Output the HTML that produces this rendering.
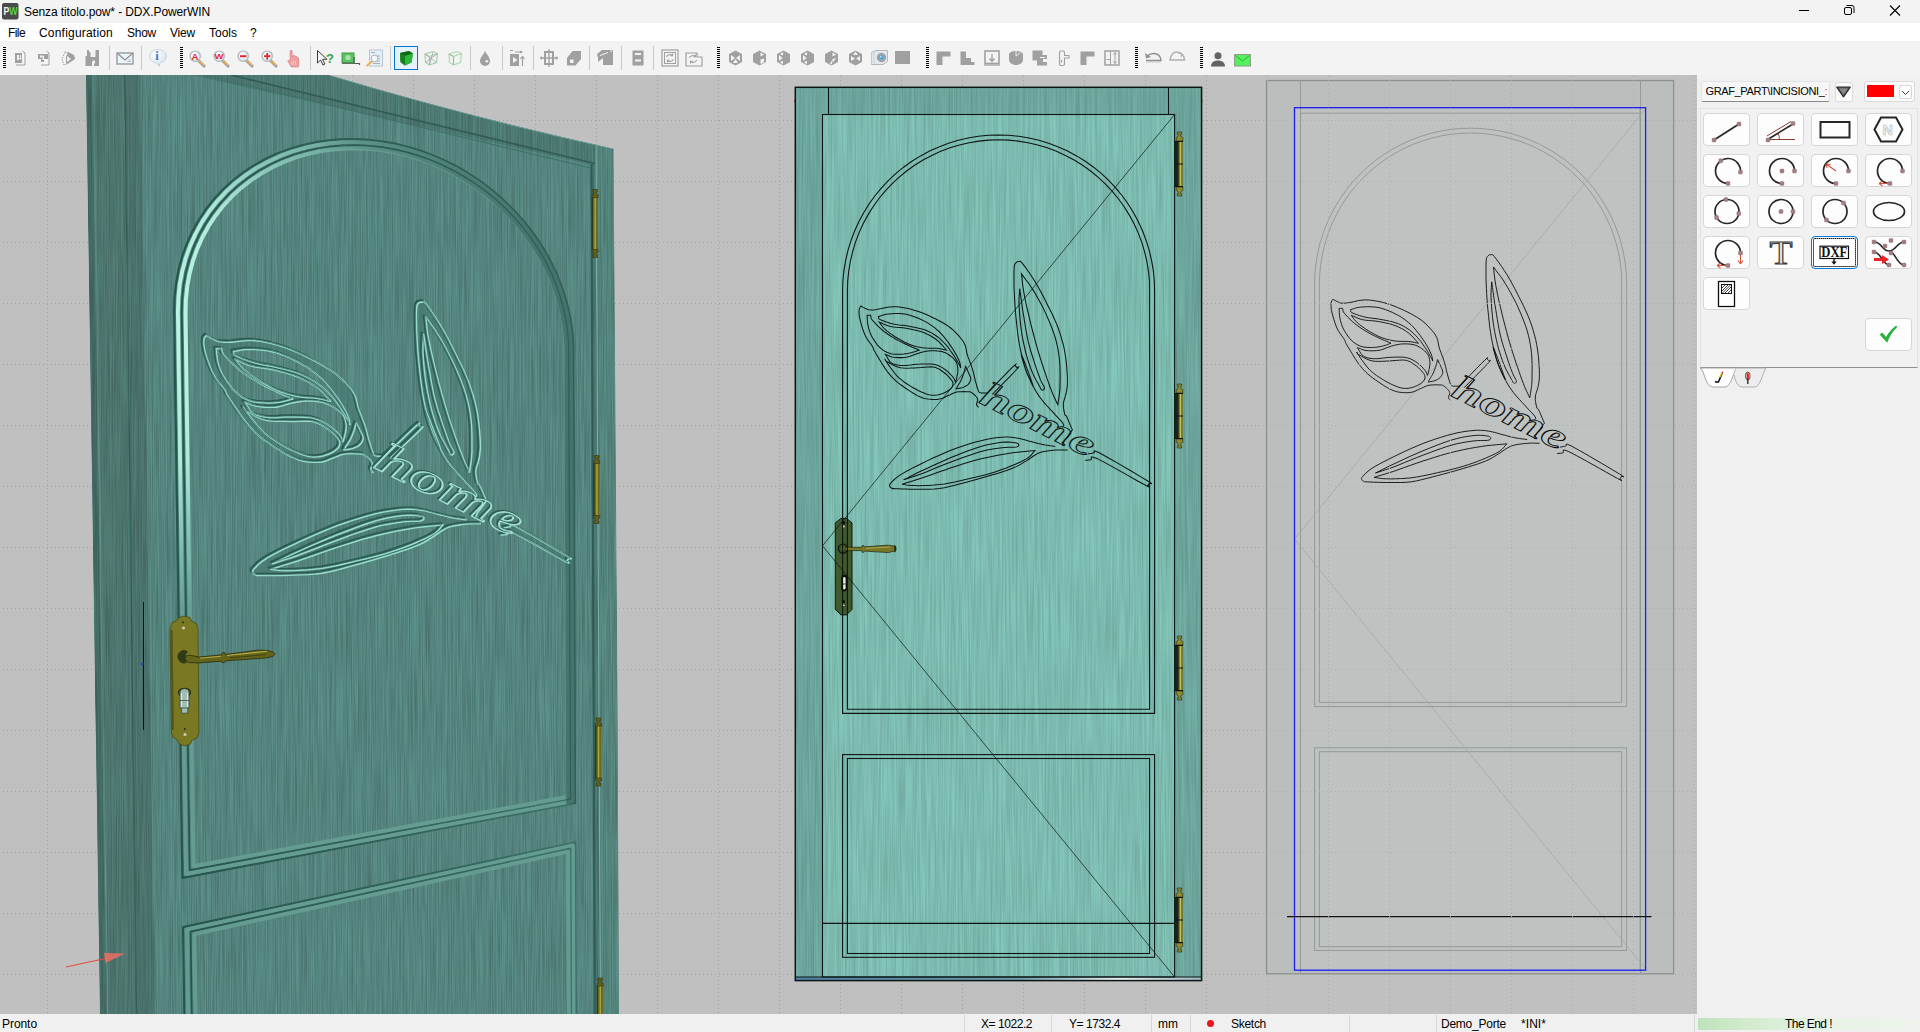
<!DOCTYPE html>
<html lang="it"><head><meta charset="utf-8"><title>Senza titolo.pow* - DDX.PowerWIN</title>
<style>
*{box-sizing:border-box}
html,body{margin:0;padding:0}
body{width:1920px;height:1032px;overflow:hidden;background:#f0f0f0;font:12px "Liberation Sans",sans-serif;color:#000;position:relative}
.abs{position:absolute}
#titlebar{left:0;top:0;width:1920px;height:23px;background:#f3f3f3}
#menubar{left:0;top:23px;width:1920px;height:18px;background:#fff}
#toolbar{left:0;top:41px;width:1920px;height:34px;background:#f3f3f3}
#viewport{left:0;top:75px;width:1697px;height:939px;background:#c0c0c0;overflow:hidden}
#side{left:1697px;top:75px;width:223px;height:939px;background:#f0f0f0}
#status{left:0;top:1014px;width:1920px;height:18px;background:#f0f0f0}
.t{position:absolute;white-space:pre;line-height:14px}
.mi{position:absolute;top:3px;line-height:14px;white-space:pre}
.st{position:absolute;top:3px;line-height:14px;white-space:pre}
.sep{position:absolute;top:1px;width:1px;height:17px;background:#d7d7d7}
</style></head>
<body>
<div id="titlebar" class="abs">
<svg class="abs" style="left:2px;top:3px" width="17" height="17" viewBox="0 0 17 17"><rect x="0" y="0" width="16.5" height="16.5" rx="2" fill="#4a4a4a"/><text x="1.500" y="11.700" font-family="Liberation Sans,sans-serif" font-weight="bold" font-size="10" fill="#f2f2f2" textLength="14" lengthAdjust="spacingAndGlyphs">P<tspan fill="#5fd23c">W</tspan></text></svg>
<span class="t" style="left:24px;letter-spacing:-0.107px;top:5px;font-size:12px">Senza titolo.pow* - DDX.PowerWIN</span>
<svg class="abs" style="left:1790px;top:0" width="130" height="23" viewBox="0 0 130 23" fill="none" stroke="#000" stroke-width="1">
<path d="M9 10.5h10"/>
<rect x="54.5" y="7.5" width="7" height="7" rx="1.5"/><path d="M56.5 5.5h5.5a2 2 0 0 1 2 2v5.500"/>
<path d="M100 5.500l10 10M110 5.500l-10 10" stroke-width="1.100"/>
</svg>
</div>
<div id="menubar" class="abs"><span class="mi" style="left:8px;letter-spacing:-0.585px;">File</span><span class="mi" style="left:39px;letter-spacing:0.201px;">Configuration</span><span class="mi" style="left:127px;letter-spacing:-0.258px;">Show</span><span class="mi" style="left:170px;letter-spacing:-0.200px;">View</span><span class="mi" style="left:209px;letter-spacing:-0.004px;">Tools</span><span class="mi" style="left:250px;letter-spacing:0.010px;">?</span></div>
<div id="toolbar" class="abs"><i class="abs" style="left:3px;top:6px;width:3px;height:22px;background:repeating-linear-gradient(180deg,#000 0,#000 1px,transparent 1px,transparent 2px)"></i><i class="abs" style="left:180px;top:6px;width:3px;height:22px;background:repeating-linear-gradient(180deg,#000 0,#000 1px,transparent 1px,transparent 2px)"></i><i class="abs" style="left:717px;top:6px;width:3px;height:22px;background:repeating-linear-gradient(180deg,#000 0,#000 1px,transparent 1px,transparent 2px)"></i><i class="abs" style="left:926px;top:6px;width:3px;height:22px;background:repeating-linear-gradient(180deg,#000 0,#000 1px,transparent 1px,transparent 2px)"></i><i class="abs" style="left:1135px;top:6px;width:3px;height:22px;background:repeating-linear-gradient(180deg,#000 0,#000 1px,transparent 1px,transparent 2px)"></i><i class="abs" style="left:1200px;top:6px;width:3px;height:22px;background:repeating-linear-gradient(180deg,#000 0,#000 1px,transparent 1px,transparent 2px)"></i><i class="abs" style="left:109px;top:5px;width:1px;height:24px;background:#c9c9c9"></i><i class="abs" style="left:141px;top:5px;width:1px;height:24px;background:#c9c9c9"></i><i class="abs" style="left:310px;top:5px;width:1px;height:24px;background:#c9c9c9"></i><i class="abs" style="left:390px;top:5px;width:1px;height:24px;background:#c9c9c9"></i><i class="abs" style="left:470px;top:5px;width:1px;height:24px;background:#c9c9c9"></i><i class="abs" style="left:502px;top:5px;width:1px;height:24px;background:#c9c9c9"></i><i class="abs" style="left:533px;top:5px;width:1px;height:24px;background:#c9c9c9"></i><i class="abs" style="left:589px;top:5px;width:1px;height:24px;background:#c9c9c9"></i><i class="abs" style="left:621px;top:5px;width:1px;height:24px;background:#c9c9c9"></i><i class="abs" style="left:653px;top:5px;width:1px;height:24px;background:#c9c9c9"></i><svg class="abs" style="left:13px;top:9px" width="16" height="16" viewBox="0 0 16 16" ><path d="M2 3h7v10H2z" fill="#a0a0a0"/><path d="M4 5h2v5H4zM7 5h1v3h1l-1.500 2L6 8h1z" fill="#f3f3f3"/><path d="M9.500 1l2.500 2v12H3" fill="none" stroke="#a0a0a0"/></svg><svg class="abs" style="left:37px;top:9px" width="16" height="16" viewBox="0 0 16 16" ><path d="M1 4h10v5H7v3H4V9H1z" fill="#a0a0a0"/><path d="M3 5.500h2v2H3zM6 5l1.500 2H7v3H5.500V7H5z" fill="#f3f3f3"/><path d="M9.500 1l2.500 2v12H4" fill="none" stroke="#a0a0a0"/></svg><svg class="abs" style="left:60px;top:9px" width="17" height="17" viewBox="0 0 17 17" ><path d="M5 2l5 1 5 5-6 5-5 2-2-6z" fill="none" stroke="#a0a0a0" stroke-dasharray="1.500 1"/><path d="M8 2l6 3 1 4-3 2-6 3V7z" fill="#a0a0a0"/><path d="M7 6l4 3-4 3z" fill="#f3f3f3"/></svg><svg class="abs" style="left:84px;top:8px" width="16" height="18" viewBox="0 0 16 18" ><path d="M3 1v6H1.500v10H8v-4h2v4h5V1h-3.500v7H6.500V3H5V1z" fill="#a0a0a0"/><path d="M8.500 11.500h2.500v3h-2.500z" fill="#f3f3f3"/></svg><svg class="abs" style="left:116px;top:11px" width="18" height="13" viewBox="0 0 18 13" ><rect x="1" y="1" width="16" height="11" fill="#e9f6fb" stroke="#9a9a9a" stroke-width="1.400"/><path d="M1.500 1.500L9 8l7.500 -6.500" fill="none" stroke="#8c8c8c" stroke-width="1.200"/><path d="M11 9.500h4M12 8h3" stroke="#b5b5b5" stroke-width=".8"/></svg><svg class="abs" style="left:148px;top:7px" width="20" height="20" viewBox="0 0 20 20" ><defs><radialGradient id="ig" cx="40%" cy="30%" r="75%"><stop offset="0" stop-color="#fff"/><stop offset=".7" stop-color="#dfeaf4"/><stop offset="1" stop-color="#aebdcc"/></radialGradient></defs><path d="M10 1.500c4.800 0 8.300 3 8.300 6.800 0 3.300-2.600 6-6.300 6.600l-.5 3.300-3-3.200C4.300 14.600 1.600 11.800 1.600 8.300 1.600 4.500 5.200 1.500 10 1.500z" fill="url(#ig)" stroke="#b9c4d0" stroke-width=".6"/><text x="7.300" y="12.300" font-family="Liberation Serif,serif" font-weight="bold" font-size="12.500" fill="#4a72c8">i</text></svg><svg class="abs" style="left:189px;top:9px" width="18" height="18" viewBox="0 0 18 18" ><defs><radialGradient id="lg" cx="40%" cy="35%" r="70%"><stop offset="0" stop-color="#fff"/><stop offset="1" stop-color="#cfe3ee"/></radialGradient></defs><path d="M9.500 10.500L15 16" stroke="#9a9a9a" stroke-width="3" stroke-linecap="round"/><path d="M9.500 10.200L14.600 15.300" stroke="#f4b24a" stroke-width="1.600" stroke-linecap="round"/><circle cx="6.200" cy="6.200" r="5.200" fill="url(#lg)" stroke="#a9b4bb" stroke-width="1.200"/><text x="2.600" y="9.800" font-family="Liberation Sans,sans-serif" font-weight="bold" font-size="9.500" fill="#e8262a">A</text></svg><svg class="abs" style="left:213px;top:9px" width="18" height="18" viewBox="0 0 18 18" ><defs><radialGradient id="lg" cx="40%" cy="35%" r="70%"><stop offset="0" stop-color="#fff"/><stop offset="1" stop-color="#cfe3ee"/></radialGradient></defs><path d="M9.500 10.500L15 16" stroke="#9a9a9a" stroke-width="3" stroke-linecap="round"/><path d="M9.500 10.200L14.600 15.300" stroke="#f4b24a" stroke-width="1.600" stroke-linecap="round"/><circle cx="6.200" cy="6.200" r="5.200" fill="url(#lg)" stroke="#a9b4bb" stroke-width="1.200"/><text x="1.600" y="9.300" font-family="Liberation Sans,sans-serif" font-weight="bold" font-size="8" fill="#e8262a" textLength="9" lengthAdjust="spacingAndGlyphs">W</text></svg><svg class="abs" style="left:237px;top:9px" width="18" height="18" viewBox="0 0 18 18" ><defs><radialGradient id="lg" cx="40%" cy="35%" r="70%"><stop offset="0" stop-color="#fff"/><stop offset="1" stop-color="#cfe3ee"/></radialGradient></defs><path d="M9.500 10.500L15 16" stroke="#9a9a9a" stroke-width="3" stroke-linecap="round"/><path d="M9.500 10.200L14.600 15.300" stroke="#f4b24a" stroke-width="1.600" stroke-linecap="round"/><circle cx="6.200" cy="6.200" r="5.200" fill="url(#lg)" stroke="#a9b4bb" stroke-width="1.200"/><path d="M3 6.200h6.400" stroke="#e8262a" stroke-width="2"/></svg><svg class="abs" style="left:261px;top:9px" width="18" height="18" viewBox="0 0 18 18" ><defs><radialGradient id="lg" cx="40%" cy="35%" r="70%"><stop offset="0" stop-color="#fff"/><stop offset="1" stop-color="#cfe3ee"/></radialGradient></defs><path d="M9.500 10.500L15 16" stroke="#9a9a9a" stroke-width="3" stroke-linecap="round"/><path d="M9.500 10.200L14.600 15.300" stroke="#f4b24a" stroke-width="1.600" stroke-linecap="round"/><circle cx="6.200" cy="6.200" r="5.200" fill="url(#lg)" stroke="#a9b4bb" stroke-width="1.200"/><path d="M3 6.200h6.400M6.200 3v6.400" stroke="#e8262a" stroke-width="1.800"/></svg><svg class="abs" style="left:286px;top:8px" width="16" height="19" viewBox="0 0 16 19" ><path d="M5 1.200c.9 0 1.200.6 1.200 1.400V8l1-1.500c.5-.5 1.300-.4 1.500.2l.3.800c.5-.6 1.400-.5 1.700.2l.3.900c.5-.5 1.300-.3 1.500.4.400 1.800.6 3.500.3 5.200L12.500 18H5.300L2 12.500c-.5-.8.300-1.700 1.200-1.200l.9.800V2.600c0-.8.200-1.400.9-1.400z" fill="#eda1a3" stroke="#d9777b" stroke-width=".6"/><path d="M7.500 12v4M9.500 12v4M5.500 12.500v3" stroke="#f6d2d3" stroke-width=".7"/></svg><svg class="abs" style="left:316px;top:8px" width="20" height="18" viewBox="0 0 20 18" ><path d="M1.500 1.500v12.500l3.200-3 2.200 5 2-.9-2.200-4.800h4.300z" fill="#f3f3f3" stroke="#3c3c3c" stroke-width="1"/><text x="10" y="14" font-family="Liberation Sans,sans-serif" font-weight="bold" font-size="13" fill="#35a545">?</text></svg><svg class="abs" style="left:341px;top:11px" width="20" height="14" viewBox="0 0 20 14" ><rect x="1" y="1" width="12" height="9.500" fill="#5cc463" stroke="#3e9a48" stroke-width="1"/><circle cx="7" cy="5.500" r="2.600" fill="#a9e3ad"/><path d="M13 5v6.500h5.500v1.500" fill="none" stroke="#555" stroke-width="1.200"/><path d="M1 11.500h13" stroke="#6a6a6a" stroke-width="1"/></svg><svg class="abs" style="left:365px;top:8px" width="19" height="19" viewBox="0 0 19 19" ><rect x="4.500" y="1" width="13" height="16" fill="#e6eef8" stroke="#b9c6d6" stroke-width="1"/><path d="M6 3.500h4M12 7h3M12 9.500h3M12 12h3M8 14.500h7" stroke="#9aa7b8" stroke-width=".9"/><circle cx="9.500" cy="9.500" r="3.400" fill="#f4f8fc" stroke="#a9b4bb" stroke-width="1"/><path d="M7 12.500L2 16.500" stroke="#f0ae48" stroke-width="1.800" stroke-linecap="round"/></svg><i class="abs" style="left:394px;top:5px;width:24px;height:24px;background:#e5f1fb;border:1px solid #0078d7"></i><svg class="abs" style="left:398px;top:9px" width="16" height="16" viewBox="0 0 16 16" ><path d="M2 3l9-2 4 2.500-1.500 9L7 15.500 2.500 12z" fill="#1f9a2b"/><path d="M2 3l9-2 4 2.500L7 6z" fill="#0c6a16"/><path d="M7 6l8-2.500-1.500 9L7 15.500z" fill="#2fb53c"/><path d="M2 3l5 3v9.500L2.500 12z" fill="#15801f"/></svg><svg class="abs" style="left:423px;top:9px" width="16" height="16" viewBox="0 0 16 16" ><path d="M2 4l8-2.500 4.500 2-1 9L6.500 15 2.500 12.500zM2 4l4.500 2.500 8-3M6.500 6.500V15" fill="none" stroke="#9fcfa4" stroke-width="1.100"/><path d="M2 4l11.500 8.500M10 2.500l-3.500 12.500M14.500 3.500l-12 9" stroke="#a5a5a5" stroke-width=".8"/></svg><svg class="abs" style="left:447px;top:9px" width="16" height="16" viewBox="0 0 16 16" ><path d="M2 4l8-2.500 4.500 2-1 9L6.500 15 2.500 12.500zM2 4l4.500 2.500 8-3M6.500 6.500V15" fill="none" stroke="#a8d8ac" stroke-width="1.100"/><path d="M2 4l4.500 2.500V15" fill="none" stroke="#a9a9a9" stroke-width=".9"/></svg><svg class="abs" style="left:478px;top:8px" width="14" height="18" viewBox="0 0 14 18" ><path d="M7 1.500c.5 3 5 6 5 10.500a5 5 0 0 1-10 0C2 8 6.500 5 7 1.500z" fill="#a0a0a0"/><circle cx="8.800" cy="12.300" r="1.300" fill="#f3f3f3"/></svg><svg class="abs" style="left:509px;top:8px" width="17" height="18" viewBox="0 0 17 18" ><path d="M1 5h9v12H1z" fill="#a0a0a0"/><path d="M4 8l4.500 3L4 14z" fill="#f3f3f3"/><path d="M1 1.500h3M6 3h6M13.500 17V8M11.500 10l2-2.500 2 2.500" fill="none" stroke="#a0a0a0" stroke-width="1.200"/><circle cx="12" cy="3" r="1.300" fill="#a0a0a0"/></svg><svg class="abs" style="left:540px;top:8px" width="18" height="18" viewBox="0 0 18 18" ><path d="M5 3h8v12H5z" fill="none" stroke="#a0a0a0" stroke-width="2"/><path d="M9 0v18M0 9h18" stroke="#a0a0a0" stroke-width="1.300"/><path d="M2 7l-2 2 2 2zM16 7l2 2-2 2z" fill="#a0a0a0"/></svg><svg class="abs" style="left:566px;top:9px" width="16" height="16" viewBox="0 0 16 16" ><path d="M6.500 1H15v8l-5.500 6.500H1V8z" fill="#a0a0a0"/><path d="M4 9.500h3.500V13H4z" fill="#f3f3f3"/></svg><svg class="abs" style="left:596px;top:8px" width="18" height="17" viewBox="0 0 18 17" ><path d="M1 5L6 1h11v15H7v-7L2 13V9z" fill="#a0a0a0"/><path d="M4 6.500l8-3" stroke="#f3f3f3" stroke-width="1"/><path d="M14.500 1.500l1.500 1.500M16 1.500l-1.500 1.500" stroke="#f3f3f3" stroke-width=".8"/></svg><svg class="abs" style="left:632px;top:9px" width="12" height="16" viewBox="0 0 12 16" ><rect x="0.500" y="0.500" width="11" height="15" fill="#a0a0a0"/><path d="M3 4h6M3 10.500h6" stroke="#f3f3f3" stroke-width="2"/></svg><svg class="abs" style="left:661px;top:8px" width="18" height="18" viewBox="0 0 18 18" ><rect x="1" y="1" width="16" height="16" fill="none" stroke="#a0a0a0" stroke-width="1.200"/><rect x="3.500" y="3.500" width="11" height="11" fill="none" stroke="#a0a0a0" stroke-width="1"/><path d="M5.500 8a3.500 3 0 0 1 6-1.500M12.500 10a3.500 3 0 0 1-6 1.500M11.500 4.500v2.200h-2.200M6.500 13.500v-2.200h2.200" fill="none" stroke="#a0a0a0" stroke-width="1.100"/></svg><svg class="abs" style="left:685px;top:8px" width="18" height="18" viewBox="0 0 18 18" ><path d="M1 4h11v4h5v9H1z" fill="none" stroke="#a0a0a0" stroke-width="1.200"/><path d="M4.500 9a3.500 3 0 0 1 6-1.500M11.500 11a3.500 3 0 0 1-6 1.500M10.500 5.500v2.200H8.300M5.500 14.500v-2.200h2.200" fill="none" stroke="#a0a0a0" stroke-width="1.100"/></svg><svg class="abs" style="left:728px;top:9px" width="15" height="16" viewBox="0 0 15 16" ><path d="M7.500 0.500L14 4v8L7.500 15.500L1 12V4z" fill="#a0a0a0"/><path d="M3 5l4 3-4 3zM12 5l-4 3 4 3zM7.500 9l2.500 4h-5z" fill="#f3f3f3"/></svg><svg class="abs" style="left:752px;top:9px" width="15" height="16" viewBox="0 0 15 16" ><path d="M7.500 0.500L14 4v8L7.500 15.500L1 12V4z" fill="#a0a0a0"/><path d="M8.500 2.500l3.500 2-3.500 2zM8.500 9.500l3.500 -1v4l-3.500 1.500z" fill="#f3f3f3"/></svg><svg class="abs" style="left:776px;top:9px" width="15" height="16" viewBox="0 0 15 16" ><path d="M7.500 0.500L14 4v8L7.500 15.500L1 12V4z" fill="#a0a0a0"/><path d="M3 5l3.500 3-3.500 3zM7 2l-3 2 3 1.500zM7 10.500l-3 2 3 1.500z" fill="#f3f3f3"/></svg><svg class="abs" style="left:800px;top:9px" width="15" height="16" viewBox="0 0 15 16" ><path d="M7.500 0.500L14 4v8L7.500 15.500L1 12V4z" fill="#a0a0a0"/><path d="M3 5l3.500 3-3.500 3zM7 2l-3 2 3 1.500zM7 10.500l-3 2 3 1.500z" fill="#f3f3f3"/></svg><svg class="abs" style="left:824px;top:9px" width="15" height="16" viewBox="0 0 15 16" ><path d="M7.500 0.500L14 4v8L7.500 15.500L1 12V4z" fill="#a0a0a0"/><path d="M8.500 2.500l3.500 2-3.500 2zM12 8l-3.500 1v4zM8 10.500l-2 3 2 1z" fill="#f3f3f3"/></svg><svg class="abs" style="left:848px;top:9px" width="15" height="16" viewBox="0 0 15 16" ><path d="M7.500 0.500L14 4v8L7.500 15.500L1 12V4z" fill="#a0a0a0"/><path d="M7.500 1.500l2.500 3.500h-5zM3 6l4 2.500-4 2.500zM12 6l-4 2.500 4 2.500z" fill="#f3f3f3"/></svg><svg class="abs" style="left:870px;top:8px" width="19" height="17" viewBox="0 0 19 17" ><path d="M1.500 3.500L6 1.500h11.500v11L13 15.500H1.500z" fill="#e4e7e9" stroke="#adb2b6" stroke-width=".9"/><path d="M1.500 3.500v12M4 2.600v12.600" stroke="#c8cccf" stroke-width=".8" fill="none"/><circle cx="11.500" cy="8.500" r="4.200" fill="#9ea6ac" stroke="#7f878d" stroke-width=".6"/><circle cx="11.500" cy="8.500" r="2.300" fill="#47a9dc"/><circle cx="10.800" cy="7.800" r=".8" fill="#d9f0fb"/></svg><i class="abs" style="left:895px;top:10px;width:15px;height:13px;background:#a0a0a0"></i><svg class="abs" style="left:936px;top:10px" width="15" height="14" viewBox="0 0 15 14" ><path d="M0.500 0.500h14v5h-8v8.500h-6z" fill="#a0a0a0"/></svg><svg class="abs" style="left:960px;top:10px" width="15" height="14" viewBox="0 0 15 14" ><path d="M0.500 0.500h5.500v6.500h5v4h3.500v3h-14z" fill="#a0a0a0"/></svg><svg class="abs" style="left:984px;top:9px" width="16" height="16" viewBox="0 0 16 16" ><rect x="1" y="1" width="14" height="12.500" fill="none" stroke="#a0a0a0" stroke-width="1.600"/><path d="M0 15h16" stroke="#a0a0a0" stroke-width="1.200"/><path d="M8 4v7M5.500 8.500L8 11.500l2.500-3" fill="none" stroke="#a0a0a0" stroke-width="1.300"/></svg><svg class="abs" style="left:1008px;top:9px" width="16" height="16" viewBox="0 0 16 16" ><path d="M1 4.500C1 2.500 4 1 8 1s7 1.500 7 3.500v5.500c0 2.500-3 5-7 5s-7-2.500-7-5z" fill="#a0a0a0"/><path d="M8 1v5l4.500-3.500" fill="none" stroke="#f3f3f3" stroke-width=".9"/></svg><svg class="abs" style="left:1032px;top:9px" width="16" height="16" viewBox="0 0 16 16" ><path d="M0.500 0.500h10v4.500h4.500v4h-4v3h4v3.500h-10v-5h-4.500z" fill="#a0a0a0"/><path d="M8 7.500h5" stroke="#f3f3f3" stroke-width="1"/></svg><svg class="abs" style="left:1058px;top:9px" width="12" height="16" viewBox="0 0 12 16" ><path d="M1.500 2.500a1.500 1.500 0 0 1 1.500-1.500h2a1.500 1.500 0 0 1 1.500 1.500v3h4.500v2.500h-4.500v6a1.500 1.500 0 0 1-1.500 1.500h-2a1.500 1.500 0 0 1-1.500-1.500z" fill="none" stroke="#a0a0a0" stroke-width="1.100"/><path d="M3.500 10v2.500" stroke="#a0a0a0" stroke-width="1.200"/></svg><svg class="abs" style="left:1080px;top:10px" width="15" height="14" viewBox="0 0 15 14" ><path d="M0.500 0.500h14v5h-8v8.500h-6z" fill="#a0a0a0"/></svg><svg class="abs" style="left:1104px;top:9px" width="16" height="16" viewBox="0 0 16 16" ><rect x="1" y="1" width="14" height="14" fill="none" stroke="#a0a0a0" stroke-width="1.500"/><path d="M6.500 1v14M11 2.500v11M9.500 4.500l1.500-2 1.500 2M9.500 11.500l1.500 2 1.500-2M2.500 9.500h3.500" fill="none" stroke="#a0a0a0" stroke-width="1"/></svg><svg class="abs" style="left:1144px;top:10px" width="18" height="12" viewBox="0 0 18 12" ><path d="M2 9.500h15c0-4-3-7-7.500-7-2.500 0-4.500 1-6 2.500" fill="none" stroke="#909090" stroke-width="1.500"/><path d="M1 2l1 5.500 5-1.500z" fill="#909090"/><path d="M2 11h15" stroke="#c6c6c6" stroke-width="1"/></svg><svg class="abs" style="left:1168px;top:9px" width="18" height="12" viewBox="0 0 18 12" ><path d="M2 10h14.500c0-4-3-8-7.500-8-3 0-6 2-7 8z" fill="none" stroke="#b0b0b0" stroke-width="1.400"/><path d="M10 3l4 1-1 3" fill="none" stroke="#b0b0b0" stroke-width="1.100"/></svg><svg class="abs" style="left:1210px;top:11px" width="16" height="15" viewBox="0 0 16 15" ><circle cx="8" cy="3.800" r="3.500" fill="#636363"/><path d="M1 14.500c0-4 3-6 7-6s7 2 7 6z" fill="#636363"/></svg><svg class="abs" style="left:1234px;top:13px" width="17" height="13" viewBox="0 0 17 13" ><rect x=".6" y=".6" width="15.800" height="11.400" fill="#53f25a" stroke="#8a9a8a" stroke-width="1"/><path d="M1.500 1.500L8.500 7l7-5.500" fill="none" stroke="#3aa843" stroke-width="1"/></svg></div>
<div id="viewport" class="abs"><svg class="abs" style="left:0;top:0" width="1697" height="939" viewBox="0 75 1697 939"><defs>
<filter id="grainF" x="0" y="0" width="100%" height="100%"><feTurbulence type="fractalNoise" baseFrequency="0.55 0.012" numOctaves="2" seed="7"/><feColorMatrix type="matrix" values="0 0 0 0 0  0 0 0 0 0  0 0 0 0 0  1.6 0 0 0 -0.45"/></filter>
<filter id="grainD" x="0" y="0" width="100%" height="100%"><feTurbulence type="fractalNoise" baseFrequency="0.8 0.012" numOctaves="3" seed="3"/><feColorMatrix type="matrix" values="0 0 0 0 0  0 0 0 0 0  0 0 0 0 0  1.8 0 0 0 -0.5"/></filter>
<radialGradient id="gr3" gradientUnits="userSpaceOnUse" cx="150" cy="330" r="330"><stop offset="0" stop-color="#bdf6e5"/><stop offset=".4" stop-color="#aeeada"/><stop offset=".62" stop-color="#86c5b7"/><stop offset=".85" stop-color="#689f94"/><stop offset="1" stop-color="#659c91"/></radialGradient>
<linearGradient id="shg" gradientUnits="userSpaceOnUse" x1="300" y1="0" x2="540" y2="0"><stop offset="0" stop-color="#234d46" stop-opacity="0"/><stop offset=".5" stop-color="#234d46" stop-opacity=".3"/><stop offset="1" stop-color="#234d46" stop-opacity=".5"/></linearGradient>
<linearGradient id="gd3" gradientUnits="userSpaceOnUse" x1="176" y1="0" x2="575" y2="0"><stop offset="0" stop-color="#27554e"/><stop offset=".5" stop-color="#2f6057"/><stop offset="1" stop-color="#3d7168"/></linearGradient>
<linearGradient id="thr" x1="0" y1="0" x2="1" y2="0"><stop offset="0" stop-color="#4f7fa6"/><stop offset=".55" stop-color="#6f9fb0"/><stop offset=".8" stop-color="#e8f0f0"/><stop offset="1" stop-color="#9ab8c0"/></linearGradient>
<clipPath id="clipLeaf3"><path id="leaf3p" d="M140.3 63.7L591.2 164.4 594.3 1069.8 158.2 1229.8z"/></clipPath>
<clipPath id="clipDoor3"><path d="M86 75H329Q469 117 613.500 148.700L617.500 700L619 1014H100z"/></clipPath>
</defs><path d="M47.5 76V1014M108.5 76V1014M169.5 76V1014M230.5 76V1014M291.5 76V1014M352.5 76V1014M413.5 76V1014M474.5 76V1014M535.5 76V1014M596.5 76V1014M657.5 76V1014M718.5 76V1014M779.5 76V1014M840.5 76V1014M901.5 76V1014M962.5 76V1014M1023.5 76V1014M1084.5 76V1014M1145.5 76V1014M1206.5 76V1014M1267.5 76V1014M1328.5 76V1014M1389.5 76V1014M1450.5 76V1014M1511.5 76V1014M1572.5 76V1014M1633.5 76V1014M1694.5 76V1014M3.0 120.5H1697M3.0 181.5H1697M3.0 242.5H1697M3.0 303.5H1697M3.0 364.5H1697M3.0 425.5H1697M3.0 486.5H1697M3.0 547.5H1697M3.0 608.5H1697M3.0 669.5H1697M3.0 730.5H1697M3.0 791.5H1697M3.0 852.5H1697M3.0 913.5H1697M3.0 974.5H1697" fill="none" stroke="#a2a2a2" stroke-width="1" stroke-dasharray="1 3" opacity="1"/><g clip-path="url(#clipDoor3)"><path d="M86 75H329Q469 117 613.500 148.700L617.500 700L619 1014H100z" fill="#527f78"/><path d="M86 75H124.700L136.500 1014H100z" fill="#547f78"/><path d="M89 75L103 1014" stroke="#48736b" stroke-width="6"/><path d="M93.500 75L107.500 1014" stroke="#659b91" stroke-width="1.600" opacity=".8"/><path d="M124.700 75H141L153.500 1014H136.500z" fill="#527c76"/><path d="M124.700 75L136.500 1014" stroke="#39695f" stroke-width="1.300"/><path d="M141 50L231 75L595 163.500L596 144.500L329 75z" fill="#53837b"/><path d="M140.3 63.7L591.2 164.4 594.3 1069.8 158.2 1229.8z" fill="#5c9089"/><path d="M596 144.500L613.500 148.700L617.500 700L619 1014H600.500z" fill="#5b8f87"/><rect x="86" y="75" width="534" height="939" fill="#1d423c" filter="url(#grainD)" opacity=".2"/><path d="M591.500 164L594.800 1014" stroke="#2f5d56" stroke-width="2.200"/><path d="M596 144.500L600.500 1014" stroke="#7ab5aa" stroke-width="1"/><path d="M204.600 75L590.400 168" stroke="#3f746b" stroke-width="1.100"/><path d="M231 75L595 163.500" stroke="#2f5d56" stroke-width="1.600"/><path d="M329 75Q469 117 613.500 148.700" stroke="#6aa89d" stroke-width="1.200" fill="none"/><g clip-path="url(#clipLeaf3)" fill="none" stroke-linejoin="round"><path d="M182.4 877.9L174.1 311.3 174.5 297.4 176 283.7 178.4 270.2 181.9 257.1 186.5 244.4 192 232.1 198.4 220.5 205.8 209.4 214 199 223 189.4 232.8 180.5 243.2 172.4 254.2 165.2 265.7 158.8 277.7 153.3 290.1 148.7 302.8 145 315.7 142.2 328.8 140.3 342.1 139.2 355.4 139.1 368.6 139.8 381.8 141.3 394.9 143.6 407.7 146.7 420.4 150.6 432.7 155.2 444.7 160.4 456.4 166.3 467.6 172.8 478.4 179.9 488.7 187.5 498.6 195.6 507.8 204.2 516.6 213.2 524.8 222.5 532.3 232.2 539.3 242.2 545.7 252.5 551.4 263.1 556.5 273.8 560.9 284.7 564.7 295.7 567.7 306.8 570.2 317.9 571.9 329.1 573 340.3 573.3 351.4 575.1 803.1zM183.1 927.1L575.2 842.4 576.1 1058.1 187 1196.3z" stroke="url(#gd3)" stroke-width="2.2"/><path d="M186.1 874L177.9 311.7 178.4 298 179.7 284.5 182.2 271.3 185.6 258.4 190.1 245.9 195.5 233.9 201.8 222.4 209 211.5 217.1 201.3 225.9 191.8 235.5 183 245.7 175.1 256.5 167.9 267.9 161.7 279.6 156.2 291.8 151.7 304.3 148 317 145.2 329.9 143.3 342.9 142.3 356 142.1 369.1 142.8 382 144.3 394.9 146.5 407.6 149.6 420 153.4 432.2 157.8 444 163 455.5 168.8 466.6 175.2 477.2 182.1 487.4 189.6 497.1 197.6 506.3 206 514.9 214.9 522.9 224.1 530.4 233.7 537.3 243.5 543.6 253.7 549.2 264 554.3 274.6 558.6 285.3 562.3 296.2 565.4 307.1 567.8 318.1 569.5 329.2 570.5 340.2 570.9 351.2 572.7 801zM186.9 929.4L572.9 845.5 573.7 1056.5 190.6 1191.8z" stroke="url(#gr3)" stroke-width="3.9"/><path d="M189.7 870.2L181.7 312.1 182.2 298.6 183.5 285.4 185.9 272.4 189.3 259.7 193.6 247.4 198.9 235.6 205.2 224.3 212.3 213.6 220.2 203.6 228.8 194.2 238.2 185.6 248.3 177.8 258.9 170.7 270 164.5 281.6 159.2 293.5 154.7 305.8 151 318.3 148.3 331 146.4 343.8 145.4 356.6 145.2 369.5 145.8 382.3 147.2 394.9 149.5 407.4 152.4 419.6 156.1 431.6 160.5 443.3 165.6 454.6 171.3 465.5 177.5 476 184.4 486.1 191.7 495.6 199.6 504.7 207.9 513.2 216.6 521.1 225.7 528.5 235.1 535.3 244.8 541.5 254.8 547.1 265 552 275.4 556.3 286 560 296.7 563 307.5 565.4 318.4 567.1 329.2 568.1 340.1 568.4 350.9 570.3 798.9zM190.6 931.7L570.5 848.5 571.3 1054.8 194.3 1187.4z" stroke="url(#gd3)" stroke-width="1.8"/><path d="M193.4 866.3L185.5 312.4 185.9 299.3 187.3 286.2 189.6 273.5 192.9 261 197.2 248.9 202.4 237.3 208.5 226.2 215.5 215.7 223.2 205.8 231.7 196.6 241 188.1 250.8 180.4 261.2 173.5 272.1 167.4 283.5 162.1 295.2 157.7 307.3 154.1 319.6 151.3 332.1 149.5 344.6 148.4 357.3 148.2 369.9 148.8 382.5 150.2 394.9 152.4 407.2 155.3 419.3 158.9 431.1 163.2 442.6 168.2 453.7 173.7 464.5 179.9 474.8 186.6 484.7 193.9 494.1 201.6 503.1 209.7 511.5 218.3 519.3 227.3 526.6 236.5 533.3 246.1 539.4 255.9 544.9 266 549.8 276.3 554 286.7 557.7 297.2 560.6 307.9 563 318.6 564.7 329.3 565.7 340 566 350.7 567.9 796.8zM194.4 934.1L568.1 851.6 568.9 1053.1 197.9 1183.1z" stroke="url(#gr3)" stroke-width="4"/><path d="M319.5 146.8L326.3 145.8 333.2 145 340 144.4 346.9 144.1 353.8 144 360.7 144.1 367.6 144.5 374.5 145.2 381.3 146 388.1 147.1 394.9 148.4 401.6 149.9 408.3 151.6 414.9 153.5 421.4 155.6 427.8 158 434.2 160.5 440.5 163.2 446.6 166.1 452.7 169.1 458.6 172.4 464.5 175.8 470.2 179.3 475.8 183.1 481.2 186.9 486.6 190.9 491.7 195.1 496.8 199.4 501.7 203.8 506.4 208.3 511 213 515.5 217.7 519.7 222.6 523.8 227.6 527.8 232.6 531.6 237.8 535.2 243 538.6 248.3 541.9 253.7 545 259.1 547.9 264.7 550.6 270.2 553.2 275.8 555.5 281.5 557.7 287.2 559.7 292.9 561.5 298.7 563.2 304.5 564.6 310.3 565.9 316.1 566.9 321.9 567.8 327.8 568.5 333.6 569 339.4 569.3 345.2 569.4 351 569.5 394.2 571.2 803.9" stroke="url(#shg)" stroke-width="10" stroke-linecap="butt"/><path d="M372.5 472.4L371.9 471.7 371.1 471 370.5 470.3 369.9 469.5 369.7 468.7 369.8 467.7 370.2 466.6 370.7 465.5 371.1 464.4 371.3 463.4 371.1 462.5 370.8 461.7 370.3 460.9 369.7 460 369 459.1 368.1 458.1 366.9 457 365.7 455.9 364.4 455 363.3 454.2 362.5 453.7 361.9 453.4 361.3 453.2 360.3 453.1 358.8 453 356.4 452.9 353.4 452.8 350.1 452.7 346.8 452.8 343.9 453.1 341.4 453.6 339 454.4 336.8 455.3 334.6 456.2 332.3 457.1 330 457.9 327.8 458.9 325.5 459.8 323.2 460.5 320.6 461.1 317.7 461.3 314.5 461.4 311.2 461.3 308 461 305 460.7 302.4 460.2 300 459.7 297.7 459 295.4 458.1 292.9 457 290.1 455.8 287.3 454.3 284.3 452.7 281.3 450.9 278 448.8 274.4 446.6 270.4 444 266.4 441.3 262.5 438.6 259 435.9 256 433.3 253.3 430.9 250.9 428.4 248.5 425.7 246.1 422.9 243.6 419.8 241.1 416.4 238.6 412.9 236.3 409.5 234.2 406.4 232.3 403.7 230.5 401 228.8 398.6 227.4 396.4 226.2 394.5 225.4 393.1 225.1 392.2 224.9 391.5 224.5 390.5 223.6 389 221.9 386.7 219.8 384.1 217.3 381.2 214.9 377.9 212.8 374.4 210.9 370.5 209 366 207.2 361.3 205.7 356.9 204.5 353 203.6 349.6 203.1 346.6 202.7 343.9 202.6 341.5 202.7 339.5 203 337.9 203.5 336.8 204.2 336.1 204.9 335.3 205.6 334.5 206.8 335.2 207.9 335.9 209.1 336.6 210.3 337.3 211.6 337.9 213 338.6 214.3 339.3 215.8 339.9 217.3 340.5 219 340.9 220.8 341.1 222.6 341.3 224.6 341.4 226.9 341.3 229.5 341.2 232.7 341 236.4 340.6 240.3 340.1 244.1 339.8 247.7 339.6 250.8 339.6 253.6 339.7 256.5 340 259.5 340.4 263 341 267 341.9 271.4 342.9 276 344.2 280.8 345.6 285.5 347.2 290.4 349.1 295.3 351.2 300.3 353.5 305.3 355.8 310 358.2 314.6 360.6 319.2 363.1 323.6 365.6 327.7 368.2 331.5 370.8 334.9 373.3 337.9 376 340.7 378.6 343.3 381.2 345.6 383.7 347.7 386 349.5 388.2 351.1 390.4 352.5 392.6 353.7 394.9 354.7 397.4 355.4 400.1 356 402.7 356.6 405.4 357.3 408 358.2 410.5 359.2 413 360.2 415.4 361.1 417.8 361.9 419.9 362.6 421.7 363.2 423.3 363.7 424.8 364.2 426.4 364.8 428.3 365.4 430.6 366.1 433.1 366.8 435.9 367.5 438.6 368.3 441.1 369.1 443.7 369.9 446.4 370.7 448.9 371.5 451.2 372.3 452.9 373 454 373.7 454.5 374.4 454.7 375 454.8 375.7 455.1 377.2 455.2 378.8 455.2 380.3 455.3 381.9 455.3 383.4 455.3 390.4 448.7 397.7 441.7 404.7 434.9 410.8 429.1 415.2 425 417.6 423 418.3 422.6 418.1 423.1 417.7 424 417.8 424.5 418.2 424.7 418.7 425.2 419.1 425.7 419.5 426.2 419.8 426.6 420.3 426.6 421.2 426.2 421.8 426 421.4 426.6 419.5 428.7 415.5 432.6 409.8 438.1 403.1 444.4 396.1 451 389.5 457.3zM215.1 347.5L216.2 347.6 217.2 347.6 218.3 347.7 219.3 347.8 220.4 347.9 220.7 349.1 220.9 350.1 221.1 351.2 221.7 352.6 223.1 354.5 225.4 357 228.4 360 231.8 363.2 235.4 366.4 239 369.4 242.7 372.2 246.6 374.8 250.6 377.4 254.6 379.8 258.4 382.1 262.1 384.2 265.7 386.1 269.3 387.8 272.8 389.5 276.1 391.1 279.4 392.6 282.5 394.1 285.6 395.4 288.6 396.8 291.6 398.2 289.1 398.8 286.6 399.5 284.1 400.2 281.5 400.8 278.7 401.3 275.9 401.6 272.9 401.9 269.9 402 266.8 402 263.7 401.9 260.7 401.7 257.6 401.5 254.5 401.1 251.4 400.5 248.4 399.6 245.5 398.3 242.5 396.8 239.6 395.1 236.8 393 234.1 390.7 231.4 388 228.8 384.9 226.3 381.6 224 378.2 222.1 375.1 220.5 372.1 219.2 369.2 218.2 366.4 217.3 363.6 216.6 360.9 216.1 358.1 215.7 355.4 215.5 352.8 215.3 350.1zM232.3 350.6L235.2 350.1 238 349.5 240.9 349 244 348.6 247.8 348.5 252.3 348.6 257.3 348.9 262.6 349.3 268 350.1 273.2 351.2 278.3 352.8 283.4 354.7 288.6 356.9 293.4 359.3 297.9 361.6 302.1 363.9 305.9 366.3 309.5 368.8 312.9 371.4 316.2 374 319.1 376.6 321.9 379.4 324.5 382.2 326.9 385.1 329.3 388 331.7 390.9 333.9 393.9 336.1 396.9 338.1 399.8 340 402.7 341.7 405.5 343.3 408.4 344.8 411.1 346 413.7 347.1 416 347.8 417.8 348.2 419.4 348.4 420.8 348.6 422.1 348.9 423.5 348.3 422.5 347.9 421.6 347.4 420.6 346.8 419.5 345.9 418 344.8 416.2 343.6 414.1 342.1 411.8 340.6 409.4 338.9 406.9 337 404.3 335 401.6 332.8 398.7 330.6 395.9 328.2 393.3 325.8 390.8 323.3 388.3 320.7 385.9 318 383.7 315 381.5 312 379.5 308.8 377.6 305.4 375.9 301.9 374.2 298.1 372.6 294 371.2 289.5 369.9 284.9 368.7 280.3 367.6 275.8 366.5 271.5 365.6 267.1 364.7 262.8 364 258.5 363.1 254.4 362.1 250.1 360.7 245.6 359.2 241.4 357.7 237.7 356.1 234.9 354.8 233.3 353.8 232.6 352.9 232.5 352.2 232.5 351.4zM233.7 358.2L237 359.6 240.2 361.1 243.4 362.6 246.8 364 250.6 365.2 254.7 366.1 259.2 366.8 263.8 367.4 268.6 368.2 273.4 369.1 278.3 370.3 283.5 371.7 288.6 373.2 293.6 374.8 298.1 376.5 302.2 378.4 306.1 380.4 309.7 382.5 313.1 384.7 316.3 387.1 319.2 389.6 321.9 392.2 324.4 395 326.9 397.7 329.5 400.4 326.9 399.8 324.5 399.2 322 398.6 319.3 398 316.4 397.5 313.1 397.1 309.6 396.9 305.8 396.7 302.1 396.3 298.3 395.8 294.7 395.1 291 394.3 287.3 393.3 283.6 392.1 279.9 390.8 276.1 389.2 272.3 387.4 268.5 385.4 264.7 383.3 260.9 381.2 257.1 378.8 253.2 376.2 249.4 373.6 245.9 371 242.9 368.6 240.5 366.3 238.6 364.2 236.9 362.2 235.4 360.2zM243.3 401L245.8 401.9 248.1 402.9 250.5 403.9 253.1 404.7 256.1 405.4 259.5 405.8 263.3 406.2 267.3 406.4 271.2 406.4 275 406.2 278.6 405.6 282.1 404.7 285.5 403.6 288.9 402.6 292.2 401.8 295.5 401.2 298.6 400.7 301.8 400.3 304.9 400 308 400 311.2 400.1 314.4 400.3 317.7 400.7 320.7 401.3 323.5 402 326 402.8 328.2 403.8 330.3 404.9 332.2 406.1 334.1 407.5 336 408.9 337.9 410.4 339.6 412 341.1 413.7 342.4 415.4 343.3 417.3 344 419.3 344.5 421.3 344.8 423.3 345 425.2 345 427.1 344.9 428.8 344.6 430.5 344.3 432.2 343.9 433.8 343.6 435.3 343.2 436.7 342.8 438 342.4 439.3 342 440.7 341.3 439.3 340.7 438 340.1 436.6 339.2 435.2 337.9 433.5 336.1 431.6 333.9 429.5 331.4 427.2 328.7 425.1 326.1 423.3 323.5 421.7 320.9 420.3 318.2 419 315.2 418 311.8 417.1 307.7 416.6 303 416.2 298.1 416.1 293.3 416 288.7 416 284.5 416.1 280.4 416.4 276.4 416.7 272.6 416.8 268.9 416.7 265.2 416.3 261.6 415.7 258.3 414.9 255.1 413.9 252.3 412.5 250.1 410.7 248.2 408.4 246.6 406 245 403.4zM242.1 406.6L242.6 407.3 242.9 407.9 243.3 408.6 244.2 409.4 245.9 410.5 248.7 412 252.2 414 256.3 416.1 260.7 418 265.1 419.3 269.8 420 274.8 420.4 280 420.4 285.1 420.4 290 420.5 294.7 420.5 299.4 420.3 303.9 420.2 308.1 420.2 311.8 420.6 315 421.5 317.8 422.6 320.3 423.9 322.6 425.4 324.9 427 327.4 428.8 329.8 430.8 332 432.9 334 434.9 335.6 436.7 336.8 438.1 337.7 439.4 338.3 440.5 338.6 441.6 338.7 442.7 338.6 443.9 338.2 445.1 337.7 446.3 336.8 447.4 335.7 448.5 334.3 449.6 332.6 450.8 330.6 451.8 328.5 452.8 326.4 453.6 324.2 454.4 321.9 455 319.4 455.5 317 455.9 314.6 456 312.3 456 310.1 455.8 307.8 455.5 305.4 454.9 302.5 454 299.3 452.8 295.7 451.4 291.9 449.7 288 447.8 284.1 445.7 280.1 443.4 275.9 440.9 271.6 438.2 267.6 435.5 264 432.7 260.9 429.9 258.2 427.1 255.7 424.2 253.4 421.3 251.1 418.6 249.1 416.1 247.3 413.7 245.5 411.3 243.9 409zM355.1 422L355.9 423.6 356.8 425.3 357.6 426.9 358.4 428.6 359.1 430.1 359.9 431.7 360.7 433.3 361.4 434.8 361.9 436.3 362 437.7 361.8 439.1 361.3 440.4 360.6 441.7 359.7 442.9 358.7 444 357.6 444.9 356.3 445.7 354.9 446.3 353.4 446.9 351.9 447.5 350.2 447.9 348.5 448.2 346.6 448.5 344.8 448.8 342.9 449.1 343.4 448.2 343.9 447.4 344.4 446.5 344.9 445.6 345.5 444.6 346.3 443.5 347.1 442.3 347.9 441 348.7 439.7 349.5 438.3 350.2 436.7 350.9 435.1 351.6 433.3 352.3 431.6 352.9 429.9 353.4 428.3 353.8 426.7 354.2 425.1 354.6 423.5zM474 496.8L474.3 496.2 474.8 495.7 475.3 495.1 475.3 494.2 474.6 492.8 473.1 490.9 470.9 488.4 468.3 485.6 465.4 482.6 462.5 479.4 459.5 476.1 456.2 472.5 452.8 468.7 449.3 464.6 446.1 460.3 443.1 455.4 440.1 450.2 437.1 444.7 434.5 439.2 432.1 434 429.9 428.1 427.7 421.4 425.9 415.3 424.9 411.1 425 410.5 426.9 415.2 430.5 424.5 434.6 435.1 438 444.4 439.7 449.3 439.4 449 437.6 445.6 435.1 440.3 432.4 434.1 430.2 428.5 428.5 423.3 426.9 417.7 425.4 411.7 423.9 405.6 422.6 399.4 421.5 393 420.5 386.3 419.6 379.5 418.8 372.7 418.1 366.1 417.5 359.7 416.9 353.3 416.4 347 416.1 340.8 415.8 334.9 415.5 328.9 415.4 322.8 415.3 317 415.4 311.9 415.5 307.9 415.8 305.4 416.1 304 416.5 303.3 417.1 302.9 417.6 302.4 418.3 301.8 419 301.4 419.8 301.2 420.6 301.1 421.4 301.2 422 301.2 422.5 301 423 301.2 423.9 302 425.5 303.9 427.9 307.2 430.9 311.6 434.3 316.6 437.7 322 440.9 327.2 443.9 332.5 446.9 338.1 449.9 343.8 452.7 349.5 455.5 355.1 458.1 360.5 460.8 365.9 463.3 371.3 465.6 376.7 467.8 382.2 469.7 387.8 471.6 393.5 473.2 399.2 474.7 404.9 475.9 410.7 476.9 416.9 477.7 423.3 478.4 429.7 478.8 435.6 479.1 440.7 479.2 444.8 479.2 448.1 478.9 451 478.6 453.7 478.2 456.5 477.6 459.5 476.8 462.3 475.9 465 475.1 467.7 474.7 470.3 474.7 473 475 475.7 475.5 478.3 476 480.5 476.4 482.3 476.7 483.2 477 483.4 477.3 483.4 477.8 483.8 478.5 485 479.6 487.2 480.9 490.1 482.3 493.5 483.8 496.9 485.2 500.2 484.1 501.6 483 503.1 482 504.6 480.9 506.1 480 507.4 479.1 508.6 478.2 509.6 477.4 510.6 476.7 511.6 476.1 512.7 475.5 513.8 475.1 515 474.7 516.2 474.4 517.2 474.1 518zM424.5 316.2L427.4 320.3 430.3 324.3 433.1 328.3 436 332.6 438.9 337.2 441.9 342.3 444.9 347.8 447.9 353.5 450.8 359.3 453.5 365 456.1 370.8 458.6 376.7 460.9 382.6 463 388.4 464.8 394 466.3 399.5 467.6 404.8 468.6 410 469.4 415.2 470 420.4 470.5 425.8 470.7 431.5 470.8 437 470.8 442.1 470.8 446.3 470.8 449.6 470.8 452.1 470.6 454.1 470.5 456.1 470.3 458.3 470 460.8 469.6 463.4 469.2 466 468.8 468.6 468.4 471.2 467.2 468.7 466 466.4 464.9 464 463.6 461.3 462.3 458 460.8 454.3 459.2 450.1 457.5 445.5 455.8 440.7 454 435.7 452.2 430.4 450.3 424.9 448.4 419.2 446.5 413.1 444.6 406.9 442.7 400.2 440.7 393.1 438.7 385.9 436.8 378.6 435 371.6 433.3 364.6 431.6 357.5 430 350.6 428.6 344.1 427.4 338.1 426.5 333 425.9 328.5 425.5 324.4 425 320.4zM422.5 333.5L422.3 337 422.1 340.4 421.9 343.8 421.8 347.6 421.8 352 422.1 357.2 422.6 362.9 423.1 369.1 423.8 375.2 424.6 381 425.5 386.6 426.5 392.2 427.6 397.6 428.8 402.9 430.1 408 431.4 413 432.9 417.8 434.4 422.4 436 426.8 437.5 430.9 439.2 434.8 441.1 438.5 442.9 441.9 444.5 444.9 445.9 447.4 447 449.4 447.8 451 448.5 452.1 449.1 453 449.7 453.6 450.3 454 450.8 454.1 451.3 453.9 451.8 453.6 452.1 453.3 452.4 453 452.6 452.7 452.8 452.3 452.8 451.7 452.5 450.7 451.9 449.5 451.2 448 450.2 446.3 449.1 444.1 447.9 441.5 446.6 438.1 445.2 434.2 443.7 430 442.1 425.4 440.6 420.9 439.1 416.2 437.5 411.4 436 406.4 434.5 401.3 433.1 396 431.9 390.3 430.7 384.2 429.6 378.1 428.6 372.3 427.6 366.9 426.8 362.1 426.1 357.6 425.4 353.4 424.9 349.6 424.3 346 423.9 343 423.5 340.4 423.2 338.1 422.9 335.9zM465.7 518.9L462.9 518.5 460 518.1 457.1 517.7 454.2 517.3 451.4 516.8 448.6 516.2 446 515.6 443.3 514.9 440.6 514.2 437.6 513.5 434.3 512.7 430.9 511.7 427.3 510.8 423.7 509.9 420.1 509.3 416.7 508.8 413.4 508.4 410 508.2 406.4 508.2 402.2 508.4 397.5 508.9 392.4 509.5 386.9 510.3 381 511.4 374.7 512.8 367.8 514.6 360.4 516.8 352.6 519.2 344.6 521.8 336.7 524.6 328.8 527.7 320.6 531.1 312.5 534.6 304.6 538.1 297.2 541.5 290.2 544.8 283.4 548 277 551.2 271.3 554.2 266.4 557 262.4 559.6 259.3 561.9 256.9 564.1 255 566 253.4 567.7 252.3 568.9 251.7 569.7 251.5 570.4 251.6 570.9 251.7 571.5 252 572.1 252.6 572.7 253.3 573.3 254.1 573.8 255 574.2 255.5 574.4 255.9 574.5 256.4 574.5 257.8 574.5 260.3 574.5 264.2 574.6 269.2 574.6 275 574.6 281.1 574.5 287.3 574.3 293.7 574.1 300.5 573.9 307.5 573.6 314.6 573 321.6 572.2 328.5 570.8 335.5 569.2 342.5 567.3 349.5 565.4 356.4 563.5 363.3 561.6 370.2 559.6 377 557.6 383.6 555.6 389.9 553.7 395.8 551.8 401.6 549.9 407.2 548.1 412.2 546.2 416.8 544.4 420.7 542.6 424.1 540.8 427.2 539 429.9 537.2 432.6 535.6 435 534 437.2 532.5 439.1 531.1 441 529.8 442.9 528.7 444.6 527.7 446.1 527 447.6 526.3 449.3 525.8 451.4 525.2 454.1 524.7 457.1 524.2 460.4 523.7 463.6 523.3 466.6 523.1 469.6 522.9 472.7 522.9 475.6 522.9 478.1 522.9 479.9 522.9zM271.7 562.8L276.6 560.4 281.3 558.2 286 555.9 291.2 553.4 297.3 550.7 304.4 547.5 312.2 544 320.5 540.4 328.8 536.9 336.8 533.6 344.7 530.5 352.7 527.5 360.5 524.6 367.9 522 374.8 519.9 381.1 518.2 387 516.8 392.6 515.8 397.6 515 402.2 514.5 406.4 514.2 410 514.2 413.3 514.3 416 514.6 418.3 514.9 420.1 515.3 421.3 515.7 422.1 516.2 422.6 516.8 422.8 517.3 422.8 517.9 422.6 518.5 422 519.1 420.9 519.6 419.3 520.1 416.9 520.3 413.9 520.3 410.5 520.3 406.6 520.5 402.3 520.9 397.6 521.5 392.6 522.3 387.1 523.2 381.1 524.4 374.8 526 368 528.1 360.5 530.5 352.7 533.2 344.8 536.1 336.9 539 328.9 542 320.6 545.3 312.3 548.5 304.4 551.6 297.3 554.3 291.3 556.5 286 558.2 281.3 559.7 276.6 561.2zM269.7 568.4L275.1 566.8 280.2 565.2 285.4 563.6 291.1 561.9 297.4 559.8 304.6 557.4 312.5 554.6 320.7 551.7 329 548.8 337 546.2 344.7 543.7 352.3 541.3 359.9 538.9 367.4 536.8 374.9 534.8 382.4 533 389.9 531.3 397.3 529.8 404.4 528.5 411.3 527.4 417.8 526.4 424 525.7 430.1 525.1 436 524.6 442 524 440.6 525.6 439.4 527.2 438.1 528.8 436.4 530.5 434.3 532.2 431.6 533.9 428.4 535.6 424.9 537.4 421 539.1 416.8 541 412.1 543 407 545 401.5 547.1 395.8 549.1 389.8 551.1 383.6 553 377 554.8 370.2 556.6 363.2 558.3 356.3 559.9 349.4 561.6 342.5 563.2 335.5 564.8 328.5 566.1 321.5 567.3 314.4 568.1 307 568.8 299.8 569.2 293.1 569.5 287.3 569.7 282.7 569.7 279 569.5 275.9 569.1 272.9 568.7zM502.6 527.1L503.5 526.9 504.7 526.7 506.2 526.4 507.6 526.1 509 525.9 509.5 525.3 509.3 524.3 509.5 523.6 511.1 523.9 515.3 525.8 523.6 530.4 535.1 537 547.4 544.3 558.4 550.8 565.8 555.3 569.2 557.4 570 558.1 569.2 557.9 568 557.5 567.3 557.6 567.2 558.1 567 558.6 566.6 559.2 566.2 559.6 565.9 560 566.2 560.6 567.3 561.5 568 562.1 567.1 561.8 563.6 560.1 556 555.9 544.8 549.6 532.3 542.6 520.6 536.2 512.2 531.9 507.9 530.2 506.3 530.4 506.1 531.5 506.4 532.8 505.9 533.6 504.5 533.8 503 533.9 501.6 534 500.3 534.1 499.5 534.2z" fill="#3f746b" fill-rule="evenodd" stroke="none" opacity=".38"/><path d="M372.5 472.4L371.9 471.7 371.1 471 370.5 470.3 369.9 469.5 369.7 468.7 369.8 467.7 370.2 466.6 370.7 465.5 371.1 464.4 371.3 463.4 371.1 462.5 370.8 461.7 370.3 460.9 369.7 460 369 459.1 368.1 458.1 366.9 457 365.7 455.9 364.4 455 363.3 454.2 362.5 453.7 361.9 453.4 361.3 453.2 360.3 453.1 358.8 453 356.4 452.9 353.4 452.8 350.1 452.7 346.8 452.8 343.9 453.1 341.4 453.6 339 454.4 336.8 455.3 334.6 456.2 332.3 457.1 330 457.9 327.8 458.9 325.5 459.8 323.2 460.5 320.6 461.1 317.7 461.3 314.5 461.4 311.2 461.3 308 461 305 460.7 302.4 460.2 300 459.7 297.7 459 295.4 458.1 292.9 457 290.1 455.8 287.3 454.3 284.3 452.7 281.3 450.9 278 448.8 274.4 446.6 270.4 444 266.4 441.3 262.5 438.6 259 435.9 256 433.3 253.3 430.9 250.9 428.4 248.5 425.7 246.1 422.9 243.6 419.8 241.1 416.4 238.6 412.9 236.3 409.5 234.2 406.4 232.3 403.7 230.5 401 228.8 398.6 227.4 396.4 226.2 394.5 225.4 393.1 225.1 392.2 224.9 391.5 224.5 390.5 223.6 389 221.9 386.7 219.8 384.1 217.3 381.2 214.9 377.9 212.8 374.4 210.9 370.5 209 366 207.2 361.3 205.7 356.9 204.5 353 203.6 349.6 203.1 346.6 202.7 343.9 202.6 341.5 202.7 339.5 203 337.9 203.5 336.8 204.2 336.1 204.9 335.3 205.6 334.5 206.8 335.2 207.9 335.9 209.1 336.6 210.3 337.3 211.6 337.9 213 338.6 214.3 339.3 215.8 339.9 217.3 340.5 219 340.9 220.8 341.1 222.6 341.3 224.6 341.4 226.9 341.3 229.5 341.2 232.7 341 236.4 340.6 240.3 340.1 244.1 339.8 247.7 339.6 250.8 339.6 253.6 339.7 256.5 340 259.5 340.4 263 341 267 341.9 271.4 342.9 276 344.2 280.8 345.6 285.5 347.2 290.4 349.1 295.3 351.2 300.3 353.5 305.3 355.8 310 358.2 314.6 360.6 319.2 363.1 323.6 365.6 327.7 368.2 331.5 370.8 334.9 373.3 337.9 376 340.7 378.6 343.3 381.2 345.6 383.7 347.7 386 349.5 388.2 351.1 390.4 352.5 392.6 353.7 394.9 354.7 397.4 355.4 400.1 356 402.7 356.6 405.4 357.3 408 358.2 410.5 359.2 413 360.2 415.4 361.1 417.8 361.9 419.9 362.6 421.7 363.2 423.3 363.7 424.8 364.2 426.4 364.8 428.3 365.4 430.6 366.1 433.1 366.8 435.9 367.5 438.6 368.3 441.1 369.1 443.7 369.9 446.4 370.7 448.9 371.5 451.2 372.3 452.9 373 454 373.7 454.5 374.4 454.7 375 454.8 375.7 455.1 377.2 455.2 378.8 455.2 380.3 455.3 381.9 455.3 383.4 455.3 390.4 448.7 397.7 441.7 404.7 434.9 410.8 429.1 415.2 425 417.6 423 418.3 422.6 418.1 423.1 417.7 424 417.8 424.5 418.2 424.7 418.7 425.2 419.1 425.7 419.5 426.2 419.8 426.6 420.3 426.6 421.2 426.2 421.8 426 421.4 426.6 419.5 428.7 415.5 432.6 409.8 438.1 403.1 444.4 396.1 451 389.5 457.3M215.1 347.5L216.2 347.6 217.2 347.6 218.3 347.7 219.3 347.8 220.4 347.9 220.7 349.1 220.9 350.1 221.1 351.2 221.7 352.6 223.1 354.5 225.4 357 228.4 360 231.8 363.2 235.4 366.4 239 369.4 242.7 372.2 246.6 374.8 250.6 377.4 254.6 379.8 258.4 382.1 262.1 384.2 265.7 386.1 269.3 387.8 272.8 389.5 276.1 391.1 279.4 392.6 282.5 394.1 285.6 395.4 288.6 396.8 291.6 398.2 289.1 398.8 286.6 399.5 284.1 400.2 281.5 400.8 278.7 401.3 275.9 401.6 272.9 401.9 269.9 402 266.8 402 263.7 401.9 260.7 401.7 257.6 401.5 254.5 401.1 251.4 400.5 248.4 399.6 245.5 398.3 242.5 396.8 239.6 395.1 236.8 393 234.1 390.7 231.4 388 228.8 384.9 226.3 381.6 224 378.2 222.1 375.1 220.5 372.1 219.2 369.2 218.2 366.4 217.3 363.6 216.6 360.9 216.1 358.1 215.7 355.4 215.5 352.8 215.3 350.1zM232.3 350.6L235.2 350.1 238 349.5 240.9 349 244 348.6 247.8 348.5 252.3 348.6 257.3 348.9 262.6 349.3 268 350.1 273.2 351.2 278.3 352.8 283.4 354.7 288.6 356.9 293.4 359.3 297.9 361.6 302.1 363.9 305.9 366.3 309.5 368.8 312.9 371.4 316.2 374 319.1 376.6 321.9 379.4 324.5 382.2 326.9 385.1 329.3 388 331.7 390.9 333.9 393.9 336.1 396.9 338.1 399.8 340 402.7 341.7 405.5 343.3 408.4 344.8 411.1 346 413.7 347.1 416 347.8 417.8 348.2 419.4 348.4 420.8 348.6 422.1 348.9 423.5 348.3 422.5 347.9 421.6 347.4 420.6 346.8 419.5 345.9 418 344.8 416.2 343.6 414.1 342.1 411.8 340.6 409.4 338.9 406.9 337 404.3 335 401.6 332.8 398.7 330.6 395.9 328.2 393.3 325.8 390.8 323.3 388.3 320.7 385.9 318 383.7 315 381.5 312 379.5 308.8 377.6 305.4 375.9 301.9 374.2 298.1 372.6 294 371.2 289.5 369.9 284.9 368.7 280.3 367.6 275.8 366.5 271.5 365.6 267.1 364.7 262.8 364 258.5 363.1 254.4 362.1 250.1 360.7 245.6 359.2 241.4 357.7 237.7 356.1 234.9 354.8 233.3 353.8 232.6 352.9 232.5 352.2 232.5 351.4zM233.7 358.2L237 359.6 240.2 361.1 243.4 362.6 246.8 364 250.6 365.2 254.7 366.1 259.2 366.8 263.8 367.4 268.6 368.2 273.4 369.1 278.3 370.3 283.5 371.7 288.6 373.2 293.6 374.8 298.1 376.5 302.2 378.4 306.1 380.4 309.7 382.5 313.1 384.7 316.3 387.1 319.2 389.6 321.9 392.2 324.4 395 326.9 397.7 329.5 400.4 326.9 399.8 324.5 399.2 322 398.6 319.3 398 316.4 397.5 313.1 397.1 309.6 396.9 305.8 396.7 302.1 396.3 298.3 395.8 294.7 395.1 291 394.3 287.3 393.3 283.6 392.1 279.9 390.8 276.1 389.2 272.3 387.4 268.5 385.4 264.7 383.3 260.9 381.2 257.1 378.8 253.2 376.2 249.4 373.6 245.9 371 242.9 368.6 240.5 366.3 238.6 364.2 236.9 362.2 235.4 360.2zM243.3 401L245.8 401.9 248.1 402.9 250.5 403.9 253.1 404.7 256.1 405.4 259.5 405.8 263.3 406.2 267.3 406.4 271.2 406.4 275 406.2 278.6 405.6 282.1 404.7 285.5 403.6 288.9 402.6 292.2 401.8 295.5 401.2 298.6 400.7 301.8 400.3 304.9 400 308 400 311.2 400.1 314.4 400.3 317.7 400.7 320.7 401.3 323.5 402 326 402.8 328.2 403.8 330.3 404.9 332.2 406.1 334.1 407.5 336 408.9 337.9 410.4 339.6 412 341.1 413.7 342.4 415.4 343.3 417.3 344 419.3 344.5 421.3 344.8 423.3 345 425.2 345 427.1 344.9 428.8 344.6 430.5 344.3 432.2 343.9 433.8 343.6 435.3 343.2 436.7 342.8 438 342.4 439.3 342 440.7 341.3 439.3 340.7 438 340.1 436.6 339.2 435.2 337.9 433.5 336.1 431.6 333.9 429.5 331.4 427.2 328.7 425.1 326.1 423.3 323.5 421.7 320.9 420.3 318.2 419 315.2 418 311.8 417.1 307.7 416.6 303 416.2 298.1 416.1 293.3 416 288.7 416 284.5 416.1 280.4 416.4 276.4 416.7 272.6 416.8 268.9 416.7 265.2 416.3 261.6 415.7 258.3 414.9 255.1 413.9 252.3 412.5 250.1 410.7 248.2 408.4 246.6 406 245 403.4zM242.1 406.6L242.6 407.3 242.9 407.9 243.3 408.6 244.2 409.4 245.9 410.5 248.7 412 252.2 414 256.3 416.1 260.7 418 265.1 419.3 269.8 420 274.8 420.4 280 420.4 285.1 420.4 290 420.5 294.7 420.5 299.4 420.3 303.9 420.2 308.1 420.2 311.8 420.6 315 421.5 317.8 422.6 320.3 423.9 322.6 425.4 324.9 427 327.4 428.8 329.8 430.8 332 432.9 334 434.9 335.6 436.7 336.8 438.1 337.7 439.4 338.3 440.5 338.6 441.6 338.7 442.7 338.6 443.9 338.2 445.1 337.7 446.3 336.8 447.4 335.7 448.5 334.3 449.6 332.6 450.8 330.6 451.8 328.5 452.8 326.4 453.6 324.2 454.4 321.9 455 319.4 455.5 317 455.9 314.6 456 312.3 456 310.1 455.8 307.8 455.5 305.4 454.9 302.5 454 299.3 452.8 295.7 451.4 291.9 449.7 288 447.8 284.1 445.7 280.1 443.4 275.9 440.9 271.6 438.2 267.6 435.5 264 432.7 260.9 429.9 258.2 427.1 255.7 424.2 253.4 421.3 251.1 418.6 249.1 416.1 247.3 413.7 245.5 411.3 243.9 409zM355.1 422L355.9 423.6 356.8 425.3 357.6 426.9 358.4 428.6 359.1 430.1 359.9 431.7 360.7 433.3 361.4 434.8 361.9 436.3 362 437.7 361.8 439.1 361.3 440.4 360.6 441.7 359.7 442.9 358.7 444 357.6 444.9 356.3 445.7 354.9 446.3 353.4 446.9 351.9 447.5 350.2 447.9 348.5 448.2 346.6 448.5 344.8 448.8 342.9 449.1 343.4 448.2 343.9 447.4 344.4 446.5 344.9 445.6 345.5 444.6 346.3 443.5 347.1 442.3 347.9 441 348.7 439.7 349.5 438.3 350.2 436.7 350.9 435.1 351.6 433.3 352.3 431.6 352.9 429.9 353.4 428.3 353.8 426.7 354.2 425.1 354.6 423.5zM474 496.8L474.3 496.2 474.8 495.7 475.3 495.1 475.3 494.2 474.6 492.8 473.1 490.9 470.9 488.4 468.3 485.6 465.4 482.6 462.5 479.4 459.5 476.1 456.2 472.5 452.8 468.7 449.3 464.6 446.1 460.3 443.1 455.4 440.1 450.2 437.1 444.7 434.5 439.2 432.1 434 429.9 428.1 427.7 421.4 425.9 415.3 424.9 411.1 425 410.5 426.9 415.2 430.5 424.5 434.6 435.1 438 444.4 439.7 449.3 439.4 449 437.6 445.6 435.1 440.3 432.4 434.1 430.2 428.5 428.5 423.3 426.9 417.7 425.4 411.7 423.9 405.6 422.6 399.4 421.5 393 420.5 386.3 419.6 379.5 418.8 372.7 418.1 366.1 417.5 359.7 416.9 353.3 416.4 347 416.1 340.8 415.8 334.9 415.5 328.9 415.4 322.8 415.3 317 415.4 311.9 415.5 307.9 415.8 305.4 416.1 304 416.5 303.3 417.1 302.9 417.6 302.4 418.3 301.8 419 301.4 419.8 301.2 420.6 301.1 421.4 301.2 422 301.2 422.5 301 423 301.2 423.9 302 425.5 303.9 427.9 307.2 430.9 311.6 434.3 316.6 437.7 322 440.9 327.2 443.9 332.5 446.9 338.1 449.9 343.8 452.7 349.5 455.5 355.1 458.1 360.5 460.8 365.9 463.3 371.3 465.6 376.7 467.8 382.2 469.7 387.8 471.6 393.5 473.2 399.2 474.7 404.9 475.9 410.7 476.9 416.9 477.7 423.3 478.4 429.7 478.8 435.6 479.1 440.7 479.2 444.8 479.2 448.1 478.9 451 478.6 453.7 478.2 456.5 477.6 459.5 476.8 462.3 475.9 465 475.1 467.7 474.7 470.3 474.7 473 475 475.7 475.5 478.3 476 480.5 476.4 482.3 476.7 483.2 477 483.4 477.3 483.4 477.8 483.8 478.5 485 479.6 487.2 480.9 490.1 482.3 493.5 483.8 496.9 485.2 500.2 484.1 501.6 483 503.1 482 504.6 480.9 506.1 480 507.4 479.1 508.6 478.2 509.6 477.4 510.6 476.7 511.6 476.1 512.7 475.5 513.8 475.1 515 474.7 516.2 474.4 517.2 474.1 518M424.5 316.2L427.4 320.3 430.3 324.3 433.1 328.3 436 332.6 438.9 337.2 441.9 342.3 444.9 347.8 447.9 353.5 450.8 359.3 453.5 365 456.1 370.8 458.6 376.7 460.9 382.6 463 388.4 464.8 394 466.3 399.5 467.6 404.8 468.6 410 469.4 415.2 470 420.4 470.5 425.8 470.7 431.5 470.8 437 470.8 442.1 470.8 446.3 470.8 449.6 470.8 452.1 470.6 454.1 470.5 456.1 470.3 458.3 470 460.8 469.6 463.4 469.2 466 468.8 468.6 468.4 471.2 467.2 468.7 466 466.4 464.9 464 463.6 461.3 462.3 458 460.8 454.3 459.2 450.1 457.5 445.5 455.8 440.7 454 435.7 452.2 430.4 450.3 424.9 448.4 419.2 446.5 413.1 444.6 406.9 442.7 400.2 440.7 393.1 438.7 385.9 436.8 378.6 435 371.6 433.3 364.6 431.6 357.5 430 350.6 428.6 344.1 427.4 338.1 426.5 333 425.9 328.5 425.5 324.4 425 320.4zM422.5 333.5L422.3 337 422.1 340.4 421.9 343.8 421.8 347.6 421.8 352 422.1 357.2 422.6 362.9 423.1 369.1 423.8 375.2 424.6 381 425.5 386.6 426.5 392.2 427.6 397.6 428.8 402.9 430.1 408 431.4 413 432.9 417.8 434.4 422.4 436 426.8 437.5 430.9 439.2 434.8 441.1 438.5 442.9 441.9 444.5 444.9 445.9 447.4 447 449.4 447.8 451 448.5 452.1 449.1 453 449.7 453.6 450.3 454 450.8 454.1 451.3 453.9 451.8 453.6 452.1 453.3 452.4 453 452.6 452.7 452.8 452.3 452.8 451.7 452.5 450.7 451.9 449.5 451.2 448 450.2 446.3 449.1 444.1 447.9 441.5 446.6 438.1 445.2 434.2 443.7 430 442.1 425.4 440.6 420.9 439.1 416.2 437.5 411.4 436 406.4 434.5 401.3 433.1 396 431.9 390.3 430.7 384.2 429.6 378.1 428.6 372.3 427.6 366.9 426.8 362.1 426.1 357.6 425.4 353.4 424.9 349.6 424.3 346 423.9 343 423.5 340.4 423.2 338.1 422.9 335.9zM465.7 518.9L462.9 518.5 460 518.1 457.1 517.7 454.2 517.3 451.4 516.8 448.6 516.2 446 515.6 443.3 514.9 440.6 514.2 437.6 513.5 434.3 512.7 430.9 511.7 427.3 510.8 423.7 509.9 420.1 509.3 416.7 508.8 413.4 508.4 410 508.2 406.4 508.2 402.2 508.4 397.5 508.9 392.4 509.5 386.9 510.3 381 511.4 374.7 512.8 367.8 514.6 360.4 516.8 352.6 519.2 344.6 521.8 336.7 524.6 328.8 527.7 320.6 531.1 312.5 534.6 304.6 538.1 297.2 541.5 290.2 544.8 283.4 548 277 551.2 271.3 554.2 266.4 557 262.4 559.6 259.3 561.9 256.9 564.1 255 566 253.4 567.7 252.3 568.9 251.7 569.7 251.5 570.4 251.6 570.9 251.7 571.5 252 572.1 252.6 572.7 253.3 573.3 254.1 573.8 255 574.2 255.5 574.4 255.9 574.5 256.4 574.5 257.8 574.5 260.3 574.5 264.2 574.6 269.2 574.6 275 574.6 281.1 574.5 287.3 574.3 293.7 574.1 300.5 573.9 307.5 573.6 314.6 573 321.6 572.2 328.5 570.8 335.5 569.2 342.5 567.3 349.5 565.4 356.4 563.5 363.3 561.6 370.2 559.6 377 557.6 383.6 555.6 389.9 553.7 395.8 551.8 401.6 549.9 407.2 548.1 412.2 546.2 416.8 544.4 420.7 542.6 424.1 540.8 427.2 539 429.9 537.2 432.6 535.6 435 534 437.2 532.5 439.1 531.1 441 529.8 442.9 528.7 444.6 527.7 446.1 527 447.6 526.3 449.3 525.8 451.4 525.2 454.1 524.7 457.1 524.2 460.4 523.7 463.6 523.3 466.6 523.1 469.6 522.9 472.7 522.9 475.6 522.9 478.1 522.9 479.9 522.9M271.7 562.8L276.6 560.4 281.3 558.2 286 555.9 291.2 553.4 297.3 550.7 304.4 547.5 312.2 544 320.5 540.4 328.8 536.9 336.8 533.6 344.7 530.5 352.7 527.5 360.5 524.6 367.9 522 374.8 519.9 381.1 518.2 387 516.8 392.6 515.8 397.6 515 402.2 514.5 406.4 514.2 410 514.2 413.3 514.3 416 514.6 418.3 514.9 420.1 515.3 421.3 515.7 422.1 516.2 422.6 516.8 422.8 517.3 422.8 517.9 422.6 518.5 422 519.1 420.9 519.6 419.3 520.1 416.9 520.3 413.9 520.3 410.5 520.3 406.6 520.5 402.3 520.9 397.6 521.5 392.6 522.3 387.1 523.2 381.1 524.4 374.8 526 368 528.1 360.5 530.5 352.7 533.2 344.8 536.1 336.9 539 328.9 542 320.6 545.3 312.3 548.5 304.4 551.6 297.3 554.3 291.3 556.5 286 558.2 281.3 559.7 276.6 561.2zM269.7 568.4L275.1 566.8 280.2 565.2 285.4 563.6 291.1 561.9 297.4 559.8 304.6 557.4 312.5 554.6 320.7 551.7 329 548.8 337 546.2 344.7 543.7 352.3 541.3 359.9 538.9 367.4 536.8 374.9 534.8 382.4 533 389.9 531.3 397.3 529.8 404.4 528.5 411.3 527.4 417.8 526.4 424 525.7 430.1 525.1 436 524.6 442 524 440.6 525.6 439.4 527.2 438.1 528.8 436.4 530.5 434.3 532.2 431.6 533.9 428.4 535.6 424.9 537.4 421 539.1 416.8 541 412.1 543 407 545 401.5 547.1 395.8 549.1 389.8 551.1 383.6 553 377 554.8 370.2 556.6 363.2 558.3 356.3 559.9 349.4 561.6 342.5 563.2 335.5 564.8 328.5 566.1 321.5 567.3 314.4 568.1 307 568.8 299.8 569.2 293.1 569.5 287.3 569.7 282.7 569.7 279 569.5 275.9 569.1 272.9 568.7zM502.6 527.1L503.5 526.9 504.7 526.7 506.2 526.4 507.6 526.1 509 525.9 509.5 525.3 509.3 524.3 509.5 523.6 511.1 523.9 515.3 525.8 523.6 530.4 535.1 537 547.4 544.3 558.4 550.8 565.8 555.3 569.2 557.4 570 558.1 569.2 557.9 568 557.5 567.3 557.6 567.2 558.1 567 558.6 566.6 559.2 566.2 559.6 565.9 560 566.2 560.6 567.3 561.5 568 562.1 567.1 561.8 563.6 560.1 556 555.9 544.8 549.6 532.3 542.6 520.6 536.2 512.2 531.9 507.9 530.2 506.3 530.4 506.1 531.5 506.4 532.8 505.9 533.6 504.5 533.8 503 533.9 501.6 534 500.3 534.1 499.5 534.2" stroke="#2b5a52" stroke-width="2" transform="translate(-.9 -.8)"/><path d="M372.5 472.4L371.9 471.7 371.1 471 370.5 470.3 369.9 469.5 369.7 468.7 369.8 467.7 370.2 466.6 370.7 465.5 371.1 464.4 371.3 463.4 371.1 462.5 370.8 461.7 370.3 460.9 369.7 460 369 459.1 368.1 458.1 366.9 457 365.7 455.9 364.4 455 363.3 454.2 362.5 453.7 361.9 453.4 361.3 453.2 360.3 453.1 358.8 453 356.4 452.9 353.4 452.8 350.1 452.7 346.8 452.8 343.9 453.1 341.4 453.6 339 454.4 336.8 455.3 334.6 456.2 332.3 457.1 330 457.9 327.8 458.9 325.5 459.8 323.2 460.5 320.6 461.1 317.7 461.3 314.5 461.4 311.2 461.3 308 461 305 460.7 302.4 460.2 300 459.7 297.7 459 295.4 458.1 292.9 457 290.1 455.8 287.3 454.3 284.3 452.7 281.3 450.9 278 448.8 274.4 446.6 270.4 444 266.4 441.3 262.5 438.6 259 435.9 256 433.3 253.3 430.9 250.9 428.4 248.5 425.7 246.1 422.9 243.6 419.8 241.1 416.4 238.6 412.9 236.3 409.5 234.2 406.4 232.3 403.7 230.5 401 228.8 398.6 227.4 396.4 226.2 394.5 225.4 393.1 225.1 392.2 224.9 391.5 224.5 390.5 223.6 389 221.9 386.7 219.8 384.1 217.3 381.2 214.9 377.9 212.8 374.4 210.9 370.5 209 366 207.2 361.3 205.7 356.9 204.5 353 203.6 349.6 203.1 346.6 202.7 343.9 202.6 341.5 202.7 339.5 203 337.9 203.5 336.8 204.2 336.1 204.9 335.3 205.6 334.5 206.8 335.2 207.9 335.9 209.1 336.6 210.3 337.3 211.6 337.9 213 338.6 214.3 339.3 215.8 339.9 217.3 340.5 219 340.9 220.8 341.1 222.6 341.3 224.6 341.4 226.9 341.3 229.5 341.2 232.7 341 236.4 340.6 240.3 340.1 244.1 339.8 247.7 339.6 250.8 339.6 253.6 339.7 256.5 340 259.5 340.4 263 341 267 341.9 271.4 342.9 276 344.2 280.8 345.6 285.5 347.2 290.4 349.1 295.3 351.2 300.3 353.5 305.3 355.8 310 358.2 314.6 360.6 319.2 363.1 323.6 365.6 327.7 368.2 331.5 370.8 334.9 373.3 337.9 376 340.7 378.6 343.3 381.2 345.6 383.7 347.7 386 349.5 388.2 351.1 390.4 352.5 392.6 353.7 394.9 354.7 397.4 355.4 400.1 356 402.7 356.6 405.4 357.3 408 358.2 410.5 359.2 413 360.2 415.4 361.1 417.8 361.9 419.9 362.6 421.7 363.2 423.3 363.7 424.8 364.2 426.4 364.8 428.3 365.4 430.6 366.1 433.1 366.8 435.9 367.5 438.6 368.3 441.1 369.1 443.7 369.9 446.4 370.7 448.9 371.5 451.2 372.3 452.9 373 454 373.7 454.5 374.4 454.7 375 454.8 375.7 455.1 377.2 455.2 378.8 455.2 380.3 455.3 381.9 455.3 383.4 455.3 390.4 448.7 397.7 441.7 404.7 434.9 410.8 429.1 415.2 425 417.6 423 418.3 422.6 418.1 423.1 417.7 424 417.8 424.5 418.2 424.7 418.7 425.2 419.1 425.7 419.5 426.2 419.8 426.6 420.3 426.6 421.2 426.2 421.8 426 421.4 426.6 419.5 428.7 415.5 432.6 409.8 438.1 403.1 444.4 396.1 451 389.5 457.3M215.1 347.5L216.2 347.6 217.2 347.6 218.3 347.7 219.3 347.8 220.4 347.9 220.7 349.1 220.9 350.1 221.1 351.2 221.7 352.6 223.1 354.5 225.4 357 228.4 360 231.8 363.2 235.4 366.4 239 369.4 242.7 372.2 246.6 374.8 250.6 377.4 254.6 379.8 258.4 382.1 262.1 384.2 265.7 386.1 269.3 387.8 272.8 389.5 276.1 391.1 279.4 392.6 282.5 394.1 285.6 395.4 288.6 396.8 291.6 398.2 289.1 398.8 286.6 399.5 284.1 400.2 281.5 400.8 278.7 401.3 275.9 401.6 272.9 401.9 269.9 402 266.8 402 263.7 401.9 260.7 401.7 257.6 401.5 254.5 401.1 251.4 400.5 248.4 399.6 245.5 398.3 242.5 396.8 239.6 395.1 236.8 393 234.1 390.7 231.4 388 228.8 384.9 226.3 381.6 224 378.2 222.1 375.1 220.5 372.1 219.2 369.2 218.2 366.4 217.3 363.6 216.6 360.9 216.1 358.1 215.7 355.4 215.5 352.8 215.3 350.1zM232.3 350.6L235.2 350.1 238 349.5 240.9 349 244 348.6 247.8 348.5 252.3 348.6 257.3 348.9 262.6 349.3 268 350.1 273.2 351.2 278.3 352.8 283.4 354.7 288.6 356.9 293.4 359.3 297.9 361.6 302.1 363.9 305.9 366.3 309.5 368.8 312.9 371.4 316.2 374 319.1 376.6 321.9 379.4 324.5 382.2 326.9 385.1 329.3 388 331.7 390.9 333.9 393.9 336.1 396.9 338.1 399.8 340 402.7 341.7 405.5 343.3 408.4 344.8 411.1 346 413.7 347.1 416 347.8 417.8 348.2 419.4 348.4 420.8 348.6 422.1 348.9 423.5 348.3 422.5 347.9 421.6 347.4 420.6 346.8 419.5 345.9 418 344.8 416.2 343.6 414.1 342.1 411.8 340.6 409.4 338.9 406.9 337 404.3 335 401.6 332.8 398.7 330.6 395.9 328.2 393.3 325.8 390.8 323.3 388.3 320.7 385.9 318 383.7 315 381.5 312 379.5 308.8 377.6 305.4 375.9 301.9 374.2 298.1 372.6 294 371.2 289.5 369.9 284.9 368.7 280.3 367.6 275.8 366.5 271.5 365.6 267.1 364.7 262.8 364 258.5 363.1 254.4 362.1 250.1 360.7 245.6 359.2 241.4 357.7 237.7 356.1 234.9 354.8 233.3 353.8 232.6 352.9 232.5 352.2 232.5 351.4zM233.7 358.2L237 359.6 240.2 361.1 243.4 362.6 246.8 364 250.6 365.2 254.7 366.1 259.2 366.8 263.8 367.4 268.6 368.2 273.4 369.1 278.3 370.3 283.5 371.7 288.6 373.2 293.6 374.8 298.1 376.5 302.2 378.4 306.1 380.4 309.7 382.5 313.1 384.7 316.3 387.1 319.2 389.6 321.9 392.2 324.4 395 326.9 397.7 329.5 400.4 326.9 399.8 324.5 399.2 322 398.6 319.3 398 316.4 397.5 313.1 397.1 309.6 396.9 305.8 396.7 302.1 396.3 298.3 395.8 294.7 395.1 291 394.3 287.3 393.3 283.6 392.1 279.9 390.8 276.1 389.2 272.3 387.4 268.5 385.4 264.7 383.3 260.9 381.2 257.1 378.8 253.2 376.2 249.4 373.6 245.9 371 242.9 368.6 240.5 366.3 238.6 364.2 236.9 362.2 235.4 360.2zM243.3 401L245.8 401.9 248.1 402.9 250.5 403.9 253.1 404.7 256.1 405.4 259.5 405.8 263.3 406.2 267.3 406.4 271.2 406.4 275 406.2 278.6 405.6 282.1 404.7 285.5 403.6 288.9 402.6 292.2 401.8 295.5 401.2 298.6 400.7 301.8 400.3 304.9 400 308 400 311.2 400.1 314.4 400.3 317.7 400.7 320.7 401.3 323.5 402 326 402.8 328.2 403.8 330.3 404.9 332.2 406.1 334.1 407.5 336 408.9 337.9 410.4 339.6 412 341.1 413.7 342.4 415.4 343.3 417.3 344 419.3 344.5 421.3 344.8 423.3 345 425.2 345 427.1 344.9 428.8 344.6 430.5 344.3 432.2 343.9 433.8 343.6 435.3 343.2 436.7 342.8 438 342.4 439.3 342 440.7 341.3 439.3 340.7 438 340.1 436.6 339.2 435.2 337.9 433.5 336.1 431.6 333.9 429.5 331.4 427.2 328.7 425.1 326.1 423.3 323.5 421.7 320.9 420.3 318.2 419 315.2 418 311.8 417.1 307.7 416.6 303 416.2 298.1 416.1 293.3 416 288.7 416 284.5 416.1 280.4 416.4 276.4 416.7 272.6 416.8 268.9 416.7 265.2 416.3 261.6 415.7 258.3 414.9 255.1 413.9 252.3 412.5 250.1 410.7 248.2 408.4 246.6 406 245 403.4zM242.1 406.6L242.6 407.3 242.9 407.9 243.3 408.6 244.2 409.4 245.9 410.5 248.7 412 252.2 414 256.3 416.1 260.7 418 265.1 419.3 269.8 420 274.8 420.4 280 420.4 285.1 420.4 290 420.5 294.7 420.5 299.4 420.3 303.9 420.2 308.1 420.2 311.8 420.6 315 421.5 317.8 422.6 320.3 423.9 322.6 425.4 324.9 427 327.4 428.8 329.8 430.8 332 432.9 334 434.9 335.6 436.7 336.8 438.1 337.7 439.4 338.3 440.5 338.6 441.6 338.7 442.7 338.6 443.9 338.2 445.1 337.7 446.3 336.8 447.4 335.7 448.5 334.3 449.6 332.6 450.8 330.6 451.8 328.5 452.8 326.4 453.6 324.2 454.4 321.9 455 319.4 455.5 317 455.9 314.6 456 312.3 456 310.1 455.8 307.8 455.5 305.4 454.9 302.5 454 299.3 452.8 295.7 451.4 291.9 449.7 288 447.8 284.1 445.7 280.1 443.4 275.9 440.9 271.6 438.2 267.6 435.5 264 432.7 260.9 429.9 258.2 427.1 255.7 424.2 253.4 421.3 251.1 418.6 249.1 416.1 247.3 413.7 245.5 411.3 243.9 409zM355.1 422L355.9 423.6 356.8 425.3 357.6 426.9 358.4 428.6 359.1 430.1 359.9 431.7 360.7 433.3 361.4 434.8 361.9 436.3 362 437.7 361.8 439.1 361.3 440.4 360.6 441.7 359.7 442.9 358.7 444 357.6 444.9 356.3 445.7 354.9 446.3 353.4 446.9 351.9 447.5 350.2 447.9 348.5 448.2 346.6 448.5 344.8 448.8 342.9 449.1 343.4 448.2 343.9 447.4 344.4 446.5 344.9 445.6 345.5 444.6 346.3 443.5 347.1 442.3 347.9 441 348.7 439.7 349.5 438.3 350.2 436.7 350.9 435.1 351.6 433.3 352.3 431.6 352.9 429.9 353.4 428.3 353.8 426.7 354.2 425.1 354.6 423.5zM474 496.8L474.3 496.2 474.8 495.7 475.3 495.1 475.3 494.2 474.6 492.8 473.1 490.9 470.9 488.4 468.3 485.6 465.4 482.6 462.5 479.4 459.5 476.1 456.2 472.5 452.8 468.7 449.3 464.6 446.1 460.3 443.1 455.4 440.1 450.2 437.1 444.7 434.5 439.2 432.1 434 429.9 428.1 427.7 421.4 425.9 415.3 424.9 411.1 425 410.5 426.9 415.2 430.5 424.5 434.6 435.1 438 444.4 439.7 449.3 439.4 449 437.6 445.6 435.1 440.3 432.4 434.1 430.2 428.5 428.5 423.3 426.9 417.7 425.4 411.7 423.9 405.6 422.6 399.4 421.5 393 420.5 386.3 419.6 379.5 418.8 372.7 418.1 366.1 417.5 359.7 416.9 353.3 416.4 347 416.1 340.8 415.8 334.9 415.5 328.9 415.4 322.8 415.3 317 415.4 311.9 415.5 307.9 415.8 305.4 416.1 304 416.5 303.3 417.1 302.9 417.6 302.4 418.3 301.8 419 301.4 419.8 301.2 420.6 301.1 421.4 301.2 422 301.2 422.5 301 423 301.2 423.9 302 425.5 303.9 427.9 307.2 430.9 311.6 434.3 316.6 437.7 322 440.9 327.2 443.9 332.5 446.9 338.1 449.9 343.8 452.7 349.5 455.5 355.1 458.1 360.5 460.8 365.9 463.3 371.3 465.6 376.7 467.8 382.2 469.7 387.8 471.6 393.5 473.2 399.2 474.7 404.9 475.9 410.7 476.9 416.9 477.7 423.3 478.4 429.7 478.8 435.6 479.1 440.7 479.2 444.8 479.2 448.1 478.9 451 478.6 453.7 478.2 456.5 477.6 459.5 476.8 462.3 475.9 465 475.1 467.7 474.7 470.3 474.7 473 475 475.7 475.5 478.3 476 480.5 476.4 482.3 476.7 483.2 477 483.4 477.3 483.4 477.8 483.8 478.5 485 479.6 487.2 480.9 490.1 482.3 493.5 483.8 496.9 485.2 500.2 484.1 501.6 483 503.1 482 504.6 480.9 506.1 480 507.4 479.1 508.6 478.2 509.6 477.4 510.6 476.7 511.6 476.1 512.7 475.5 513.8 475.1 515 474.7 516.2 474.4 517.2 474.1 518M424.5 316.2L427.4 320.3 430.3 324.3 433.1 328.3 436 332.6 438.9 337.2 441.9 342.3 444.9 347.8 447.9 353.5 450.8 359.3 453.5 365 456.1 370.8 458.6 376.7 460.9 382.6 463 388.4 464.8 394 466.3 399.5 467.6 404.8 468.6 410 469.4 415.2 470 420.4 470.5 425.8 470.7 431.5 470.8 437 470.8 442.1 470.8 446.3 470.8 449.6 470.8 452.1 470.6 454.1 470.5 456.1 470.3 458.3 470 460.8 469.6 463.4 469.2 466 468.8 468.6 468.4 471.2 467.2 468.7 466 466.4 464.9 464 463.6 461.3 462.3 458 460.8 454.3 459.2 450.1 457.5 445.5 455.8 440.7 454 435.7 452.2 430.4 450.3 424.9 448.4 419.2 446.5 413.1 444.6 406.9 442.7 400.2 440.7 393.1 438.7 385.9 436.8 378.6 435 371.6 433.3 364.6 431.6 357.5 430 350.6 428.6 344.1 427.4 338.1 426.5 333 425.9 328.5 425.5 324.4 425 320.4zM422.5 333.5L422.3 337 422.1 340.4 421.9 343.8 421.8 347.6 421.8 352 422.1 357.2 422.6 362.9 423.1 369.1 423.8 375.2 424.6 381 425.5 386.6 426.5 392.2 427.6 397.6 428.8 402.9 430.1 408 431.4 413 432.9 417.8 434.4 422.4 436 426.8 437.5 430.9 439.2 434.8 441.1 438.5 442.9 441.9 444.5 444.9 445.9 447.4 447 449.4 447.8 451 448.5 452.1 449.1 453 449.7 453.6 450.3 454 450.8 454.1 451.3 453.9 451.8 453.6 452.1 453.3 452.4 453 452.6 452.7 452.8 452.3 452.8 451.7 452.5 450.7 451.9 449.5 451.2 448 450.2 446.3 449.1 444.1 447.9 441.5 446.6 438.1 445.2 434.2 443.7 430 442.1 425.4 440.6 420.9 439.1 416.2 437.5 411.4 436 406.4 434.5 401.3 433.1 396 431.9 390.3 430.7 384.2 429.6 378.1 428.6 372.3 427.6 366.9 426.8 362.1 426.1 357.6 425.4 353.4 424.9 349.6 424.3 346 423.9 343 423.5 340.4 423.2 338.1 422.9 335.9zM465.7 518.9L462.9 518.5 460 518.1 457.1 517.7 454.2 517.3 451.4 516.8 448.6 516.2 446 515.6 443.3 514.9 440.6 514.2 437.6 513.5 434.3 512.7 430.9 511.7 427.3 510.8 423.7 509.9 420.1 509.3 416.7 508.8 413.4 508.4 410 508.2 406.4 508.2 402.2 508.4 397.5 508.9 392.4 509.5 386.9 510.3 381 511.4 374.7 512.8 367.8 514.6 360.4 516.8 352.6 519.2 344.6 521.8 336.7 524.6 328.8 527.7 320.6 531.1 312.5 534.6 304.6 538.1 297.2 541.5 290.2 544.8 283.4 548 277 551.2 271.3 554.2 266.4 557 262.4 559.6 259.3 561.9 256.9 564.1 255 566 253.4 567.7 252.3 568.9 251.7 569.7 251.5 570.4 251.6 570.9 251.7 571.5 252 572.1 252.6 572.7 253.3 573.3 254.1 573.8 255 574.2 255.5 574.4 255.9 574.5 256.4 574.5 257.8 574.5 260.3 574.5 264.2 574.6 269.2 574.6 275 574.6 281.1 574.5 287.3 574.3 293.7 574.1 300.5 573.9 307.5 573.6 314.6 573 321.6 572.2 328.5 570.8 335.5 569.2 342.5 567.3 349.5 565.4 356.4 563.5 363.3 561.6 370.2 559.6 377 557.6 383.6 555.6 389.9 553.7 395.8 551.8 401.6 549.9 407.2 548.1 412.2 546.2 416.8 544.4 420.7 542.6 424.1 540.8 427.2 539 429.9 537.2 432.6 535.6 435 534 437.2 532.5 439.1 531.1 441 529.8 442.9 528.7 444.6 527.7 446.1 527 447.6 526.3 449.3 525.8 451.4 525.2 454.1 524.7 457.1 524.2 460.4 523.7 463.6 523.3 466.6 523.1 469.6 522.9 472.7 522.9 475.6 522.9 478.1 522.9 479.9 522.9M271.7 562.8L276.6 560.4 281.3 558.2 286 555.9 291.2 553.4 297.3 550.7 304.4 547.5 312.2 544 320.5 540.4 328.8 536.9 336.8 533.6 344.7 530.5 352.7 527.5 360.5 524.6 367.9 522 374.8 519.9 381.1 518.2 387 516.8 392.6 515.8 397.6 515 402.2 514.5 406.4 514.2 410 514.2 413.3 514.3 416 514.6 418.3 514.9 420.1 515.3 421.3 515.7 422.1 516.2 422.6 516.8 422.8 517.3 422.8 517.9 422.6 518.5 422 519.1 420.9 519.6 419.3 520.1 416.9 520.3 413.9 520.3 410.5 520.3 406.6 520.5 402.3 520.9 397.6 521.5 392.6 522.3 387.1 523.2 381.1 524.4 374.8 526 368 528.1 360.5 530.5 352.7 533.2 344.8 536.1 336.9 539 328.9 542 320.6 545.3 312.3 548.5 304.4 551.6 297.3 554.3 291.3 556.5 286 558.2 281.3 559.7 276.6 561.2zM269.7 568.4L275.1 566.8 280.2 565.2 285.4 563.6 291.1 561.9 297.4 559.8 304.6 557.4 312.5 554.6 320.7 551.7 329 548.8 337 546.2 344.7 543.7 352.3 541.3 359.9 538.9 367.4 536.8 374.9 534.8 382.4 533 389.9 531.3 397.3 529.8 404.4 528.5 411.3 527.4 417.8 526.4 424 525.7 430.1 525.1 436 524.6 442 524 440.6 525.6 439.4 527.2 438.1 528.8 436.4 530.5 434.3 532.2 431.6 533.9 428.4 535.6 424.9 537.4 421 539.1 416.8 541 412.1 543 407 545 401.5 547.1 395.8 549.1 389.8 551.1 383.6 553 377 554.8 370.2 556.6 363.2 558.3 356.3 559.9 349.4 561.6 342.5 563.2 335.5 564.8 328.5 566.1 321.5 567.3 314.4 568.1 307 568.8 299.8 569.2 293.1 569.5 287.3 569.7 282.7 569.7 279 569.5 275.9 569.1 272.9 568.7zM502.6 527.1L503.5 526.9 504.7 526.7 506.2 526.4 507.6 526.1 509 525.9 509.5 525.3 509.3 524.3 509.5 523.6 511.1 523.9 515.3 525.8 523.6 530.4 535.1 537 547.4 544.3 558.4 550.8 565.8 555.3 569.2 557.4 570 558.1 569.2 557.9 568 557.5 567.3 557.6 567.2 558.1 567 558.6 566.6 559.2 566.2 559.6 565.9 560 566.2 560.6 567.3 561.5 568 562.1 567.1 561.8 563.6 560.1 556 555.9 544.8 549.6 532.3 542.6 520.6 536.2 512.2 531.9 507.9 530.2 506.3 530.4 506.1 531.5 506.4 532.8 505.9 533.6 504.5 533.8 503 533.9 501.6 534 500.3 534.1 499.5 534.2" stroke="#9adccb" stroke-width="1.800" transform="translate(1 .8)"/><path d="M372.5 472.4L371.9 471.7 371.1 471 370.5 470.3 369.9 469.5 369.7 468.7 369.8 467.7 370.2 466.6 370.7 465.5 371.1 464.4 371.3 463.4 371.1 462.5 370.8 461.7 370.3 460.9 369.7 460 369 459.1 368.1 458.1 366.9 457 365.7 455.9 364.4 455 363.3 454.2 362.5 453.7 361.9 453.4 361.3 453.2 360.3 453.1 358.8 453 356.4 452.9 353.4 452.8 350.1 452.7 346.8 452.8 343.9 453.1 341.4 453.6 339 454.4 336.8 455.3 334.6 456.2 332.3 457.1 330 457.9 327.8 458.9 325.5 459.8 323.2 460.5 320.6 461.1 317.7 461.3 314.5 461.4 311.2 461.3 308 461 305 460.7 302.4 460.2 300 459.7 297.7 459 295.4 458.1 292.9 457 290.1 455.8 287.3 454.3 284.3 452.7 281.3 450.9 278 448.8 274.4 446.6 270.4 444 266.4 441.3 262.5 438.6 259 435.9 256 433.3 253.3 430.9 250.9 428.4 248.5 425.7 246.1 422.9 243.6 419.8 241.1 416.4 238.6 412.9 236.3 409.5 234.2 406.4 232.3 403.7 230.5 401 228.8 398.6 227.4 396.4 226.2 394.5 225.4 393.1 225.1 392.2 224.9 391.5 224.5 390.5 223.6 389 221.9 386.7 219.8 384.1 217.3 381.2 214.9 377.9 212.8 374.4 210.9 370.5 209 366 207.2 361.3 205.7 356.9 204.5 353 203.6 349.6 203.1 346.6 202.7 343.9 202.6 341.5 202.7 339.5 203 337.9 203.5 336.8 204.2 336.1 204.9 335.3 205.6 334.5 206.8 335.2 207.9 335.9 209.1 336.6 210.3 337.3 211.6 337.9 213 338.6 214.3 339.3 215.8 339.9 217.3 340.5 219 340.9 220.8 341.1 222.6 341.3 224.6 341.4 226.9 341.3 229.5 341.2 232.7 341 236.4 340.6 240.3 340.1 244.1 339.8 247.7 339.6 250.8 339.6 253.6 339.7 256.5 340 259.5 340.4 263 341 267 341.9 271.4 342.9 276 344.2 280.8 345.6 285.5 347.2 290.4 349.1 295.3 351.2 300.3 353.5 305.3 355.8 310 358.2 314.6 360.6 319.2 363.1 323.6 365.6 327.7 368.2 331.5 370.8 334.9 373.3 337.9 376 340.7 378.6 343.3 381.2 345.6 383.7 347.7 386 349.5 388.2 351.1 390.4 352.5 392.6 353.7 394.9 354.7 397.4 355.4 400.1 356 402.7 356.6 405.4 357.3 408 358.2 410.5 359.2 413 360.2 415.4 361.1 417.8 361.9 419.9 362.6 421.7 363.2 423.3 363.7 424.8 364.2 426.4 364.8 428.3 365.4 430.6 366.1 433.1 366.8 435.9 367.5 438.6 368.3 441.1 369.1 443.7 369.9 446.4 370.7 448.9 371.5 451.2 372.3 452.9 373 454 373.7 454.5 374.4 454.7 375 454.8 375.7 455.1 377.2 455.2 378.8 455.2 380.3 455.3 381.9 455.3 383.4 455.3 390.4 448.7 397.7 441.7 404.7 434.9 410.8 429.1 415.2 425 417.6 423 418.3 422.6 418.1 423.1 417.7 424 417.8 424.5 418.2 424.7 418.7 425.2 419.1 425.7 419.5 426.2 419.8 426.6 420.3 426.6 421.2 426.2 421.8 426 421.4 426.6 419.5 428.7 415.5 432.6 409.8 438.1 403.1 444.4 396.1 451 389.5 457.3M215.1 347.5L216.2 347.6 217.2 347.6 218.3 347.7 219.3 347.8 220.4 347.9 220.7 349.1 220.9 350.1 221.1 351.2 221.7 352.6 223.1 354.5 225.4 357 228.4 360 231.8 363.2 235.4 366.4 239 369.4 242.7 372.2 246.6 374.8 250.6 377.4 254.6 379.8 258.4 382.1 262.1 384.2 265.7 386.1 269.3 387.8 272.8 389.5 276.1 391.1 279.4 392.6 282.5 394.1 285.6 395.4 288.6 396.8 291.6 398.2 289.1 398.8 286.6 399.5 284.1 400.2 281.5 400.8 278.7 401.3 275.9 401.6 272.9 401.9 269.9 402 266.8 402 263.7 401.9 260.7 401.7 257.6 401.5 254.5 401.1 251.4 400.5 248.4 399.6 245.5 398.3 242.5 396.8 239.6 395.1 236.8 393 234.1 390.7 231.4 388 228.8 384.9 226.3 381.6 224 378.2 222.1 375.1 220.5 372.1 219.2 369.2 218.2 366.4 217.3 363.6 216.6 360.9 216.1 358.1 215.7 355.4 215.5 352.8 215.3 350.1zM232.3 350.6L235.2 350.1 238 349.5 240.9 349 244 348.6 247.8 348.5 252.3 348.6 257.3 348.9 262.6 349.3 268 350.1 273.2 351.2 278.3 352.8 283.4 354.7 288.6 356.9 293.4 359.3 297.9 361.6 302.1 363.9 305.9 366.3 309.5 368.8 312.9 371.4 316.2 374 319.1 376.6 321.9 379.4 324.5 382.2 326.9 385.1 329.3 388 331.7 390.9 333.9 393.9 336.1 396.9 338.1 399.8 340 402.7 341.7 405.5 343.3 408.4 344.8 411.1 346 413.7 347.1 416 347.8 417.8 348.2 419.4 348.4 420.8 348.6 422.1 348.9 423.5 348.3 422.5 347.9 421.6 347.4 420.6 346.8 419.5 345.9 418 344.8 416.2 343.6 414.1 342.1 411.8 340.6 409.4 338.9 406.9 337 404.3 335 401.6 332.8 398.7 330.6 395.9 328.2 393.3 325.8 390.8 323.3 388.3 320.7 385.9 318 383.7 315 381.5 312 379.5 308.8 377.6 305.4 375.9 301.9 374.2 298.1 372.6 294 371.2 289.5 369.9 284.9 368.7 280.3 367.6 275.8 366.5 271.5 365.6 267.1 364.7 262.8 364 258.5 363.1 254.4 362.1 250.1 360.7 245.6 359.2 241.4 357.7 237.7 356.1 234.9 354.8 233.3 353.8 232.6 352.9 232.5 352.2 232.5 351.4zM233.7 358.2L237 359.6 240.2 361.1 243.4 362.6 246.8 364 250.6 365.2 254.7 366.1 259.2 366.8 263.8 367.4 268.6 368.2 273.4 369.1 278.3 370.3 283.5 371.7 288.6 373.2 293.6 374.8 298.1 376.5 302.2 378.4 306.1 380.4 309.7 382.5 313.1 384.7 316.3 387.1 319.2 389.6 321.9 392.2 324.4 395 326.9 397.7 329.5 400.4 326.9 399.8 324.5 399.2 322 398.6 319.3 398 316.4 397.5 313.1 397.1 309.6 396.9 305.8 396.7 302.1 396.3 298.3 395.8 294.7 395.1 291 394.3 287.3 393.3 283.6 392.1 279.9 390.8 276.1 389.2 272.3 387.4 268.5 385.4 264.7 383.3 260.9 381.2 257.1 378.8 253.2 376.2 249.4 373.6 245.9 371 242.9 368.6 240.5 366.3 238.6 364.2 236.9 362.2 235.4 360.2zM243.3 401L245.8 401.9 248.1 402.9 250.5 403.9 253.1 404.7 256.1 405.4 259.5 405.8 263.3 406.2 267.3 406.4 271.2 406.4 275 406.2 278.6 405.6 282.1 404.7 285.5 403.6 288.9 402.6 292.2 401.8 295.5 401.2 298.6 400.7 301.8 400.3 304.9 400 308 400 311.2 400.1 314.4 400.3 317.7 400.7 320.7 401.3 323.5 402 326 402.8 328.2 403.8 330.3 404.9 332.2 406.1 334.1 407.5 336 408.9 337.9 410.4 339.6 412 341.1 413.7 342.4 415.4 343.3 417.3 344 419.3 344.5 421.3 344.8 423.3 345 425.2 345 427.1 344.9 428.8 344.6 430.5 344.3 432.2 343.9 433.8 343.6 435.3 343.2 436.7 342.8 438 342.4 439.3 342 440.7 341.3 439.3 340.7 438 340.1 436.6 339.2 435.2 337.9 433.5 336.1 431.6 333.9 429.5 331.4 427.2 328.7 425.1 326.1 423.3 323.5 421.7 320.9 420.3 318.2 419 315.2 418 311.8 417.1 307.7 416.6 303 416.2 298.1 416.1 293.3 416 288.7 416 284.5 416.1 280.4 416.4 276.4 416.7 272.6 416.8 268.9 416.7 265.2 416.3 261.6 415.7 258.3 414.9 255.1 413.9 252.3 412.5 250.1 410.7 248.2 408.4 246.6 406 245 403.4zM242.1 406.6L242.6 407.3 242.9 407.9 243.3 408.6 244.2 409.4 245.9 410.5 248.7 412 252.2 414 256.3 416.1 260.7 418 265.1 419.3 269.8 420 274.8 420.4 280 420.4 285.1 420.4 290 420.5 294.7 420.5 299.4 420.3 303.9 420.2 308.1 420.2 311.8 420.6 315 421.5 317.8 422.6 320.3 423.9 322.6 425.4 324.9 427 327.4 428.8 329.8 430.8 332 432.9 334 434.9 335.6 436.7 336.8 438.1 337.7 439.4 338.3 440.5 338.6 441.6 338.7 442.7 338.6 443.9 338.2 445.1 337.7 446.3 336.8 447.4 335.7 448.5 334.3 449.6 332.6 450.8 330.6 451.8 328.5 452.8 326.4 453.6 324.2 454.4 321.9 455 319.4 455.5 317 455.9 314.6 456 312.3 456 310.1 455.8 307.8 455.5 305.4 454.9 302.5 454 299.3 452.8 295.7 451.4 291.9 449.7 288 447.8 284.1 445.7 280.1 443.4 275.9 440.9 271.6 438.2 267.6 435.5 264 432.7 260.9 429.9 258.2 427.1 255.7 424.2 253.4 421.3 251.1 418.6 249.1 416.1 247.3 413.7 245.5 411.3 243.9 409zM355.1 422L355.9 423.6 356.8 425.3 357.6 426.9 358.4 428.6 359.1 430.1 359.9 431.7 360.7 433.3 361.4 434.8 361.9 436.3 362 437.7 361.8 439.1 361.3 440.4 360.6 441.7 359.7 442.9 358.7 444 357.6 444.9 356.3 445.7 354.9 446.3 353.4 446.9 351.9 447.5 350.2 447.9 348.5 448.2 346.6 448.5 344.8 448.8 342.9 449.1 343.4 448.2 343.9 447.4 344.4 446.5 344.9 445.6 345.5 444.6 346.3 443.5 347.1 442.3 347.9 441 348.7 439.7 349.5 438.3 350.2 436.7 350.9 435.1 351.6 433.3 352.3 431.6 352.9 429.9 353.4 428.3 353.8 426.7 354.2 425.1 354.6 423.5zM474 496.8L474.3 496.2 474.8 495.7 475.3 495.1 475.3 494.2 474.6 492.8 473.1 490.9 470.9 488.4 468.3 485.6 465.4 482.6 462.5 479.4 459.5 476.1 456.2 472.5 452.8 468.7 449.3 464.6 446.1 460.3 443.1 455.4 440.1 450.2 437.1 444.7 434.5 439.2 432.1 434 429.9 428.1 427.7 421.4 425.9 415.3 424.9 411.1 425 410.5 426.9 415.2 430.5 424.5 434.6 435.1 438 444.4 439.7 449.3 439.4 449 437.6 445.6 435.1 440.3 432.4 434.1 430.2 428.5 428.5 423.3 426.9 417.7 425.4 411.7 423.9 405.6 422.6 399.4 421.5 393 420.5 386.3 419.6 379.5 418.8 372.7 418.1 366.1 417.5 359.7 416.9 353.3 416.4 347 416.1 340.8 415.8 334.9 415.5 328.9 415.4 322.8 415.3 317 415.4 311.9 415.5 307.9 415.8 305.4 416.1 304 416.5 303.3 417.1 302.9 417.6 302.4 418.3 301.8 419 301.4 419.8 301.2 420.6 301.1 421.4 301.2 422 301.2 422.5 301 423 301.2 423.9 302 425.5 303.9 427.9 307.2 430.9 311.6 434.3 316.6 437.7 322 440.9 327.2 443.9 332.5 446.9 338.1 449.9 343.8 452.7 349.5 455.5 355.1 458.1 360.5 460.8 365.9 463.3 371.3 465.6 376.7 467.8 382.2 469.7 387.8 471.6 393.5 473.2 399.2 474.7 404.9 475.9 410.7 476.9 416.9 477.7 423.3 478.4 429.7 478.8 435.6 479.1 440.7 479.2 444.8 479.2 448.1 478.9 451 478.6 453.7 478.2 456.5 477.6 459.5 476.8 462.3 475.9 465 475.1 467.7 474.7 470.3 474.7 473 475 475.7 475.5 478.3 476 480.5 476.4 482.3 476.7 483.2 477 483.4 477.3 483.4 477.8 483.8 478.5 485 479.6 487.2 480.9 490.1 482.3 493.5 483.8 496.9 485.2 500.2 484.1 501.6 483 503.1 482 504.6 480.9 506.1 480 507.4 479.1 508.6 478.2 509.6 477.4 510.6 476.7 511.6 476.1 512.7 475.5 513.8 475.1 515 474.7 516.2 474.4 517.2 474.1 518M424.5 316.2L427.4 320.3 430.3 324.3 433.1 328.3 436 332.6 438.9 337.2 441.9 342.3 444.9 347.8 447.9 353.5 450.8 359.3 453.5 365 456.1 370.8 458.6 376.7 460.9 382.6 463 388.4 464.8 394 466.3 399.5 467.6 404.8 468.6 410 469.4 415.2 470 420.4 470.5 425.8 470.7 431.5 470.8 437 470.8 442.1 470.8 446.3 470.8 449.6 470.8 452.1 470.6 454.1 470.5 456.1 470.3 458.3 470 460.8 469.6 463.4 469.2 466 468.8 468.6 468.4 471.2 467.2 468.7 466 466.4 464.9 464 463.6 461.3 462.3 458 460.8 454.3 459.2 450.1 457.5 445.5 455.8 440.7 454 435.7 452.2 430.4 450.3 424.9 448.4 419.2 446.5 413.1 444.6 406.9 442.7 400.2 440.7 393.1 438.7 385.9 436.8 378.6 435 371.6 433.3 364.6 431.6 357.5 430 350.6 428.6 344.1 427.4 338.1 426.5 333 425.9 328.5 425.5 324.4 425 320.4zM422.5 333.5L422.3 337 422.1 340.4 421.9 343.8 421.8 347.6 421.8 352 422.1 357.2 422.6 362.9 423.1 369.1 423.8 375.2 424.6 381 425.5 386.6 426.5 392.2 427.6 397.6 428.8 402.9 430.1 408 431.4 413 432.9 417.8 434.4 422.4 436 426.8 437.5 430.9 439.2 434.8 441.1 438.5 442.9 441.9 444.5 444.9 445.9 447.4 447 449.4 447.8 451 448.5 452.1 449.1 453 449.7 453.6 450.3 454 450.8 454.1 451.3 453.9 451.8 453.6 452.1 453.3 452.4 453 452.6 452.7 452.8 452.3 452.8 451.7 452.5 450.7 451.9 449.5 451.2 448 450.2 446.3 449.1 444.1 447.9 441.5 446.6 438.1 445.2 434.2 443.7 430 442.1 425.4 440.6 420.9 439.1 416.2 437.5 411.4 436 406.4 434.5 401.3 433.1 396 431.9 390.3 430.7 384.2 429.6 378.1 428.6 372.3 427.6 366.9 426.8 362.1 426.1 357.6 425.4 353.4 424.9 349.6 424.3 346 423.9 343 423.5 340.4 423.2 338.1 422.9 335.9zM465.7 518.9L462.9 518.5 460 518.1 457.1 517.7 454.2 517.3 451.4 516.8 448.6 516.2 446 515.6 443.3 514.9 440.6 514.2 437.6 513.5 434.3 512.7 430.9 511.7 427.3 510.8 423.7 509.9 420.1 509.3 416.7 508.8 413.4 508.4 410 508.2 406.4 508.2 402.2 508.4 397.5 508.9 392.4 509.5 386.9 510.3 381 511.4 374.7 512.8 367.8 514.6 360.4 516.8 352.6 519.2 344.6 521.8 336.7 524.6 328.8 527.7 320.6 531.1 312.5 534.6 304.6 538.1 297.2 541.5 290.2 544.8 283.4 548 277 551.2 271.3 554.2 266.4 557 262.4 559.6 259.3 561.9 256.9 564.1 255 566 253.4 567.7 252.3 568.9 251.7 569.7 251.5 570.4 251.6 570.9 251.7 571.5 252 572.1 252.6 572.7 253.3 573.3 254.1 573.8 255 574.2 255.5 574.4 255.9 574.5 256.4 574.5 257.8 574.5 260.3 574.5 264.2 574.6 269.2 574.6 275 574.6 281.1 574.5 287.3 574.3 293.7 574.1 300.5 573.9 307.5 573.6 314.6 573 321.6 572.2 328.5 570.8 335.5 569.2 342.5 567.3 349.5 565.4 356.4 563.5 363.3 561.6 370.2 559.6 377 557.6 383.6 555.6 389.9 553.7 395.8 551.8 401.6 549.9 407.2 548.1 412.2 546.2 416.8 544.4 420.7 542.6 424.1 540.8 427.2 539 429.9 537.2 432.6 535.6 435 534 437.2 532.5 439.1 531.1 441 529.8 442.9 528.7 444.6 527.7 446.1 527 447.6 526.3 449.3 525.8 451.4 525.2 454.1 524.7 457.1 524.2 460.4 523.7 463.6 523.3 466.6 523.1 469.6 522.9 472.7 522.9 475.6 522.9 478.1 522.9 479.9 522.9M271.7 562.8L276.6 560.4 281.3 558.2 286 555.9 291.2 553.4 297.3 550.7 304.4 547.5 312.2 544 320.5 540.4 328.8 536.9 336.8 533.6 344.7 530.5 352.7 527.5 360.5 524.6 367.9 522 374.8 519.9 381.1 518.2 387 516.8 392.6 515.8 397.6 515 402.2 514.5 406.4 514.2 410 514.2 413.3 514.3 416 514.6 418.3 514.9 420.1 515.3 421.3 515.7 422.1 516.2 422.6 516.8 422.8 517.3 422.8 517.9 422.6 518.5 422 519.1 420.9 519.6 419.3 520.1 416.9 520.3 413.9 520.3 410.5 520.3 406.6 520.5 402.3 520.9 397.6 521.5 392.6 522.3 387.1 523.2 381.1 524.4 374.8 526 368 528.1 360.5 530.5 352.7 533.2 344.8 536.1 336.9 539 328.9 542 320.6 545.3 312.3 548.5 304.4 551.6 297.3 554.3 291.3 556.5 286 558.2 281.3 559.7 276.6 561.2zM269.7 568.4L275.1 566.8 280.2 565.2 285.4 563.6 291.1 561.9 297.4 559.8 304.6 557.4 312.5 554.6 320.7 551.7 329 548.8 337 546.2 344.7 543.7 352.3 541.3 359.9 538.9 367.4 536.8 374.9 534.8 382.4 533 389.9 531.3 397.3 529.8 404.4 528.5 411.3 527.4 417.8 526.4 424 525.7 430.1 525.1 436 524.6 442 524 440.6 525.6 439.4 527.2 438.1 528.8 436.4 530.5 434.3 532.2 431.6 533.9 428.4 535.6 424.9 537.4 421 539.1 416.8 541 412.1 543 407 545 401.5 547.1 395.8 549.1 389.8 551.1 383.6 553 377 554.8 370.2 556.6 363.2 558.3 356.3 559.9 349.4 561.6 342.5 563.2 335.5 564.8 328.5 566.1 321.5 567.3 314.4 568.1 307 568.8 299.8 569.2 293.1 569.5 287.3 569.7 282.7 569.7 279 569.5 275.9 569.1 272.9 568.7zM502.6 527.1L503.5 526.9 504.7 526.7 506.2 526.4 507.6 526.1 509 525.9 509.5 525.3 509.3 524.3 509.5 523.6 511.1 523.9 515.3 525.8 523.6 530.4 535.1 537 547.4 544.3 558.4 550.8 565.8 555.3 569.2 557.4 570 558.1 569.2 557.9 568 557.5 567.3 557.6 567.2 558.1 567 558.6 566.6 559.2 566.2 559.6 565.9 560 566.2 560.6 567.3 561.5 568 562.1 567.1 561.8 563.6 560.1 556 555.9 544.8 549.6 532.3 542.6 520.6 536.2 512.2 531.9 507.9 530.2 506.3 530.4 506.1 531.5 506.4 532.8 505.9 533.6 504.5 533.8 503 533.9 501.6 534 500.3 534.1 499.5 534.2" stroke="#3a6f66" stroke-width=".7"/><text transform="matrix(1.7254 0.8590 -0.5684 1.0666 371.13 465.63)" font-family="Liberation Serif,serif" font-style="italic" font-weight="bold" font-size="36" letter-spacing="0" fill="none" stroke="#2d5d55" stroke-width="1.07143">home</text><text transform="matrix(1.7254 0.8590 -0.5684 1.0666 372.63 466.93)" font-family="Liberation Serif,serif" font-style="italic" font-weight="bold" font-size="36" letter-spacing="0" fill="none" stroke="#a2e2d0" stroke-width="1">home</text></g><g transform="translate(591.303 189.5)"><rect x="1" y="8" width="5.500" height="52" fill="#6b6a1d"/><rect x="3.200" y="8" width="1.400" height="52" fill="#aaa642"/><rect x="0.300" y="8" width="1.400" height="52" fill="#2b3a1c"/><path d="M1.500 0h4.500v2.500h-1l.8 3h1v2.500h-6v-2.500h1l.6-3h-.9z" fill="#626119" stroke="#26260d" stroke-width=".5"/><path d="M1.500 68h4.500v-2.500h-1l.8-3h1v-2.500h-6v2.500h1l.6 3h-.9z" fill="#626119" stroke="#26260d" stroke-width=".5"/></g><g transform="translate(593.006 455.5)"><rect x="1" y="8" width="5.500" height="52" fill="#6b6a1d"/><rect x="3.200" y="8" width="1.400" height="52" fill="#aaa642"/><rect x="0.300" y="8" width="1.400" height="52" fill="#2b3a1c"/><path d="M1.500 0h4.500v2.500h-1l.8 3h1v2.500h-6v-2.500h1l.6-3h-.9z" fill="#626119" stroke="#26260d" stroke-width=".5"/><path d="M1.500 68h4.500v-2.500h-1l.8-3h1v-2.500h-6v2.500h1l.6 3h-.9z" fill="#626119" stroke="#26260d" stroke-width=".5"/></g><g transform="translate(594.686 718)"><rect x="1" y="8" width="5.500" height="52" fill="#6b6a1d"/><rect x="3.200" y="8" width="1.400" height="52" fill="#aaa642"/><rect x="0.300" y="8" width="1.400" height="52" fill="#2b3a1c"/><path d="M1.500 0h4.500v2.500h-1l.8 3h1v2.500h-6v-2.500h1l.6-3h-.9z" fill="#626119" stroke="#26260d" stroke-width=".5"/><path d="M1.500 68h4.500v-2.500h-1l.8-3h1v-2.500h-6v2.500h1l.6 3h-.9z" fill="#626119" stroke="#26260d" stroke-width=".5"/></g><g transform="translate(596.35 978)"><rect x="1" y="8" width="5.500" height="52" fill="#6b6a1d"/><rect x="3.200" y="8" width="1.400" height="52" fill="#aaa642"/><rect x="0.300" y="8" width="1.400" height="52" fill="#2b3a1c"/><path d="M1.500 0h4.500v2.500h-1l.8 3h1v2.500h-6v-2.500h1l.6-3h-.9z" fill="#626119" stroke="#26260d" stroke-width=".5"/><path d="M1.500 68h4.500v-2.500h-1l.8-3h1v-2.500h-6v2.500h1l.6 3h-.9z" fill="#626119" stroke="#26260d" stroke-width=".5"/></g><g><path d="M179 617.500l5-1.500 6 1.500 1.500 3.500 5 2.500 1.500 5 .9 104-1.500 5-5.500 3-1.500 3.500-6 2-5.500-2.500-1.500-3.500-4.500-3-1.500-5-1.200-104 1.500-5 5-2.500z" fill="#7a7923" stroke="#4a4a14" stroke-width=".8"/><path d="M171.500 630l1.300 100" stroke="#55551a" stroke-width="2.200"/><circle cx="183" cy="622.500" r=".9" fill="#2a2a0c"/><circle cx="183.500" cy="628" r="1.500" fill="#c9cfb6"/><circle cx="184.800" cy="729" r=".9" fill="#2a2a0c"/><circle cx="185" cy="734.500" r="1.500" fill="#c9cfb6"/><path d="M188 651.500a6.500 6.500 0 1 0 -1 11a8.500 8.500 0 0 1 1-11z" fill="#2f3a1a"/><path d="M185.500 656.200l4-1 10 1.800 22-2.200.8-2 2.200-.2 1 1.800 33-4.300 9 .3 6 1.800 1.500 1.800-1.800 2.200-6.500 1.700-8 .6-33.500 2.300-.8 1.700-2.200.2-1-1.500-23 1.700-9.500-.3-3.700-3.800z" fill="#65641c" stroke="#2b2b0d" stroke-width=".8"/><path d="M200 658.300l21-2M227 655.500l40-4.300" stroke="#b1ad49" stroke-width="1.100" fill="none"/><path d="M230 657.800l36-3.200" stroke="#3a3a11" stroke-width=".8" fill="none"/><ellipse cx="184.500" cy="692.500" rx="6" ry="4.200" fill="#6a6921" stroke="#2c2c10" stroke-width="1.200"/><path d="M180 692.500c0-2.500 2-3.800 4.500-3.800s4.500 1.300 4.500 3.800v14.500c0 .8-.5 1.200-1.200 1.200v5h-6.300v-5c-.8 0-1.500-.4-1.500-1.200z" fill="#9fbdb3" stroke="#3b4a3c" stroke-width=".8"/><path d="M181.500 693v14M187.500 693v14" stroke="#dbe9e2" stroke-width="1.200"/><path d="M180 700.500h9M180.500 708h8" stroke="#3b4a3c" stroke-width=".8"/></g></g><path d="M143.500 602V730" stroke="#111" stroke-width="1"/><path d="M141 664h3" stroke="#22f" stroke-width="1.500"/><path d="M66 967L110 957.500" stroke="#e34a3a" stroke-width="1"/><path d="M104 953l21 .5-19.500 9.500z" fill="#ee6f62" opacity=".85"/><rect x="795.3" y="87.3" width="406.3" height="893.3" fill="#73afa5"/><rect x="822.5" y="114.5" width="352.1" height="862.5" fill="#84c6ba"/><rect x="795.3" y="87.3" width="406.3" height="893.3" fill="#2a5a52" filter="url(#grainF)" opacity=".16"/><rect x="795.3" y="977" width="406.3" height="3.200" fill="url(#thr)"/><path d="M795 99.500v2.800M1201.800 99.500v2.800" stroke="#c02020" stroke-width="1.200"/><g transform="translate(1175 132)"><path d="M2.300 0h4.400v2.200h-1.200l.9 2.600 1.400.8v3.400h-6.600v-3.400l1.400-.8.9-2.600h-1.200z" fill="#8a8a30" stroke="#23230e" stroke-width=".6"/><path d="M2.300 64h4.400v-2.200h-1.200l.9-2.600 1.400-.8v-3.400h-6.600v3.400l1.400.8.9 2.600h-1.200z" fill="#8a8a30" stroke="#23230e" stroke-width=".6"/><rect x="0" y="9" width="4" height="46" fill="#17251c"/><rect x="3.600" y="9" width="4.200" height="46" fill="#6f7026"/><rect x="4.800" y="9" width="1.400" height="46" fill="#c4be5a"/><path d="M0 9.500h8M0 32h8M0 54.5h8" stroke="#0e140c" stroke-width="1.200"/></g><g transform="translate(1175 384)"><path d="M2.300 0h4.400v2.200h-1.200l.9 2.600 1.400.8v3.400h-6.600v-3.400l1.400-.8.9-2.600h-1.200z" fill="#8a8a30" stroke="#23230e" stroke-width=".6"/><path d="M2.300 64h4.400v-2.200h-1.200l.9-2.600 1.400-.8v-3.400h-6.600v3.400l1.400.8.9 2.600h-1.200z" fill="#8a8a30" stroke="#23230e" stroke-width=".6"/><rect x="0" y="9" width="4" height="46" fill="#17251c"/><rect x="3.600" y="9" width="4.200" height="46" fill="#6f7026"/><rect x="4.800" y="9" width="1.400" height="46" fill="#c4be5a"/><path d="M0 9.500h8M0 32h8M0 54.5h8" stroke="#0e140c" stroke-width="1.200"/></g><g transform="translate(1175 636)"><path d="M2.300 0h4.400v2.200h-1.200l.9 2.600 1.400.8v3.400h-6.600v-3.400l1.400-.8.9-2.600h-1.200z" fill="#8a8a30" stroke="#23230e" stroke-width=".6"/><path d="M2.300 64h4.400v-2.200h-1.200l.9-2.600 1.400-.8v-3.400h-6.600v3.400l1.400.8.9 2.600h-1.200z" fill="#8a8a30" stroke="#23230e" stroke-width=".6"/><rect x="0" y="9" width="4" height="46" fill="#17251c"/><rect x="3.600" y="9" width="4.200" height="46" fill="#6f7026"/><rect x="4.800" y="9" width="1.400" height="46" fill="#c4be5a"/><path d="M0 9.500h8M0 32h8M0 54.5h8" stroke="#0e140c" stroke-width="1.200"/></g><g transform="translate(1175 888)"><path d="M2.300 0h4.400v2.200h-1.200l.9 2.600 1.400.8v3.400h-6.600v-3.400l1.400-.8.9-2.600h-1.200z" fill="#8a8a30" stroke="#23230e" stroke-width=".6"/><path d="M2.300 64h4.400v-2.200h-1.200l.9-2.600 1.400-.8v-3.400h-6.600v3.400l1.400.8.9 2.600h-1.200z" fill="#8a8a30" stroke="#23230e" stroke-width=".6"/><rect x="0" y="9" width="4" height="46" fill="#17251c"/><rect x="3.600" y="9" width="4.200" height="46" fill="#6f7026"/><rect x="4.800" y="9" width="1.400" height="46" fill="#c4be5a"/><path d="M0 9.500h8M0 32h8M0 54.5h8" stroke="#0e140c" stroke-width="1.200"/></g><g><path d="M841 518.400h5.500l5.500 4.500v86.500l-5.500 5.500h-5.500l-5.700-5.500v-86.500z" fill="#40592d" stroke="#111a0c" stroke-width="1"/><circle cx="843.500" cy="522.800" r="1.800" fill="#0c1008"/><circle cx="843.700" cy="526.500" r="1.100" fill="#dfe6d8"/><circle cx="843.500" cy="601.500" r="1.500" fill="#0c1008"/><path d="M842.500 606l1.200-2 1.200 2z" fill="#dfe6d8"/><circle cx="843" cy="548.600" r="4.600" fill="#3a4f27" stroke="#0f150a" stroke-width="1.200"/><circle cx="843" cy="548.600" r="2" fill="#5e6a33"/><path d="M845 547.300h16.500l.8-1.800 1.400 0 .8 1.300 24-1.600 4.500 .8 1.600-.4 1.400 1.400v3.500l-1.400 1.300-1.600-.5-4.500 1.300-24-1.500-.8 1.200h-1.400l-.8-1.700H845z" fill="#77772a" stroke="#23230e" stroke-width=".7"/><path d="M866 548.200l24-1.200" stroke="#a9a64a" stroke-width="1.100"/><path d="M895 545.800v5.800" stroke="#15150a" stroke-width="1.300"/><path d="M841.200 577.500a2.900 3 0 0 1 5.800 0v11a2.900 3 0 0 1-5.800 0z" fill="#0e120b"/><path d="M842.800 578.500a1.400 1.600 0 0 1 2.800 0v9.500a1.400 1.400 0 0 1-2.800 0z" fill="#e9eee6"/><path d="M842.800 584h2.800" stroke="#0e120b" stroke-width=".8"/></g><g fill="none" stroke="#0c1513" stroke-width="1.100"><rect x="795.3" y="87.3" width="406.3" height="893.3" stroke-width="1.500"/><path d="M828.500 87.3V114.5M1168.500 87.3V114.5"/><rect x="822.5" y="114.5" width="352.1" height="862.5"/><path d="M842.6 713.4L842.6 291 842.9 280.8 843.9 270.6 845.6 260.6 847.9 250.6 850.9 240.9 854.5 231.3 858.7 222 863.5 213 868.9 204.3 874.8 196 881.3 188.1 888.3 180.7 895.7 173.7 903.6 167.2 911.9 161.3 920.6 155.9 929.6 151.1 938.9 146.9 948.5 143.3 958.2 140.3 968.2 138 978.2 136.3 988.4 135.3 998.6 135 1008.8 135.3 1019 136.3 1029 138 1039 140.3 1048.7 143.3 1058.3 146.9 1067.6 151.1 1076.6 155.9 1085.3 161.3 1093.6 167.2 1101.5 173.7 1108.9 180.7 1115.9 188.1 1122.4 196 1128.3 204.3 1133.7 213 1138.5 222 1142.7 231.3 1146.3 240.9 1149.3 250.6 1151.6 260.6 1153.3 270.6 1154.3 280.8 1154.6 291 1154.6 713.4z"/><path d="M847.4 709.2L847.4 291 847.7 281.1 848.7 271.3 850.3 261.5 852.6 251.9 855.4 242.4 858.9 233.1 863 224.1 867.7 215.4 872.9 207 878.6 199 884.9 191.3 891.7 184.1 898.9 177.3 906.6 171 914.6 165.3 923 160.1 931.7 155.4 940.7 151.3 950 147.8 959.5 145 969.1 142.7 978.9 141.1 988.7 140.1 998.6 139.8 1008.5 140.1 1018.3 141.1 1028.1 142.7 1037.7 145 1047.2 147.8 1056.5 151.3 1065.5 155.4 1074.2 160.1 1082.6 165.3 1090.6 171 1098.3 177.3 1105.5 184.1 1112.3 191.3 1118.6 199 1124.3 207 1129.5 215.4 1134.2 224.1 1138.3 233.1 1141.8 242.4 1144.6 251.9 1146.9 261.5 1148.5 271.3 1149.5 281.1 1149.6 291 1149.6 709.2z"/><rect x="842.6" y="754.6" width="312" height="202.7"/><rect x="847.4" y="758.5" width="302.2" height="195"/><path d="M822.5 923.400H1174.6" /><path d="M795.3 977H1201.6" /><path d="M1174.6 114.5L822.5 545.800L1174.6 977" stroke-width=".7"/><path d="M978.6 407.4L978.2 406.8 977.6 406.3 977.1 405.7 976.7 405.1 976.5 404.4 976.6 403.6 976.9 402.7 977.3 401.7 977.7 400.8 977.8 400 977.7 399.2 977.4 398.6 977.1 397.9 976.6 397.2 976 396.5 975.3 395.7 974.4 394.8 973.5 394 972.5 393.2 971.7 392.6 971 392.2 970.6 392 970.1 391.8 969.4 391.8 968.2 391.7 966.4 391.7 964.1 391.6 961.6 391.7 959.1 391.8 956.8 392.1 954.9 392.6 953.2 393.3 951.5 394.1 949.8 394.9 948.1 395.6 946.4 396.4 944.8 397.2 943.1 398 941.3 398.6 939.4 399.1 937.3 399.4 934.9 399.5 932.5 399.5 930.2 399.3 928.1 399.1 926.2 398.8 924.5 398.4 922.8 397.9 921.2 397.3 919.3 396.5 917.4 395.6 915.4 394.5 913.3 393.3 911.2 391.9 908.9 390.4 906.4 388.7 903.6 386.8 900.8 384.8 898.2 382.8 895.8 380.8 893.8 378.9 892 377.1 890.3 375.2 888.7 373.3 887.1 371.2 885.4 368.9 883.8 366.4 882.1 363.8 880.6 361.3 879.2 359 878 357 876.8 355 875.7 353.3 874.8 351.6 874 350.2 873.5 349.2 873.3 348.6 873.2 348 872.9 347.3 872.3 346.1 871.2 344.5 869.8 342.7 868.3 340.6 866.7 338.2 865.3 335.7 864.1 332.8 862.9 329.5 861.8 326.1 860.9 322.8 860.1 320 859.6 317.5 859.2 315.3 859.1 313.3 859 311.5 859.1 310 859.3 308.8 859.6 307.9 860.1 307.3 860.5 306.7 861 306 861.7 306.5 862.5 306.9 863.3 307.4 864.1 307.8 864.9 308.2 865.8 308.6 866.7 309 867.6 309.4 868.6 309.8 869.7 310 870.9 310 872.1 310 873.4 309.9 874.9 309.8 876.7 309.5 878.8 309.1 881.3 308.6 883.9 308 886.5 307.4 888.9 307.1 891 306.9 892.9 306.7 894.9 306.7 896.9 306.8 899.3 307.1 902.1 307.5 905.2 308 908.4 308.6 911.7 309.4 915 310.4 918.4 311.5 922 312.8 925.6 314.3 929.1 315.8 932.5 317.4 935.8 319 939.1 320.7 942.4 322.5 945.4 324.3 948.2 326.1 950.7 328 953 329.9 955 331.9 956.9 333.8 958.6 335.7 960.2 337.5 961.6 339.2 962.8 340.8 963.8 342.6 964.8 344.4 965.5 346.4 966 348.5 966.4 350.7 966.8 352.8 967.4 354.9 968 356.9 968.8 358.9 969.5 360.9 970.2 362.7 970.9 364.5 971.4 365.9 971.8 367.2 972.2 368.4 972.5 369.7 973 371.2 973.5 373.1 974 375.2 974.5 377.4 975 379.6 975.6 381.7 976.2 383.8 976.8 386 977.4 388 978.1 389.9 978.6 391.3 979.2 392.1 979.7 392.5 980.2 392.7 980.7 392.8 981.3 393 982.5 393 983.7 393 984.9 393 986.1 393 987.4 393 992.9 387.3 998.8 381.2 1004.5 375.3 1009.5 370.2 1013.1 366.6 1015.1 364.8 1015.7 364.4 1015.5 364.8 1015.2 365.5 1015.2 366 1015.6 366.2 1016 366.5 1016.3 366.9 1016.6 367.3 1016.8 367.7 1017.3 367.7 1018 367.3 1018.5 367.1 1018.2 367.6 1016.6 369.5 1013.3 373 1008.6 377.8 1003.1 383.4 997.5 389.1 992.2 394.5M867.1 315.2L867.8 315.2 868.5 315.2 869.2 315.2 869.9 315.2 870.6 315.2 870.8 316.1 870.8 316.8 871 317.7 871.4 318.7 872.3 320 873.8 321.7 875.7 323.8 878 326.1 880.4 328.4 882.8 330.5 885.2 332.3 887.9 334.2 890.6 336 893.3 337.6 895.9 339.2 898.4 340.6 900.9 341.9 903.3 343.1 905.7 344.2 908.1 345.3 910.3 346.3 912.5 347.3 914.7 348.2 916.8 349.1 919 350.1 917.2 350.7 915.4 351.4 913.6 352 911.7 352.6 909.8 353.1 907.8 353.5 905.7 353.8 903.6 354.1 901.5 354.2 899.3 354.3 897.2 354.3 895.1 354.2 893 354 890.9 353.7 888.9 353.1 886.9 352.3 884.9 351.3 883 350.1 881.1 348.7 879.3 347 877.5 345.1 875.8 342.8 874.2 340.4 872.7 338 871.4 335.7 870.4 333.5 869.6 331.4 869 329.3 868.4 327.3 868 325.2 867.6 323.2 867.4 321.2 867.3 319.2 867.2 317.2zM878.4 316.5L880.4 315.9 882.3 315.3 884.2 314.7 886.3 314.2 888.9 313.9 891.9 313.7 895.4 313.5 899 313.6 902.7 313.8 906.3 314.3 909.9 315.2 913.5 316.4 917.1 317.8 920.6 319.3 923.8 320.9 926.7 322.4 929.5 324.1 932.1 325.9 934.5 327.7 936.8 329.6 939 331.5 941 333.6 942.9 335.7 944.7 337.9 946.4 340 948.2 342.3 949.8 344.6 951.4 346.9 952.9 349.2 954.3 351.4 955.6 353.6 956.8 355.8 957.8 358 958.8 360 959.5 361.8 960 363.3 960.3 364.6 960.5 365.7 960.6 366.8 960.8 367.9 960.4 367.1 960.1 366.4 959.7 365.6 959.3 364.7 958.6 363.6 957.8 362.2 956.9 360.5 955.8 358.7 954.7 356.8 953.4 354.9 952 352.9 950.5 350.7 949 348.5 947.3 346.4 945.6 344.4 943.8 342.5 942 340.7 940.1 338.9 938.1 337.2 936 335.7 933.8 334.3 931.4 332.9 929 331.7 926.5 330.6 923.8 329.6 920.8 328.7 917.7 327.9 914.5 327.3 911.2 326.7 908.1 326.1 905 325.6 902 325.2 899 324.9 896.1 324.5 893.2 323.9 890.3 323.2 887.3 322.3 884.5 321.3 882 320.4 880.2 319.5 879.1 318.9 878.6 318.2 878.6 317.7 878.6 317.1zM879.3 322.2L881.5 323.1 883.6 324 885.8 325 888.1 325.8 890.6 326.5 893.5 327 896.5 327.3 899.7 327.5 903 327.8 906.3 328.3 909.8 328.9 913.4 329.7 917 330.5 920.5 331.5 923.8 332.6 926.7 333.9 929.5 335.3 932.1 336.7 934.5 338.3 936.8 340 939 341.9 940.9 343.9 942.8 345.9 944.6 348 946.4 350.1 944.6 349.7 942.8 349.3 940.9 348.9 939 348.6 936.8 348.3 934.5 348.2 931.9 348.2 929.2 348.2 926.4 348.1 923.8 347.9 921.1 347.5 918.5 347 915.9 346.4 913.3 345.7 910.7 344.8 908.1 343.8 905.4 342.6 902.8 341.2 900.2 339.8 897.6 338.3 895 336.7 892.4 334.9 889.8 333.1 887.4 331.3 885.4 329.6 883.8 328 882.5 326.5 881.4 325.1 880.4 323.6zM885.4 354.5L887.1 355.1 888.7 355.7 890.3 356.4 892 356.9 894.1 357.3 896.4 357.5 899 357.6 901.8 357.6 904.5 357.4 907.1 357.1 909.7 356.5 912.1 355.6 914.6 354.6 917 353.7 919.3 352.9 921.7 352.3 923.9 351.7 926.2 351.3 928.4 350.9 930.7 350.7 933 350.7 935.4 350.7 937.7 350.9 940 351.2 942 351.6 943.8 352.2 945.5 352.8 947 353.6 948.5 354.5 949.9 355.5 951.3 356.6 952.6 357.7 953.9 359 955 360.3 956 361.6 956.7 363.1 957.2 364.7 957.5 366.3 957.8 367.9 957.9 369.5 957.9 370.9 957.8 372.4 957.5 373.8 957.3 375.2 957 376.5 956.8 377.7 956.5 378.8 956.2 379.9 955.8 381 955.5 382.1 955 381 954.6 380 954.1 378.9 953.5 377.7 952.5 376.5 951.1 375 949.5 373.3 947.7 371.6 945.7 370 943.8 368.6 941.9 367.4 940 366.4 938 365.5 935.8 364.8 933.3 364.2 930.3 363.9 927 363.9 923.5 363.9 920 364.1 916.7 364.2 913.7 364.5 910.8 364.9 908 365.2 905.4 365.5 902.8 365.5 900.3 365.4 897.8 365.1 895.5 364.6 893.3 363.9 891.4 362.9 889.9 361.6 888.7 360 887.6 358.1 886.5 356.3zM884.6 358.8L884.9 359.3 885.1 359.8 885.3 360.3 885.9 360.9 887.1 361.6 889 362.7 891.3 364.1 894.1 365.6 897.1 366.8 900.2 367.7 903.4 368.1 906.9 368.2 910.5 368.1 914.2 367.9 917.6 367.7 921 367.5 924.3 367.2 927.5 367 930.6 366.8 933.3 367 935.6 367.6 937.7 368.4 939.5 369.3 941.2 370.5 942.9 371.7 944.7 373 946.4 374.5 948.1 376.2 949.6 377.7 950.7 379.1 951.6 380.2 952.3 381.2 952.7 382.1 952.9 382.9 953 383.9 952.9 384.8 952.7 385.8 952.2 386.8 951.6 387.7 950.7 388.7 949.7 389.6 948.4 390.5 946.9 391.5 945.3 392.3 943.8 393 942.1 393.7 940.4 394.2 938.6 394.7 936.8 395 935 395.2 933.4 395.2 931.8 395.2 930.1 394.9 928.3 394.5 926.3 393.9 924 393 921.4 392 918.7 390.7 916 389.3 913.2 387.8 910.4 386.1 907.5 384.2 904.5 382.3 901.8 380.2 899.3 378.2 897.2 376.1 895.3 374 893.6 371.8 892.1 369.7 890.6 367.7 889.2 365.9 888 364.1 886.8 362.3 885.7 360.6zM965.6 366.4L966.2 367.7 966.8 369.1 967.5 370.4 968.1 371.7 968.6 373 969.2 374.2 969.8 375.5 970.3 376.7 970.7 377.9 970.8 379.1 970.6 380.2 970.2 381.3 969.6 382.4 969 383.4 968.2 384.3 967.3 385.1 966.4 385.7 965.3 386.3 964.1 386.9 963 387.4 961.7 387.8 960.3 388.1 958.9 388.4 957.5 388.6 956.1 388.9 956.5 388.2 956.9 387.5 957.3 386.8 957.7 386 958.2 385.2 958.7 384.2 959.3 383.3 960 382.2 960.6 381.1 961.2 379.9 961.8 378.6 962.3 377.3 962.9 375.8 963.4 374.4 963.8 373 964.2 371.6 964.6 370.3 964.9 369 965.2 367.7zM1062.5 427L1062.8 426.5 1063.3 426 1063.7 425.5 1063.7 424.8 1063.1 423.5 1061.8 421.8 1059.9 419.7 1057.6 417.3 1055.1 414.7 1052.7 411.9 1050 409.1 1047.2 406 1044.3 402.8 1041.4 399.3 1038.7 395.6 1036.1 391.6 1033.6 387.1 1031.2 382.5 1029 377.9 1027.1 373.5 1025.2 368.6 1023.5 363 1022 357.8 1021.2 354.3 1021.3 353.8 1022.8 357.7 1025.8 365.4 1029.1 374.4 1031.9 382.2 1033.3 386.3 1033 386.2 1031.6 383.3 1029.5 378.8 1027.3 373.6 1025.5 368.9 1024.1 364.5 1022.8 359.8 1021.6 354.8 1020.4 349.7 1019.4 344.5 1018.5 339.1 1017.7 333.5 1017.1 327.8 1016.5 322.1 1015.9 316.6 1015.4 311.2 1015 305.8 1014.7 300.5 1014.4 295.4 1014.2 290.4 1014 285.4 1014 280.2 1014 275.4 1014 271.1 1014.2 267.7 1014.4 265.6 1014.7 264.3 1015 263.7 1015.4 263.3 1015.9 262.8 1016.4 262.3 1017.1 261.9 1017.7 261.6 1018.4 261.5 1019 261.5 1019.5 261.4 1019.9 261.2 1020.3 261.3 1021.1 261.9 1022.4 263.4 1024.3 265.9 1026.8 269.3 1029.6 273.3 1032.4 277.5 1035.1 281.7 1037.6 285.9 1040.1 290.4 1042.6 295.1 1045 299.8 1047.3 304.4 1049.6 308.9 1051.8 313.3 1053.9 317.8 1055.9 322.4 1057.8 327 1059.5 331.8 1061 336.6 1062.4 341.5 1063.7 346.4 1064.7 351.5 1065.6 356.8 1066.3 362.4 1066.8 367.9 1067.1 373.1 1067.4 377.6 1067.4 381.2 1067.4 384.2 1067.2 386.7 1066.9 389.1 1066.5 391.6 1065.9 394.1 1065.2 396.7 1064.4 399.1 1063.7 401.5 1063.3 403.8 1063.3 406.1 1063.6 408.5 1063.9 410.7 1064.4 412.7 1064.7 414.2 1065 415.1 1065.3 415.2 1065.6 415.2 1066 415.5 1066.6 416.6 1067.5 418.5 1068.6 421.1 1069.9 424.1 1071.2 427.1 1072.4 429.9 1071.5 431.2 1070.5 432.6 1069.5 433.9 1068.6 435.2 1067.8 436.3 1067 437.4 1066.2 438.3 1065.5 439.2 1064.8 440.1 1064.3 441 1063.8 442 1063.4 443.1 1063 444.1 1062.7 445 1062.5 445.6M1021.5 273.8L1023.9 277.1 1026.2 280.2 1028.6 283.3 1031 286.7 1033.3 290.4 1035.8 294.5 1038.3 299 1040.8 303.6 1043.3 308.3 1045.6 313.1 1047.7 317.9 1049.8 322.8 1051.8 327.8 1053.6 332.7 1055.2 337.5 1056.4 342.1 1057.5 346.7 1058.3 351.2 1059 355.7 1059.5 360.2 1059.9 364.9 1060 369.8 1060.1 374.7 1060.1 379.1 1060 382.8 1060 385.7 1060 387.9 1059.9 389.6 1059.7 391.4 1059.5 393.3 1059.2 395.5 1058.9 397.8 1058.5 400.1 1058.1 402.4 1057.8 404.6 1056.7 402.5 1055.8 400.5 1054.8 398.4 1053.7 396.1 1052.5 393.3 1051.3 390.1 1049.9 386.5 1048.5 382.6 1047 378.4 1045.6 374.1 1044 369.7 1042.5 365 1040.9 360.1 1039.3 355 1037.7 349.7 1036.1 344.1 1034.5 338.1 1032.9 332 1031.3 326 1029.9 320.1 1028.5 314.2 1027.1 308.3 1025.8 302.5 1024.7 297.1 1023.8 292.1 1023.1 287.9 1022.6 284.1 1022.2 280.7 1021.9 277.3zM1019.7 288.7L1019.6 291.7 1019.3 294.5 1019.1 297.5 1019 300.7 1019 304.4 1019.3 308.7 1019.6 313.6 1020 318.7 1020.5 323.9 1021.1 328.8 1021.8 333.5 1022.6 338.1 1023.5 342.7 1024.5 347.2 1025.5 351.5 1026.6 355.6 1027.8 359.6 1029 363.5 1030.3 367.2 1031.6 370.6 1033 373.9 1034.5 377 1036 379.9 1037.4 382.4 1038.6 384.6 1039.5 386.3 1040.2 387.6 1040.7 388.6 1041.2 389.3 1041.7 389.8 1042.2 390.1 1042.7 390.2 1043.2 390 1043.5 389.8 1043.8 389.5 1044.1 389.2 1044.3 389 1044.4 388.6 1044.4 388 1044.2 387.2 1043.7 386.1 1043 384.9 1042.2 383.5 1041.3 381.6 1040.3 379.4 1039.3 376.5 1038 373.2 1036.8 369.6 1035.5 365.8 1034.2 361.9 1033 358 1031.7 354 1030.4 349.8 1029.2 345.5 1028.1 341 1027.1 336.2 1026.2 331.1 1025.3 326 1024.5 321.1 1023.8 316.6 1023.1 312.5 1022.5 308.8 1022 305.3 1021.6 302.1 1021.1 299.1 1020.8 296.6 1020.5 294.4 1020.2 292.5 1020 290.6zM1055.2 446.4L1052.7 446 1050.2 445.7 1047.7 445.3 1045.2 445 1042.8 444.5 1040.5 444 1038.2 443.5 1036 442.9 1033.6 442.2 1031.1 441.6 1028.4 440.9 1025.5 440 1022.5 439.2 1019.5 438.5 1016.5 437.9 1013.7 437.5 1011.1 437.2 1008.3 437.1 1005.3 437 1002 437.2 998.2 437.6 994.1 438.1 989.7 438.8 985 439.7 980.1 440.9 974.7 442.3 968.9 444.1 962.9 446 956.9 448.1 950.9 450.3 945 452.8 938.9 455.4 932.9 458.1 927.1 460.9 921.8 463.5 916.7 466 911.9 468.4 907.4 470.8 903.3 473.1 899.9 475.1 897.1 477.1 895 478.9 893.3 480.5 891.9 481.9 890.8 483.2 890 484.1 889.6 484.7 889.5 485.2 889.6 485.6 889.7 486.1 889.9 486.6 890.2 487.1 890.7 487.5 891.3 487.9 891.9 488.3 892.2 488.5 892.5 488.6 892.9 488.6 893.8 488.6 895.5 488.7 898.2 488.8 901.7 489 905.7 489.1 910 489.2 914.5 489.3 919 489.3 923.9 489.3 928.9 489.3 934.1 489.1 939.3 488.6 944.4 487.7 949.6 486.5 954.9 485.2 960.2 483.8 965.5 482.4 970.8 481 976.2 479.6 981.6 478.1 986.8 476.6 991.8 475.1 996.5 473.7 1001.2 472.2 1005.7 470.8 1009.9 469.3 1013.6 467.8 1016.9 466.4 1019.7 464.9 1022.2 463.4 1024.5 461.9 1026.8 460.6 1028.8 459.2 1030.6 458 1032.3 456.8 1033.9 455.7 1035.5 454.7 1037 453.9 1038.2 453.3 1039.5 452.7 1041 452.3 1042.8 451.8 1045.1 451.3 1047.7 450.9 1050.5 450.6 1053.3 450.3 1055.9 450.1 1058.5 449.9 1061.3 449.9 1063.8 450 1066 450 1067.6 450.1M903.5 479.8L907 478.1 910.3 476.4 913.7 474.7 917.4 472.8 921.8 470.8 926.9 468.4 932.6 465.7 938.7 462.9 944.9 460.2 950.9 457.6 956.9 455.2 962.9 452.8 968.9 450.5 974.7 448.4 980.1 446.7 985.1 445.3 989.8 444.2 994.2 443.4 998.3 442.8 1002 442.3 1005.3 442.1 1008.3 442.1 1010.9 442.2 1013.2 442.5 1015.1 442.8 1016.5 443.1 1017.5 443.4 1018.2 443.9 1018.6 444.3 1018.7 444.8 1018.7 445.3 1018.6 445.8 1018.1 446.3 1017.2 446.8 1015.8 447.1 1013.9 447.3 1011.4 447.3 1008.6 447.3 1005.4 447.4 1002 447.7 998.2 448.2 994.1 448.8 989.7 449.6 985.1 450.5 980.1 451.8 974.7 453.4 968.9 455.4 962.9 457.5 956.9 459.8 950.9 462 944.9 464.3 938.7 466.8 932.6 469.3 926.9 471.7 921.8 473.7 917.4 475.3 913.7 476.5 910.3 477.6 907 478.7zM902.1 484.2L905.8 483 909.5 481.9 913.2 480.8 917.2 479.5 921.8 478.1 927 476.2 932.7 474.2 938.8 472 944.9 469.9 950.9 467.8 956.8 466 962.6 464.1 968.4 462.3 974.3 460.6 980.1 459.1 986 457.7 991.9 456.4 997.8 455.2 1003.7 454.2 1009.3 453.3 1014.6 452.5 1019.7 452 1024.7 451.5 1029.7 451.1 1034.8 450.6 1033.6 452 1032.5 453.4 1031.4 454.8 1030 456.2 1028.2 457.6 1025.9 459.1 1023.3 460.5 1020.4 461.9 1017.1 463.4 1013.6 464.9 1009.8 466.5 1005.6 468.2 1001.2 469.8 996.5 471.4 991.8 472.9 986.8 474.4 981.6 475.7 976.2 477.1 970.8 478.3 965.5 479.5 960.2 480.7 954.9 481.9 949.6 482.9 944.4 483.9 939.3 484.6 934 485.1 928.6 485.4 923.4 485.6 918.6 485.7 914.5 485.6 911.2 485.5 908.6 485.2 906.4 484.9 904.3 484.5zM1088 454L1088.8 453.8 1089.9 453.6 1091.2 453.4 1092.6 453.1 1093.8 453 1094.3 452.5 1094.1 451.5 1094.3 450.9 1095.8 451.2 1099.7 453 1107.3 457.2 1118.1 463.4 1129.9 470.3 1140.5 476.6 1147.8 481 1151.1 483.1 1151.9 483.7 1151.1 483.5 1149.9 483.1 1149.3 483.2 1149.2 483.6 1148.9 484.1 1148.6 484.6 1148.2 485 1147.8 485.3 1148.2 485.9 1149.2 486.8 1149.9 487.4 1149 487.1 1145.6 485.3 1138.1 481.2 1127.4 475.1 1115.4 468.4 1104.5 462.4 1096.8 458.4 1092.8 456.9 1091.3 456.9 1091.2 457.9 1091.4 459.1 1090.9 459.8 1089.7 460 1088.3 460.1 1087 460.2 1085.9 460.2 1085.1 460.3" stroke-width="1.050"/><text transform="translate(978.1 402.3) rotate(26.8) scale(1.5 1)" font-family="Liberation Serif,serif" font-style="italic" font-weight="bold" font-size="36" letter-spacing="0" stroke-width=".9">home</text></g><g transform="translate(472 -6.8)"><rect x="794.5" y="87.3" width="407.1" height="893.3" fill="#babebd"/><rect x="822.5" y="114.5" width="352.1" height="862.5" fill="#bec3c2"/><g fill="none" stroke="#959998" stroke-width="1"><rect x="794.5" y="87.3" width="407.1" height="893.3" stroke="#8c908f" stroke-width="1.300"/><path d="M828.500 87.3V980.6M1168.500 87.3V980.6"/><path d="M828.500 120H1168.500"/><path d="M1168.1 114.5V977"/><path d="M842.6 713.4L842.6 291 842.9 280.8 843.9 270.6 845.6 260.6 847.9 250.6 850.9 240.9 854.5 231.3 858.7 222 863.5 213 868.9 204.3 874.8 196 881.3 188.1 888.3 180.7 895.7 173.7 903.6 167.2 911.9 161.3 920.6 155.9 929.6 151.1 938.9 146.9 948.5 143.3 958.2 140.3 968.2 138 978.2 136.3 988.4 135.3 998.6 135 1008.8 135.3 1019 136.3 1029 138 1039 140.3 1048.7 143.3 1058.3 146.9 1067.6 151.1 1076.6 155.9 1085.3 161.3 1093.6 167.2 1101.5 173.7 1108.9 180.7 1115.9 188.1 1122.4 196 1128.3 204.3 1133.7 213 1138.5 222 1142.7 231.3 1146.3 240.9 1149.3 250.6 1151.6 260.6 1153.3 270.6 1154.3 280.8 1154.6 291 1154.6 713.4z"/><path d="M847.4 709.2L847.4 291 847.7 281.1 848.7 271.3 850.3 261.5 852.6 251.9 855.4 242.4 858.9 233.1 863 224.1 867.7 215.4 872.9 207 878.6 199 884.9 191.3 891.7 184.1 898.9 177.3 906.6 171 914.6 165.3 923 160.1 931.7 155.4 940.7 151.3 950 147.8 959.5 145 969.1 142.7 978.9 141.1 988.7 140.1 998.6 139.8 1008.5 140.1 1018.3 141.1 1028.1 142.7 1037.7 145 1047.2 147.8 1056.5 151.3 1065.5 155.4 1074.2 160.1 1082.6 165.3 1090.6 171 1098.3 177.3 1105.5 184.1 1112.3 191.3 1118.6 199 1124.3 207 1129.5 215.4 1134.2 224.1 1138.3 233.1 1141.8 242.4 1144.6 251.9 1146.9 261.5 1148.5 271.3 1149.5 281.1 1149.6 291 1149.6 709.2z"/><rect x="842.6" y="754.6" width="312" height="202.7"/><rect x="847.4" y="758.5" width="302.2" height="195"/><path d="M1174.6 114.5L822.5 545.800L1174.6 977" stroke="#a4a8a7" stroke-width=".8"/></g><rect x="822.5" y="114.5" width="351.1" height="862.5" fill="none" stroke="#1c1cf0" stroke-width="1.300"/><path d="M815 923.400H1179.500" stroke="#111" stroke-width="1.100"/><g fill="none" stroke="#0a0a0a" stroke-width=".9"><path d="M978.6 407.4L978.2 406.8 977.6 406.3 977.1 405.7 976.7 405.1 976.5 404.4 976.6 403.6 976.9 402.7 977.3 401.7 977.7 400.8 977.8 400 977.7 399.2 977.4 398.6 977.1 397.9 976.6 397.2 976 396.5 975.3 395.7 974.4 394.8 973.5 394 972.5 393.2 971.7 392.6 971 392.2 970.6 392 970.1 391.8 969.4 391.8 968.2 391.7 966.4 391.7 964.1 391.6 961.6 391.7 959.1 391.8 956.8 392.1 954.9 392.6 953.2 393.3 951.5 394.1 949.8 394.9 948.1 395.6 946.4 396.4 944.8 397.2 943.1 398 941.3 398.6 939.4 399.1 937.3 399.4 934.9 399.5 932.5 399.5 930.2 399.3 928.1 399.1 926.2 398.8 924.5 398.4 922.8 397.9 921.2 397.3 919.3 396.5 917.4 395.6 915.4 394.5 913.3 393.3 911.2 391.9 908.9 390.4 906.4 388.7 903.6 386.8 900.8 384.8 898.2 382.8 895.8 380.8 893.8 378.9 892 377.1 890.3 375.2 888.7 373.3 887.1 371.2 885.4 368.9 883.8 366.4 882.1 363.8 880.6 361.3 879.2 359 878 357 876.8 355 875.7 353.3 874.8 351.6 874 350.2 873.5 349.2 873.3 348.6 873.2 348 872.9 347.3 872.3 346.1 871.2 344.5 869.8 342.7 868.3 340.6 866.7 338.2 865.3 335.7 864.1 332.8 862.9 329.5 861.8 326.1 860.9 322.8 860.1 320 859.6 317.5 859.2 315.3 859.1 313.3 859 311.5 859.1 310 859.3 308.8 859.6 307.9 860.1 307.3 860.5 306.7 861 306 861.7 306.5 862.5 306.9 863.3 307.4 864.1 307.8 864.9 308.2 865.8 308.6 866.7 309 867.6 309.4 868.6 309.8 869.7 310 870.9 310 872.1 310 873.4 309.9 874.9 309.8 876.7 309.5 878.8 309.1 881.3 308.6 883.9 308 886.5 307.4 888.9 307.1 891 306.9 892.9 306.7 894.9 306.7 896.9 306.8 899.3 307.1 902.1 307.5 905.2 308 908.4 308.6 911.7 309.4 915 310.4 918.4 311.5 922 312.8 925.6 314.3 929.1 315.8 932.5 317.4 935.8 319 939.1 320.7 942.4 322.5 945.4 324.3 948.2 326.1 950.7 328 953 329.9 955 331.9 956.9 333.8 958.6 335.7 960.2 337.5 961.6 339.2 962.8 340.8 963.8 342.6 964.8 344.4 965.5 346.4 966 348.5 966.4 350.7 966.8 352.8 967.4 354.9 968 356.9 968.8 358.9 969.5 360.9 970.2 362.7 970.9 364.5 971.4 365.9 971.8 367.2 972.2 368.4 972.5 369.7 973 371.2 973.5 373.1 974 375.2 974.5 377.4 975 379.6 975.6 381.7 976.2 383.8 976.8 386 977.4 388 978.1 389.9 978.6 391.3 979.2 392.1 979.7 392.5 980.2 392.7 980.7 392.8 981.3 393 982.5 393 983.7 393 984.9 393 986.1 393 987.4 393 992.9 387.3 998.8 381.2 1004.5 375.3 1009.5 370.2 1013.1 366.6 1015.1 364.8 1015.7 364.4 1015.5 364.8 1015.2 365.5 1015.2 366 1015.6 366.2 1016 366.5 1016.3 366.9 1016.6 367.3 1016.8 367.7 1017.3 367.7 1018 367.3 1018.5 367.1 1018.2 367.6 1016.6 369.5 1013.3 373 1008.6 377.8 1003.1 383.4 997.5 389.1 992.2 394.5M867.1 315.2L867.8 315.2 868.5 315.2 869.2 315.2 869.9 315.2 870.6 315.2 870.8 316.1 870.8 316.8 871 317.7 871.4 318.7 872.3 320 873.8 321.7 875.7 323.8 878 326.1 880.4 328.4 882.8 330.5 885.2 332.3 887.9 334.2 890.6 336 893.3 337.6 895.9 339.2 898.4 340.6 900.9 341.9 903.3 343.1 905.7 344.2 908.1 345.3 910.3 346.3 912.5 347.3 914.7 348.2 916.8 349.1 919 350.1 917.2 350.7 915.4 351.4 913.6 352 911.7 352.6 909.8 353.1 907.8 353.5 905.7 353.8 903.6 354.1 901.5 354.2 899.3 354.3 897.2 354.3 895.1 354.2 893 354 890.9 353.7 888.9 353.1 886.9 352.3 884.9 351.3 883 350.1 881.1 348.7 879.3 347 877.5 345.1 875.8 342.8 874.2 340.4 872.7 338 871.4 335.7 870.4 333.5 869.6 331.4 869 329.3 868.4 327.3 868 325.2 867.6 323.2 867.4 321.2 867.3 319.2 867.2 317.2zM878.4 316.5L880.4 315.9 882.3 315.3 884.2 314.7 886.3 314.2 888.9 313.9 891.9 313.7 895.4 313.5 899 313.6 902.7 313.8 906.3 314.3 909.9 315.2 913.5 316.4 917.1 317.8 920.6 319.3 923.8 320.9 926.7 322.4 929.5 324.1 932.1 325.9 934.5 327.7 936.8 329.6 939 331.5 941 333.6 942.9 335.7 944.7 337.9 946.4 340 948.2 342.3 949.8 344.6 951.4 346.9 952.9 349.2 954.3 351.4 955.6 353.6 956.8 355.8 957.8 358 958.8 360 959.5 361.8 960 363.3 960.3 364.6 960.5 365.7 960.6 366.8 960.8 367.9 960.4 367.1 960.1 366.4 959.7 365.6 959.3 364.7 958.6 363.6 957.8 362.2 956.9 360.5 955.8 358.7 954.7 356.8 953.4 354.9 952 352.9 950.5 350.7 949 348.5 947.3 346.4 945.6 344.4 943.8 342.5 942 340.7 940.1 338.9 938.1 337.2 936 335.7 933.8 334.3 931.4 332.9 929 331.7 926.5 330.6 923.8 329.6 920.8 328.7 917.7 327.9 914.5 327.3 911.2 326.7 908.1 326.1 905 325.6 902 325.2 899 324.9 896.1 324.5 893.2 323.9 890.3 323.2 887.3 322.3 884.5 321.3 882 320.4 880.2 319.5 879.1 318.9 878.6 318.2 878.6 317.7 878.6 317.1zM879.3 322.2L881.5 323.1 883.6 324 885.8 325 888.1 325.8 890.6 326.5 893.5 327 896.5 327.3 899.7 327.5 903 327.8 906.3 328.3 909.8 328.9 913.4 329.7 917 330.5 920.5 331.5 923.8 332.6 926.7 333.9 929.5 335.3 932.1 336.7 934.5 338.3 936.8 340 939 341.9 940.9 343.9 942.8 345.9 944.6 348 946.4 350.1 944.6 349.7 942.8 349.3 940.9 348.9 939 348.6 936.8 348.3 934.5 348.2 931.9 348.2 929.2 348.2 926.4 348.1 923.8 347.9 921.1 347.5 918.5 347 915.9 346.4 913.3 345.7 910.7 344.8 908.1 343.8 905.4 342.6 902.8 341.2 900.2 339.8 897.6 338.3 895 336.7 892.4 334.9 889.8 333.1 887.4 331.3 885.4 329.6 883.8 328 882.5 326.5 881.4 325.1 880.4 323.6zM885.4 354.5L887.1 355.1 888.7 355.7 890.3 356.4 892 356.9 894.1 357.3 896.4 357.5 899 357.6 901.8 357.6 904.5 357.4 907.1 357.1 909.7 356.5 912.1 355.6 914.6 354.6 917 353.7 919.3 352.9 921.7 352.3 923.9 351.7 926.2 351.3 928.4 350.9 930.7 350.7 933 350.7 935.4 350.7 937.7 350.9 940 351.2 942 351.6 943.8 352.2 945.5 352.8 947 353.6 948.5 354.5 949.9 355.5 951.3 356.6 952.6 357.7 953.9 359 955 360.3 956 361.6 956.7 363.1 957.2 364.7 957.5 366.3 957.8 367.9 957.9 369.5 957.9 370.9 957.8 372.4 957.5 373.8 957.3 375.2 957 376.5 956.8 377.7 956.5 378.8 956.2 379.9 955.8 381 955.5 382.1 955 381 954.6 380 954.1 378.9 953.5 377.7 952.5 376.5 951.1 375 949.5 373.3 947.7 371.6 945.7 370 943.8 368.6 941.9 367.4 940 366.4 938 365.5 935.8 364.8 933.3 364.2 930.3 363.9 927 363.9 923.5 363.9 920 364.1 916.7 364.2 913.7 364.5 910.8 364.9 908 365.2 905.4 365.5 902.8 365.5 900.3 365.4 897.8 365.1 895.5 364.6 893.3 363.9 891.4 362.9 889.9 361.6 888.7 360 887.6 358.1 886.5 356.3zM884.6 358.8L884.9 359.3 885.1 359.8 885.3 360.3 885.9 360.9 887.1 361.6 889 362.7 891.3 364.1 894.1 365.6 897.1 366.8 900.2 367.7 903.4 368.1 906.9 368.2 910.5 368.1 914.2 367.9 917.6 367.7 921 367.5 924.3 367.2 927.5 367 930.6 366.8 933.3 367 935.6 367.6 937.7 368.4 939.5 369.3 941.2 370.5 942.9 371.7 944.7 373 946.4 374.5 948.1 376.2 949.6 377.7 950.7 379.1 951.6 380.2 952.3 381.2 952.7 382.1 952.9 382.9 953 383.9 952.9 384.8 952.7 385.8 952.2 386.8 951.6 387.7 950.7 388.7 949.7 389.6 948.4 390.5 946.9 391.5 945.3 392.3 943.8 393 942.1 393.7 940.4 394.2 938.6 394.7 936.8 395 935 395.2 933.4 395.2 931.8 395.2 930.1 394.9 928.3 394.5 926.3 393.9 924 393 921.4 392 918.7 390.7 916 389.3 913.2 387.8 910.4 386.1 907.5 384.2 904.5 382.3 901.8 380.2 899.3 378.2 897.2 376.1 895.3 374 893.6 371.8 892.1 369.7 890.6 367.7 889.2 365.9 888 364.1 886.8 362.3 885.7 360.6zM965.6 366.4L966.2 367.7 966.8 369.1 967.5 370.4 968.1 371.7 968.6 373 969.2 374.2 969.8 375.5 970.3 376.7 970.7 377.9 970.8 379.1 970.6 380.2 970.2 381.3 969.6 382.4 969 383.4 968.2 384.3 967.3 385.1 966.4 385.7 965.3 386.3 964.1 386.9 963 387.4 961.7 387.8 960.3 388.1 958.9 388.4 957.5 388.6 956.1 388.9 956.5 388.2 956.9 387.5 957.3 386.8 957.7 386 958.2 385.2 958.7 384.2 959.3 383.3 960 382.2 960.6 381.1 961.2 379.9 961.8 378.6 962.3 377.3 962.9 375.8 963.4 374.4 963.8 373 964.2 371.6 964.6 370.3 964.9 369 965.2 367.7zM1062.5 427L1062.8 426.5 1063.3 426 1063.7 425.5 1063.7 424.8 1063.1 423.5 1061.8 421.8 1059.9 419.7 1057.6 417.3 1055.1 414.7 1052.7 411.9 1050 409.1 1047.2 406 1044.3 402.8 1041.4 399.3 1038.7 395.6 1036.1 391.6 1033.6 387.1 1031.2 382.5 1029 377.9 1027.1 373.5 1025.2 368.6 1023.5 363 1022 357.8 1021.2 354.3 1021.3 353.8 1022.8 357.7 1025.8 365.4 1029.1 374.4 1031.9 382.2 1033.3 386.3 1033 386.2 1031.6 383.3 1029.5 378.8 1027.3 373.6 1025.5 368.9 1024.1 364.5 1022.8 359.8 1021.6 354.8 1020.4 349.7 1019.4 344.5 1018.5 339.1 1017.7 333.5 1017.1 327.8 1016.5 322.1 1015.9 316.6 1015.4 311.2 1015 305.8 1014.7 300.5 1014.4 295.4 1014.2 290.4 1014 285.4 1014 280.2 1014 275.4 1014 271.1 1014.2 267.7 1014.4 265.6 1014.7 264.3 1015 263.7 1015.4 263.3 1015.9 262.8 1016.4 262.3 1017.1 261.9 1017.7 261.6 1018.4 261.5 1019 261.5 1019.5 261.4 1019.9 261.2 1020.3 261.3 1021.1 261.9 1022.4 263.4 1024.3 265.9 1026.8 269.3 1029.6 273.3 1032.4 277.5 1035.1 281.7 1037.6 285.9 1040.1 290.4 1042.6 295.1 1045 299.8 1047.3 304.4 1049.6 308.9 1051.8 313.3 1053.9 317.8 1055.9 322.4 1057.8 327 1059.5 331.8 1061 336.6 1062.4 341.5 1063.7 346.4 1064.7 351.5 1065.6 356.8 1066.3 362.4 1066.8 367.9 1067.1 373.1 1067.4 377.6 1067.4 381.2 1067.4 384.2 1067.2 386.7 1066.9 389.1 1066.5 391.6 1065.9 394.1 1065.2 396.7 1064.4 399.1 1063.7 401.5 1063.3 403.8 1063.3 406.1 1063.6 408.5 1063.9 410.7 1064.4 412.7 1064.7 414.2 1065 415.1 1065.3 415.2 1065.6 415.2 1066 415.5 1066.6 416.6 1067.5 418.5 1068.6 421.1 1069.9 424.1 1071.2 427.1 1072.4 429.9 1071.5 431.2 1070.5 432.6 1069.5 433.9 1068.6 435.2 1067.8 436.3 1067 437.4 1066.2 438.3 1065.5 439.2 1064.8 440.1 1064.3 441 1063.8 442 1063.4 443.1 1063 444.1 1062.7 445 1062.5 445.6M1021.5 273.8L1023.9 277.1 1026.2 280.2 1028.6 283.3 1031 286.7 1033.3 290.4 1035.8 294.5 1038.3 299 1040.8 303.6 1043.3 308.3 1045.6 313.1 1047.7 317.9 1049.8 322.8 1051.8 327.8 1053.6 332.7 1055.2 337.5 1056.4 342.1 1057.5 346.7 1058.3 351.2 1059 355.7 1059.5 360.2 1059.9 364.9 1060 369.8 1060.1 374.7 1060.1 379.1 1060 382.8 1060 385.7 1060 387.9 1059.9 389.6 1059.7 391.4 1059.5 393.3 1059.2 395.5 1058.9 397.8 1058.5 400.1 1058.1 402.4 1057.8 404.6 1056.7 402.5 1055.8 400.5 1054.8 398.4 1053.7 396.1 1052.5 393.3 1051.3 390.1 1049.9 386.5 1048.5 382.6 1047 378.4 1045.6 374.1 1044 369.7 1042.5 365 1040.9 360.1 1039.3 355 1037.7 349.7 1036.1 344.1 1034.5 338.1 1032.9 332 1031.3 326 1029.9 320.1 1028.5 314.2 1027.1 308.3 1025.8 302.5 1024.7 297.1 1023.8 292.1 1023.1 287.9 1022.6 284.1 1022.2 280.7 1021.9 277.3zM1019.7 288.7L1019.6 291.7 1019.3 294.5 1019.1 297.5 1019 300.7 1019 304.4 1019.3 308.7 1019.6 313.6 1020 318.7 1020.5 323.9 1021.1 328.8 1021.8 333.5 1022.6 338.1 1023.5 342.7 1024.5 347.2 1025.5 351.5 1026.6 355.6 1027.8 359.6 1029 363.5 1030.3 367.2 1031.6 370.6 1033 373.9 1034.5 377 1036 379.9 1037.4 382.4 1038.6 384.6 1039.5 386.3 1040.2 387.6 1040.7 388.6 1041.2 389.3 1041.7 389.8 1042.2 390.1 1042.7 390.2 1043.2 390 1043.5 389.8 1043.8 389.5 1044.1 389.2 1044.3 389 1044.4 388.6 1044.4 388 1044.2 387.2 1043.7 386.1 1043 384.9 1042.2 383.5 1041.3 381.6 1040.3 379.4 1039.3 376.5 1038 373.2 1036.8 369.6 1035.5 365.8 1034.2 361.9 1033 358 1031.7 354 1030.4 349.8 1029.2 345.5 1028.1 341 1027.1 336.2 1026.2 331.1 1025.3 326 1024.5 321.1 1023.8 316.6 1023.1 312.5 1022.5 308.8 1022 305.3 1021.6 302.1 1021.1 299.1 1020.8 296.6 1020.5 294.4 1020.2 292.5 1020 290.6zM1055.2 446.4L1052.7 446 1050.2 445.7 1047.7 445.3 1045.2 445 1042.8 444.5 1040.5 444 1038.2 443.5 1036 442.9 1033.6 442.2 1031.1 441.6 1028.4 440.9 1025.5 440 1022.5 439.2 1019.5 438.5 1016.5 437.9 1013.7 437.5 1011.1 437.2 1008.3 437.1 1005.3 437 1002 437.2 998.2 437.6 994.1 438.1 989.7 438.8 985 439.7 980.1 440.9 974.7 442.3 968.9 444.1 962.9 446 956.9 448.1 950.9 450.3 945 452.8 938.9 455.4 932.9 458.1 927.1 460.9 921.8 463.5 916.7 466 911.9 468.4 907.4 470.8 903.3 473.1 899.9 475.1 897.1 477.1 895 478.9 893.3 480.5 891.9 481.9 890.8 483.2 890 484.1 889.6 484.7 889.5 485.2 889.6 485.6 889.7 486.1 889.9 486.6 890.2 487.1 890.7 487.5 891.3 487.9 891.9 488.3 892.2 488.5 892.5 488.6 892.9 488.6 893.8 488.6 895.5 488.7 898.2 488.8 901.7 489 905.7 489.1 910 489.2 914.5 489.3 919 489.3 923.9 489.3 928.9 489.3 934.1 489.1 939.3 488.6 944.4 487.7 949.6 486.5 954.9 485.2 960.2 483.8 965.5 482.4 970.8 481 976.2 479.6 981.6 478.1 986.8 476.6 991.8 475.1 996.5 473.7 1001.2 472.2 1005.7 470.8 1009.9 469.3 1013.6 467.8 1016.9 466.4 1019.7 464.9 1022.2 463.4 1024.5 461.9 1026.8 460.6 1028.8 459.2 1030.6 458 1032.3 456.8 1033.9 455.7 1035.5 454.7 1037 453.9 1038.2 453.3 1039.5 452.7 1041 452.3 1042.8 451.8 1045.1 451.3 1047.7 450.9 1050.5 450.6 1053.3 450.3 1055.9 450.1 1058.5 449.9 1061.3 449.9 1063.8 450 1066 450 1067.6 450.1M903.5 479.8L907 478.1 910.3 476.4 913.7 474.7 917.4 472.8 921.8 470.8 926.9 468.4 932.6 465.7 938.7 462.9 944.9 460.2 950.9 457.6 956.9 455.2 962.9 452.8 968.9 450.5 974.7 448.4 980.1 446.7 985.1 445.3 989.8 444.2 994.2 443.4 998.3 442.8 1002 442.3 1005.3 442.1 1008.3 442.1 1010.9 442.2 1013.2 442.5 1015.1 442.8 1016.5 443.1 1017.5 443.4 1018.2 443.9 1018.6 444.3 1018.7 444.8 1018.7 445.3 1018.6 445.8 1018.1 446.3 1017.2 446.8 1015.8 447.1 1013.9 447.3 1011.4 447.3 1008.6 447.3 1005.4 447.4 1002 447.7 998.2 448.2 994.1 448.8 989.7 449.6 985.1 450.5 980.1 451.8 974.7 453.4 968.9 455.4 962.9 457.5 956.9 459.8 950.9 462 944.9 464.3 938.7 466.8 932.6 469.3 926.9 471.7 921.8 473.7 917.4 475.3 913.7 476.5 910.3 477.6 907 478.7zM902.1 484.2L905.8 483 909.5 481.9 913.2 480.8 917.2 479.5 921.8 478.1 927 476.2 932.7 474.2 938.8 472 944.9 469.9 950.9 467.8 956.8 466 962.6 464.1 968.4 462.3 974.3 460.6 980.1 459.1 986 457.7 991.9 456.4 997.8 455.2 1003.7 454.2 1009.3 453.3 1014.6 452.5 1019.7 452 1024.7 451.5 1029.7 451.1 1034.8 450.6 1033.6 452 1032.5 453.4 1031.4 454.8 1030 456.2 1028.2 457.6 1025.9 459.1 1023.3 460.5 1020.4 461.9 1017.1 463.4 1013.6 464.9 1009.8 466.5 1005.6 468.2 1001.2 469.8 996.5 471.4 991.8 472.9 986.8 474.4 981.6 475.7 976.2 477.1 970.8 478.3 965.5 479.5 960.2 480.7 954.9 481.9 949.6 482.9 944.4 483.9 939.3 484.6 934 485.1 928.6 485.4 923.4 485.6 918.6 485.7 914.5 485.6 911.2 485.5 908.6 485.2 906.4 484.9 904.3 484.5zM1088 454L1088.8 453.8 1089.9 453.6 1091.2 453.4 1092.6 453.1 1093.8 453 1094.3 452.5 1094.1 451.5 1094.3 450.9 1095.8 451.2 1099.7 453 1107.3 457.2 1118.1 463.4 1129.9 470.3 1140.5 476.6 1147.8 481 1151.1 483.1 1151.9 483.7 1151.1 483.5 1149.9 483.1 1149.3 483.2 1149.2 483.6 1148.9 484.1 1148.6 484.6 1148.2 485 1147.8 485.3 1148.2 485.9 1149.2 486.8 1149.9 487.4 1149 487.1 1145.6 485.3 1138.1 481.2 1127.4 475.1 1115.4 468.4 1104.5 462.4 1096.8 458.4 1092.8 456.9 1091.3 456.9 1091.2 457.9 1091.4 459.1 1090.9 459.8 1089.7 460 1088.3 460.1 1087 460.2 1085.9 460.2 1085.1 460.3"/><text transform="translate(978.1 402.3) rotate(26.8) scale(1.5 1)" font-family="Liberation Serif,serif" font-style="italic" font-weight="bold" font-size="36" letter-spacing="0">home</text></g></g><path d="M1267.5 76V1014M1328.5 76V1014M1389.5 76V1014M1450.5 76V1014M1511.5 76V1014M1572.5 76V1014M1633.5 76V1014M1694.5 76V1014M1263.0 120.5H1697M1263.0 181.5H1697M1263.0 242.5H1697M1263.0 303.5H1697M1263.0 364.5H1697M1263.0 425.5H1697M1263.0 486.5H1697M1263.0 547.5H1697M1263.0 608.5H1697M1263.0 669.5H1697M1263.0 730.5H1697M1263.0 791.5H1697M1263.0 852.5H1697M1263.0 913.5H1697M1263.0 974.5H1697" fill="none" stroke="#a9adac" stroke-width="1" stroke-dasharray="1 3" opacity="0.9"/></svg></div>
<div id="side" class="abs"><div class="abs" style="left:4px;top:6px;width:129px;height:21px;background:#f6f6f6;border:1px solid #e3e3e3;border-bottom:1px solid #8a8a8a;border-radius:2px"></div><span class="t" style="left:8.5px;top:9px;font-size:11px;letter-spacing:-.36px;width:123px;overflow:hidden">GRAF_PART\INCISIONI_<span style="color:#e33">:</span></span><div class="abs" style="left:137.5px;top:6.5px;width:18px;height:20px;background:#fbfbfb;border:1px solid #dcdcdc;border-radius:3px"></div><svg class="abs" style="left:139px;top:10.5px" width="15" height="12" viewBox="0 0 15 12" ><path d="M.8 1.200h13.400L7.500 10.800z" fill="#6c6c6c" stroke="#2a2a2a" stroke-width="1.300" stroke-linejoin="round"/><path d="M3.500 2.800h8L7.500 8z" fill="#8a8a8a"/></svg><div class="abs" style="left:166.5px;top:6px;width:51px;height:21px;background:#fbfbfb;border:1px solid #d9d9d9;border-radius:3px"></div><div class="abs" style="left:170.3px;top:10.4px;width:26.500px;height:12px;background:#ff0000"></div><div class="abs" style="left:202px;top:9.5px;width:12.500px;height:14px;background:#fdfdfd;border:1px solid #d5d5d5;border-radius:2px"></div><svg class="abs" style="left:204px;top:14.5px" width="9" height="6" viewBox="0 0 9 6" ><path d="M.8 .8L4.500 4.500L8.200 .8" fill="none" stroke="#444" stroke-width="1"/></svg><div class="abs" style="left:2.5px;top:33px;width:218px;height:260px;border:1px solid #e2e2e2;border-bottom:1px solid #8f8f8f;background:#f1f1f1"></div><div class="abs" style="left:6.4px;top:37.5px;width:47px;height:33px;background:#fdfdfd;border:1px solid #d6d6d6;border-radius:4px"></div><svg class="abs" style="left:6.4px;top:37.5px" width="47" height="33" viewBox="0 0 47 33" ><path d="M11 27L36 11" stroke="#262626" stroke-width="1.600"/><rect x="9" y="25" width="4" height="4" rx="1" fill="#a47e82" stroke="#8d6f72" stroke-width=".4"/><rect x="34" y="9" width="4" height="4" rx="1" fill="#a47e82" stroke="#8d6f72" stroke-width=".4"/></svg><div class="abs" style="left:60.3px;top:37.5px;width:47px;height:33px;background:#fdfdfd;border:1px solid #d6d6d6;border-radius:4px"></div><svg class="abs" style="left:60.3px;top:37.5px" width="47" height="33" viewBox="0 0 47 33" ><path d="M10 23L34 8.500" stroke="#8a3a30" stroke-width="1"/><path d="M11.500 26L36 11" stroke="#262626" stroke-width="1.600"/><path d="M11 26.500H38" stroke="#8a3a30" stroke-width="1"/><path d="M21 20.500a8 8 0 0 1 1.200 6" fill="none" stroke="#8a3a30" stroke-width=".9"/><rect x="9" y="25" width="4" height="4" rx="1" fill="#a47e82" stroke="#8d6f72" stroke-width=".4"/><rect x="34" y="8.5" width="4" height="4" rx="1" fill="#a47e82" stroke="#8d6f72" stroke-width=".4"/></svg><div class="abs" style="left:114.2px;top:37.5px;width:47px;height:33px;background:#fdfdfd;border:1px solid #d6d6d6;border-radius:4px"></div><svg class="abs" style="left:114.2px;top:37.5px" width="47" height="33" viewBox="0 0 47 33" ><rect x="9.500" y="9" width="29" height="15.500" fill="none" stroke="#262626" stroke-width="2"/></svg><div class="abs" style="left:168.1px;top:37.5px;width:47px;height:33px;background:#fdfdfd;border:1px solid #d6d6d6;border-radius:4px"></div><svg class="abs" style="left:168.1px;top:37.5px" width="47" height="33" viewBox="0 0 47 33" ><path d="M9.500 16.500L16 4.500h15L37.500 16.500L31 28.500H16z" fill="none" stroke="#262626" stroke-width="2"/><text x="17.500" y="22" font-family="Liberation Sans,sans-serif" font-weight="bold" font-size="14.500" fill="#f4f4f4" stroke="#b9b9b9" stroke-width=".6">N</text></svg><div class="abs" style="left:6.4px;top:78.6px;width:47px;height:33px;background:#fdfdfd;border:1px solid #d6d6d6;border-radius:4px"></div><svg class="abs" style="left:6.4px;top:78.6px" width="47" height="33" viewBox="0 0 47 33" ><path d="M37.45 18.09A12.5 12.5 0 1 0 25.00 29.50" fill="none" stroke="#262626" stroke-width="1.700"/><rect x="15.8303" y="4.7606" width="4" height="4" rx="1" fill="#a47e82" stroke="#8d6f72" stroke-width=".4"/><rect x="35.4524" y="16.0894" width="4" height="4" rx="1" fill="#a47e82" stroke="#8d6f72" stroke-width=".4"/><rect x="23" y="27.5" width="4" height="4" rx="1" fill="#a47e82" stroke="#8d6f72" stroke-width=".4"/></svg><div class="abs" style="left:60.3px;top:78.6px;width:47px;height:33px;background:#fdfdfd;border:1px solid #d6d6d6;border-radius:4px"></div><svg class="abs" style="left:60.3px;top:78.6px" width="47" height="33" viewBox="0 0 47 33" ><path d="M37.50 17.00A12.5 12.5 0 1 0 25.00 29.50" fill="none" stroke="#262626" stroke-width="1.700"/><rect x="35.5" y="15" width="4" height="4" rx="1" fill="#a47e82" stroke="#8d6f72" stroke-width=".4"/><rect x="23" y="15" width="4" height="4" rx="1" fill="#a47e82" stroke="#8d6f72" stroke-width=".4"/><rect x="23" y="27.5" width="4" height="4" rx="1" fill="#a47e82" stroke="#8d6f72" stroke-width=".4"/></svg><div class="abs" style="left:114.2px;top:78.6px;width:47px;height:33px;background:#fdfdfd;border:1px solid #d6d6d6;border-radius:4px"></div><svg class="abs" style="left:114.2px;top:78.6px" width="47" height="33" viewBox="0 0 47 33" ><path d="M37.50 17.00A12.5 12.5 0 1 0 25.00 29.50" fill="none" stroke="#262626" stroke-width="1.700"/><path d="M25 17l-10-7M15 10l4.500 .5M15 10l1.200 4" stroke="#d9543f" stroke-width="1.100" fill="none"/><rect x="35.5" y="15" width="4" height="4" rx="1" fill="#a47e82" stroke="#8d6f72" stroke-width=".4"/><rect x="23" y="27.5" width="4" height="4" rx="1" fill="#a47e82" stroke="#8d6f72" stroke-width=".4"/></svg><div class="abs" style="left:168.1px;top:78.6px;width:47px;height:33px;background:#fdfdfd;border:1px solid #d6d6d6;border-radius:4px"></div><svg class="abs" style="left:168.1px;top:78.6px" width="47" height="33" viewBox="0 0 47 33" ><path d="M37.50 17.00A12.5 12.5 0 1 0 25.00 29.50" fill="none" stroke="#262626" stroke-width="1.700"/><path d="M25 29.500h-11M14 29.500l3.500-2.500M14 29.500l3.500 2.500" stroke="#d9543f" stroke-width="1.100" fill="none"/><rect x="35.5" y="15" width="4" height="4" rx="1" fill="#a47e82" stroke="#8d6f72" stroke-width=".4"/><rect x="23" y="27.5" width="4" height="4" rx="1" fill="#a47e82" stroke="#8d6f72" stroke-width=".4"/></svg><div class="abs" style="left:6.4px;top:119.7px;width:47px;height:33px;background:#fdfdfd;border:1px solid #d6d6d6;border-radius:4px"></div><svg class="abs" style="left:6.4px;top:119.7px" width="47" height="33" viewBox="0 0 47 33" ><circle cx="24" cy="16.500" r="12" fill="none" stroke="#262626" stroke-width="1.700"/><rect x="20.9541" y="2.54566" width="4" height="4" rx="1" fill="#a47e82" stroke="#8d6f72" stroke-width=".4"/><rect x="33.8177" y="16.5838" width="4" height="4" rx="1" fill="#a47e82" stroke="#8d6f72" stroke-width=".4"/><rect x="11.6077" y="20.5" width="4" height="4" rx="1" fill="#a47e82" stroke="#8d6f72" stroke-width=".4"/></svg><div class="abs" style="left:60.3px;top:119.7px;width:47px;height:33px;background:#fdfdfd;border:1px solid #d6d6d6;border-radius:4px"></div><svg class="abs" style="left:60.3px;top:119.7px" width="47" height="33" viewBox="0 0 47 33" ><circle cx="24" cy="16.500" r="12" fill="none" stroke="#262626" stroke-width="1.700"/><rect x="22" y="14.5" width="4" height="4" rx="1" fill="#a47e82" stroke="#8d6f72" stroke-width=".4"/><rect x="34" y="14.5" width="4" height="4" rx="1" fill="#a47e82" stroke="#8d6f72" stroke-width=".4"/></svg><div class="abs" style="left:114.2px;top:119.7px;width:47px;height:33px;background:#fdfdfd;border:1px solid #d6d6d6;border-radius:4px"></div><svg class="abs" style="left:114.2px;top:119.7px" width="47" height="33" viewBox="0 0 47 33" ><circle cx="24" cy="16.500" r="12" fill="none" stroke="#262626" stroke-width="1.700"/><rect x="30.4853" y="6.01472" width="4" height="4" rx="1" fill="#a47e82" stroke="#8d6f72" stroke-width=".4"/><rect x="13.5147" y="22.9853" width="4" height="4" rx="1" fill="#a47e82" stroke="#8d6f72" stroke-width=".4"/></svg><div class="abs" style="left:168.1px;top:119.7px;width:47px;height:33px;background:#fdfdfd;border:1px solid #d6d6d6;border-radius:4px"></div><svg class="abs" style="left:168.1px;top:119.7px" width="47" height="33" viewBox="0 0 47 33" ><ellipse cx="24" cy="16.500" rx="15.500" ry="9" fill="none" stroke="#262626" stroke-width="1.700"/></svg><div class="abs" style="left:6.4px;top:160.8px;width:47px;height:33px;background:#fdfdfd;border:1px solid #d6d6d6;border-radius:4px"></div><svg class="abs" style="left:6.4px;top:160.8px" width="47" height="33" viewBox="0 0 47 33" ><path d="M37.50 17.00A12.5 12.5 0 1 0 25.00 29.50" fill="none" stroke="#262626" stroke-width="1.700"/><path d="M25 29.500h-11M14 29.500l3.500-2.500M14 29.500l3.500 2.500M37.500 17v11M37.500 28l-2.500-3.500M37.500 28l2.500-3.500" stroke="#d9543f" stroke-width="1.100" fill="none"/><rect x="35.5" y="15" width="4" height="4" rx="1" fill="#a47e82" stroke="#8d6f72" stroke-width=".4"/><rect x="23" y="27.5" width="4" height="4" rx="1" fill="#a47e82" stroke="#8d6f72" stroke-width=".4"/></svg><div class="abs" style="left:60.3px;top:160.8px;width:47px;height:33px;background:#fdfdfd;border:1px solid #d6d6d6;border-radius:4px"></div><svg class="abs" style="left:60.3px;top:160.8px" width="47" height="33" viewBox="0 0 47 33" ><text x="12.500" y="28.300" font-family="Liberation Serif,serif" font-size="33" fill="#e9e9e9" stroke="#3d3d3d" stroke-width="1.100" textLength="23" lengthAdjust="spacingAndGlyphs">T</text></svg><div class="abs" style="left:114.2px;top:160.8px;width:47px;height:33px;background:#fff;border:1px solid #0078d7;border-radius:4px;box-shadow:inset 0 0 0 1px #fff, inset 0 0 0 2px #9a9a9a"></div><div class="abs" style="left:116.2px;top:162.8px;width:43px;height:29px;border:1px dotted #111;border-radius:2px"></div><svg class="abs" style="left:114.2px;top:160.8px" width="47" height="33" viewBox="0 0 47 33" ><rect x="9" y="10.200" width="28.500" height="12.300" fill="#fff" stroke="#111" stroke-width="1.200"/><text x="10.300" y="21.300" font-family="Liberation Serif,serif" font-weight="bold" font-size="14" fill="#111" textLength="26" lengthAdjust="spacingAndGlyphs">DXF</text><path d="M23 22.500v4" stroke="#111" stroke-width="1.400"/><path d="M20.300 25.500h5.400l-2.700 3.200z" fill="#111"/></svg><div class="abs" style="left:168.1px;top:160.8px;width:47px;height:33px;background:#fdfdfd;border:1px solid #d6d6d6;border-radius:4px"></div><svg class="abs" style="left:168.1px;top:160.8px" width="47" height="33" viewBox="0 0 47 33" ><path d="M9 6c8 0 8 9 15 9s8-9 15-9M9 16c7 0 9 13 15 13M24 15c6 0 8 14 15 14" fill="none" stroke="#262626" stroke-width="1.600"/><path d="M9 22h8v-3l7 4.500-7 4.500v-3H9z" fill="#e8232a"/><rect x="7" y="4" width="4" height="4" rx="1" fill="#a47e82" stroke="#8d6f72" stroke-width=".4"/><rect x="18" y="8" width="4" height="4" rx="1" fill="#a47e82" stroke="#8d6f72" stroke-width=".4"/><rect x="24" y="2.5" width="4" height="4" rx="1" fill="#a47e82" stroke="#8d6f72" stroke-width=".4"/><rect x="37" y="4" width="4" height="4" rx="1" fill="#a47e82" stroke="#8d6f72" stroke-width=".4"/><rect x="7" y="14" width="4" height="4" rx="1" fill="#a47e82" stroke="#8d6f72" stroke-width=".4"/><rect x="24" y="15" width="4" height="4" rx="1" fill="#a47e82" stroke="#8d6f72" stroke-width=".4"/><rect x="22" y="27" width="4" height="4" rx="1" fill="#a47e82" stroke="#8d6f72" stroke-width=".4"/><rect x="37" y="27" width="4" height="4" rx="1" fill="#a47e82" stroke="#8d6f72" stroke-width=".4"/></svg><div class="abs" style="left:6.4px;top:201.9px;width:47px;height:33px;background:#fdfdfd;border:1px solid #d6d6d6;border-radius:4px"></div><svg class="abs" style="left:6.4px;top:201.9px" width="47" height="33" viewBox="0 0 47 33" ><rect x="15.500" y="4.500" width="16" height="25" fill="#fff" stroke="#111" stroke-width="1.300"/><rect x="18.500" y="7.500" width="10" height="9" fill="#fff" stroke="#111" stroke-width="1"/><path d="M19 14l6-6M19 16.500l9-9M21.500 16.500l6.500-6.500M24.500 16.500l3.500-3.500M19 11l3-3" stroke="#111" stroke-width=".8"/></svg><div class="abs" style="left:168.1px;top:243px;width:47px;height:33px;background:#fdfdfd;border:1px solid #d6d6d6;border-radius:4px"></div><svg class="abs" style="left:168.1px;top:243px" width="47" height="33" viewBox="0 0 47 33" ><path d="M15 16.500l2.500-1.500 3.500 4.500c3-5 6-8.500 10-11.500l1 .8c-4.500 4.500-7.500 9-10 15.500z" fill="#22b636" stroke="#16932a" stroke-width=".5"/></svg><svg class="abs" style="left:2px;top:292px" width="70" height="23" viewBox="0 0 70 23" ><path d="M1 1c4 0 5 19 13 19h12c6 0 8-14 11.500-19z" fill="#fff" stroke="#9c9c9c" stroke-width=".9"/><path d="M35 8c1.500 6 3.500 12 8.500 12h12c6 0 8-14 11.500-19H37.500" fill="#ededed" stroke="#a6a6a6" stroke-width=".9"/><path d="M16 14.500l2 .8 1.500-.5 3.500-8" fill="none" stroke="#111" stroke-width="1.500"/><path d="M21 10l1.500-3.500" stroke="#e8c81a" stroke-width="1.500"/><path d="M23 6.500l.8-1.800" stroke="#d22" stroke-width="1.500"/><path d="M48.800 6v6" stroke="#d22" stroke-width="2.200"/><path d="M48.800 5v1.500" stroke="#e8c81a" stroke-width="2.200"/><path d="M48.800 12v5" stroke="#111" stroke-width="1.200"/><ellipse cx="48.800" cy="9" rx="2.300" ry="4" fill="none" stroke="#111" stroke-width=".7"/></svg></div>
<div id="status" class="abs"><span class="st" style="left:2px;letter-spacing:-0.060px;">Pronto</span><span class="st" style="left:981px;letter-spacing:-0.451px;">X= 1022.2</span><span class="st" style="left:1069px;letter-spacing:-0.451px;">Y= 1732.4</span><span class="st" style="left:1158px;letter-spacing:0.000px;">mm</span><span class="st" style="left:1231px;letter-spacing:-0.282px;">Sketch</span><span class="st" style="left:1441px;letter-spacing:-0.238px;">Demo_Porte</span><span class="st" style="left:1521px;letter-spacing:0.062px;">*INI*</span><i class="sep" style="left:964px"></i><i class="sep" style="left:1051px"></i><i class="sep" style="left:1151px"></i><i class="sep" style="left:1190px"></i><i class="sep" style="left:1349px"></i><i class="sep" style="left:1436px"></i><i class="sep" style="left:1694px"></i><div class="abs" style="left:1698px;top:4px;width:222px;height:12px;background:linear-gradient(90deg,#bfe3bb 0,#d4ecd0 25%,#e8f3e6 60%,#eef3ed 100%)"></div><i class="abs" style="left:1207px;top:6px;width:7px;height:7px;border-radius:50%;background:#e8151b"></i><span class="st" style="left:1785px;letter-spacing:-0.559px;">The End !</span></div>
</body></html>
